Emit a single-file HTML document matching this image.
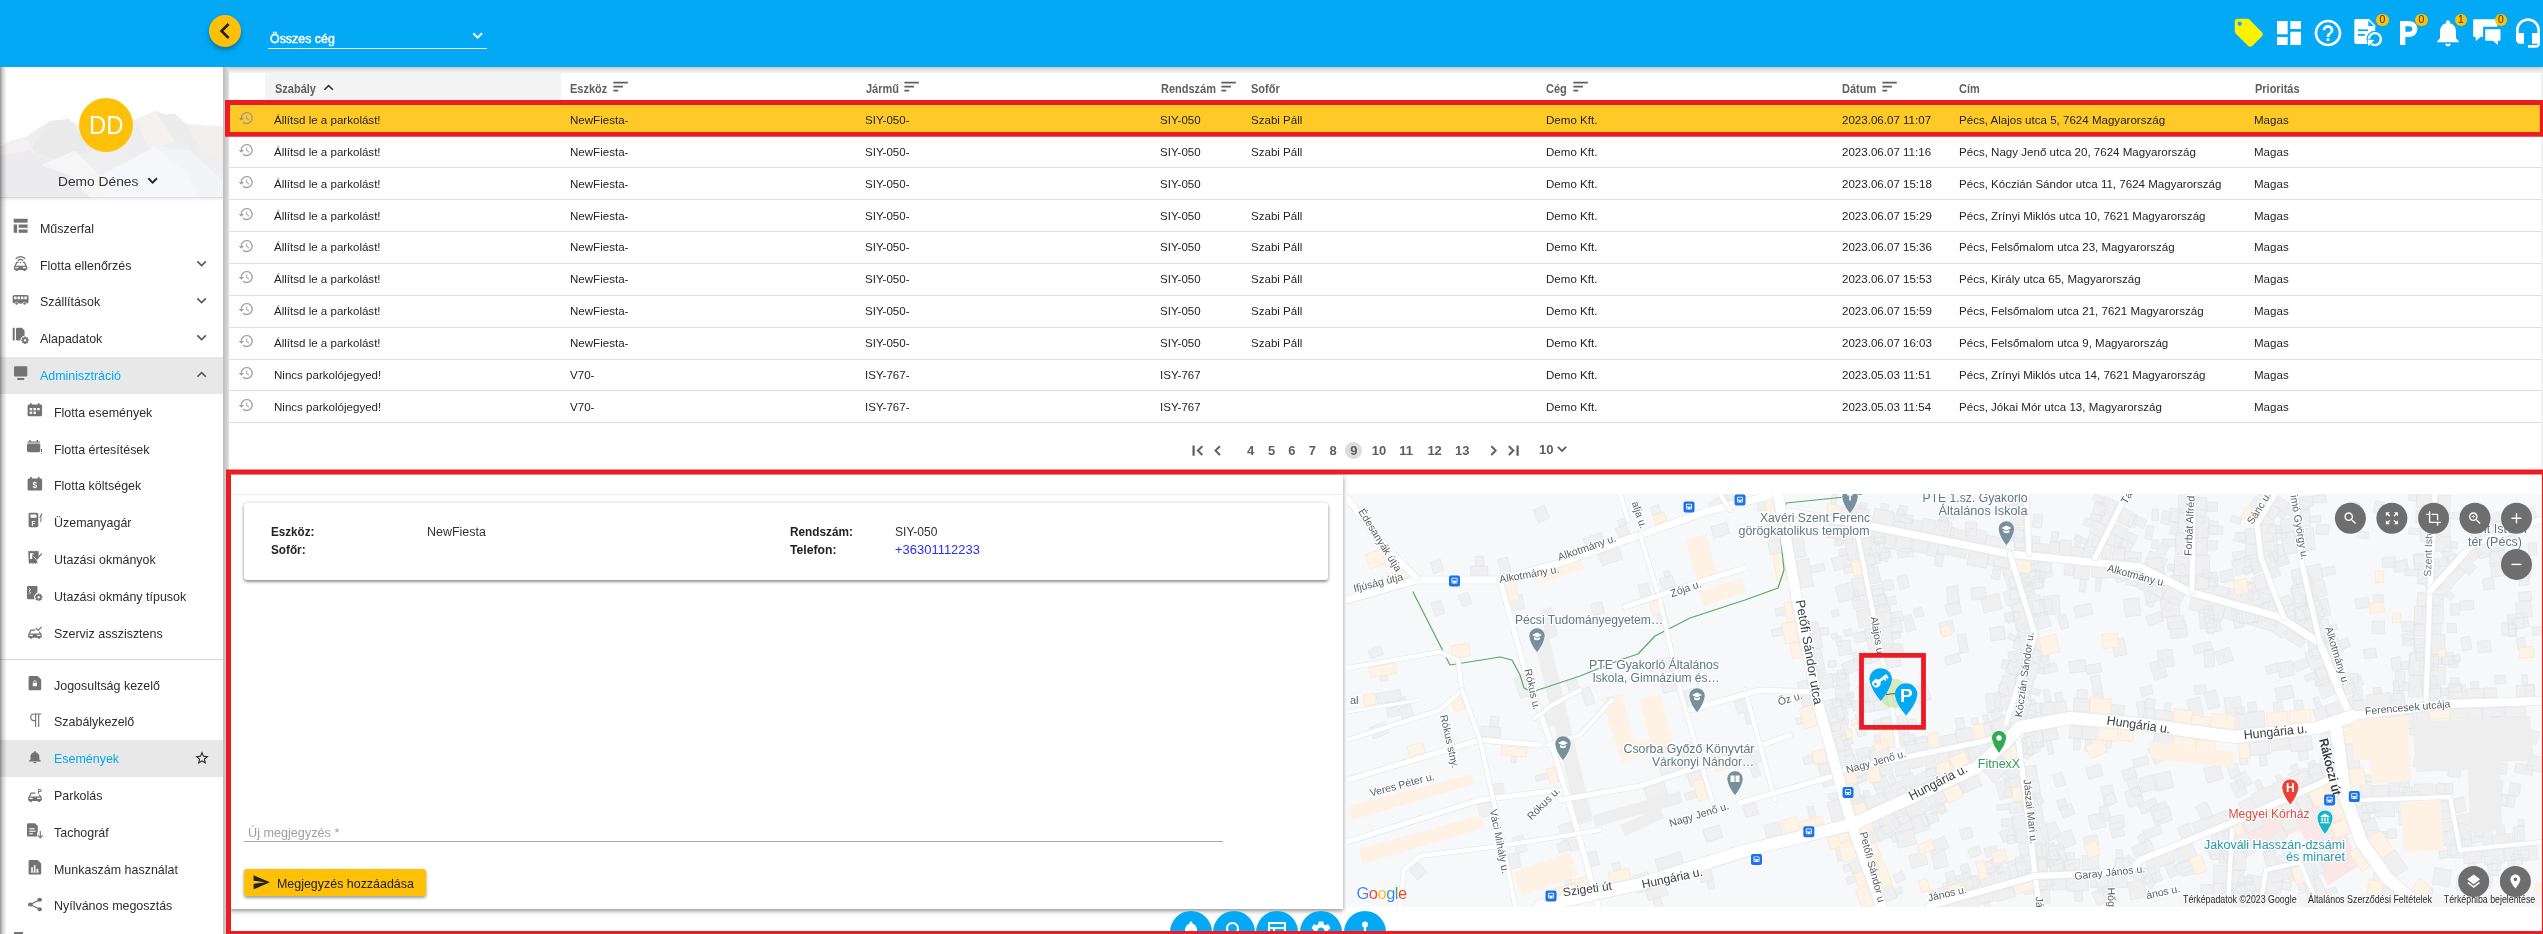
<!DOCTYPE html>
<html lang="hu"><head><meta charset="utf-8"><title>Események</title>
<style>
html,body{margin:0;padding:0}
body{width:2543px;height:934px;overflow:hidden;position:relative;background:#fff;font-family:"Liberation Sans",sans-serif}
.t{position:absolute;white-space:nowrap;line-height:1;transform-origin:0 50%}
.abs{position:absolute}
svg{display:block}
</style></head><body><div id="w" style="position:absolute;left:0;top:0;width:2543px;height:934px;overflow:hidden;will-change:transform">

<div class="abs" style="left:229px;top:66px;width:2314px;height:7px;background:#f3f3f3"></div>
<div class="abs" style="left:265px;top:73px;width:296px;height:31px;background:#f4f4f4"></div>
<span class="t" style="left:274.7px;top:82.8px;font-size:12.0px;color:#5f5f5f;font-weight:bold;transform:scaleX(0.9150);">Szabály</span>
<span class="t" style="left:570.0px;top:82.8px;font-size:12.0px;color:#5f5f5f;font-weight:bold;transform:scaleX(0.9150);">Eszköz</span>
<svg viewBox="0 0 24 24" width="19.2" height="19.2" style="position:absolute;left:610.6px;top:77.1px;fill:#5f5f5f;"><path d="M3 18h6v-2H3v2zM3 6v2h18V6H3zm0 7h12v-2H3v2z"/></svg>
<span class="t" style="left:865.6px;top:82.8px;font-size:12.0px;color:#5f5f5f;font-weight:bold;transform:scaleX(0.9150);">Jármű</span>
<svg viewBox="0 0 24 24" width="19.2" height="19.2" style="position:absolute;left:902.3000000000001px;top:77.1px;fill:#5f5f5f;"><path d="M3 18h6v-2H3v2zM3 6v2h18V6H3zm0 7h12v-2H3v2z"/></svg>
<span class="t" style="left:1160.9px;top:82.8px;font-size:12.0px;color:#5f5f5f;font-weight:bold;transform:scaleX(0.9150);">Rendszám</span>
<svg viewBox="0 0 24 24" width="19.2" height="19.2" style="position:absolute;left:1219.3999999999999px;top:77.1px;fill:#5f5f5f;"><path d="M3 18h6v-2H3v2zM3 6v2h18V6H3zm0 7h12v-2H3v2z"/></svg>
<span class="t" style="left:1251.0px;top:82.8px;font-size:12.0px;color:#5f5f5f;font-weight:bold;transform:scaleX(0.9150);">Sofőr</span>
<span class="t" style="left:1546.4px;top:82.8px;font-size:12.0px;color:#5f5f5f;font-weight:bold;transform:scaleX(0.9150);">Cég</span>
<svg viewBox="0 0 24 24" width="19.2" height="19.2" style="position:absolute;left:1570.8999999999999px;top:77.1px;fill:#5f5f5f;"><path d="M3 18h6v-2H3v2zM3 6v2h18V6H3zm0 7h12v-2H3v2z"/></svg>
<span class="t" style="left:1842.3px;top:82.8px;font-size:12.0px;color:#5f5f5f;font-weight:bold;transform:scaleX(0.9150);">Dátum</span>
<svg viewBox="0 0 24 24" width="19.2" height="19.2" style="position:absolute;left:1879.6px;top:77.1px;fill:#5f5f5f;"><path d="M3 18h6v-2H3v2zM3 6v2h18V6H3zm0 7h12v-2H3v2z"/></svg>
<span class="t" style="left:1959.4px;top:82.8px;font-size:12.0px;color:#5f5f5f;font-weight:bold;transform:scaleX(0.9150);">Cím</span>
<span class="t" style="left:2254.8px;top:82.8px;font-size:12.0px;color:#5f5f5f;font-weight:bold;transform:scaleX(0.9150);">Prioritás</span>
<svg viewBox="0 0 24 24" width="19.2" height="19.2" style="position:absolute;left:318.9px;top:78.3px;fill:#333;"><path d="M12 8l-6 6 1.41 1.41L12 10.83l4.59 4.58L18 14z"/></svg>
<div class="abs" style="left:229px;top:104px;width:2314px;height:31.7px;background:#ffca28"></div>
<div class="abs" style="left:229px;top:135.2px;width:2314px;height:1px;background:#dedede"></div>
<svg viewBox="0 0 24 24" width="16.2" height="16.2" style="position:absolute;left:237.7px;top:109.9px;fill:#9a9a8e;"><path d="M13 3c-4.97 0-9 4.03-9 9H1l3.89 3.89.07.14L9 12H6c0-3.87 3.13-7 7-7s7 3.13 7 7-3.13 7-7 7c-1.93 0-3.68-.79-4.94-2.06l-1.42 1.42C8.27 19.99 10.51 21 13 21c4.97 0 9-4.03 9-9s-4.03-9-9-9zm-1 5v5l4.28 2.54.72-1.21-3.5-2.08V8H12z"/></svg>
<span class="t" style="left:274.2px;top:114.8px;font-size:11.8px;color:#242424;transform:scaleX(0.9790);">Állítsd le a parkolást!</span>
<span class="t" style="left:569.5px;top:114.8px;font-size:11.8px;color:#242424;transform:scaleX(0.9790);">NewFiesta-</span>
<span class="t" style="left:865.1px;top:114.8px;font-size:11.8px;color:#242424;transform:scaleX(0.9790);">SIY-050-</span>
<span class="t" style="left:1160.4px;top:114.8px;font-size:11.8px;color:#242424;transform:scaleX(0.9790);">SIY-050</span>
<span class="t" style="left:1250.5px;top:114.8px;font-size:11.8px;color:#242424;transform:scaleX(0.9790);">Szabi Páll</span>
<span class="t" style="left:1545.9px;top:114.8px;font-size:11.8px;color:#242424;transform:scaleX(0.9790);">Demo Kft.</span>
<span class="t" style="left:1841.8px;top:114.8px;font-size:11.8px;color:#242424;transform:scaleX(0.9790);">2023.06.07 11:07</span>
<span class="t" style="left:1958.9px;top:114.8px;font-size:11.8px;color:#242424;transform:scaleX(0.9790);">Pécs, Alajos utca 5, 7624 Magyarország</span>
<span class="t" style="left:2254.3px;top:114.8px;font-size:11.8px;color:#242424;transform:scaleX(0.9790);">Magas</span>
<div class="abs" style="left:229px;top:167.1px;width:2314px;height:1px;background:#dedede"></div>
<svg viewBox="0 0 24 24" width="16.2" height="16.2" style="position:absolute;left:237.7px;top:141.8px;fill:#a3a3a3;"><path d="M13 3c-4.97 0-9 4.03-9 9H1l3.89 3.89.07.14L9 12H6c0-3.87 3.13-7 7-7s7 3.13 7 7-3.13 7-7 7c-1.93 0-3.68-.79-4.94-2.06l-1.42 1.42C8.27 19.99 10.51 21 13 21c4.97 0 9-4.03 9-9s-4.03-9-9-9zm-1 5v5l4.28 2.54.72-1.21-3.5-2.08V8H12z"/></svg>
<span class="t" style="left:274.2px;top:146.7px;font-size:11.8px;color:#242424;transform:scaleX(0.9790);">Állítsd le a parkolást!</span>
<span class="t" style="left:569.5px;top:146.7px;font-size:11.8px;color:#242424;transform:scaleX(0.9790);">NewFiesta-</span>
<span class="t" style="left:865.1px;top:146.7px;font-size:11.8px;color:#242424;transform:scaleX(0.9790);">SIY-050-</span>
<span class="t" style="left:1160.4px;top:146.7px;font-size:11.8px;color:#242424;transform:scaleX(0.9790);">SIY-050</span>
<span class="t" style="left:1250.5px;top:146.7px;font-size:11.8px;color:#242424;transform:scaleX(0.9790);">Szabi Páll</span>
<span class="t" style="left:1545.9px;top:146.7px;font-size:11.8px;color:#242424;transform:scaleX(0.9790);">Demo Kft.</span>
<span class="t" style="left:1841.8px;top:146.7px;font-size:11.8px;color:#242424;transform:scaleX(0.9790);">2023.06.07 11:16</span>
<span class="t" style="left:1958.9px;top:146.7px;font-size:11.8px;color:#242424;transform:scaleX(0.9790);">Pécs, Nagy Jenő utca 20, 7624 Magyarország</span>
<span class="t" style="left:2254.3px;top:146.7px;font-size:11.8px;color:#242424;transform:scaleX(0.9790);">Magas</span>
<div class="abs" style="left:229px;top:199.0px;width:2314px;height:1px;background:#dedede"></div>
<svg viewBox="0 0 24 24" width="16.2" height="16.2" style="position:absolute;left:237.7px;top:173.7px;fill:#a3a3a3;"><path d="M13 3c-4.97 0-9 4.03-9 9H1l3.89 3.89.07.14L9 12H6c0-3.87 3.13-7 7-7s7 3.13 7 7-3.13 7-7 7c-1.93 0-3.68-.79-4.94-2.06l-1.42 1.42C8.27 19.99 10.51 21 13 21c4.97 0 9-4.03 9-9s-4.03-9-9-9zm-1 5v5l4.28 2.54.72-1.21-3.5-2.08V8H12z"/></svg>
<span class="t" style="left:274.2px;top:178.6px;font-size:11.8px;color:#242424;transform:scaleX(0.9790);">Állítsd le a parkolást!</span>
<span class="t" style="left:569.5px;top:178.6px;font-size:11.8px;color:#242424;transform:scaleX(0.9790);">NewFiesta-</span>
<span class="t" style="left:865.1px;top:178.6px;font-size:11.8px;color:#242424;transform:scaleX(0.9790);">SIY-050-</span>
<span class="t" style="left:1160.4px;top:178.6px;font-size:11.8px;color:#242424;transform:scaleX(0.9790);">SIY-050</span>
<span class="t" style="left:1545.9px;top:178.6px;font-size:11.8px;color:#242424;transform:scaleX(0.9790);">Demo Kft.</span>
<span class="t" style="left:1841.8px;top:178.6px;font-size:11.8px;color:#242424;transform:scaleX(0.9790);">2023.06.07 15:18</span>
<span class="t" style="left:1958.9px;top:178.6px;font-size:11.8px;color:#242424;transform:scaleX(0.9790);">Pécs, Kóczián Sándor utca 11, 7624 Magyarország</span>
<span class="t" style="left:2254.3px;top:178.6px;font-size:11.8px;color:#242424;transform:scaleX(0.9790);">Magas</span>
<div class="abs" style="left:229px;top:230.9px;width:2314px;height:1px;background:#dedede"></div>
<svg viewBox="0 0 24 24" width="16.2" height="16.2" style="position:absolute;left:237.7px;top:205.6px;fill:#a3a3a3;"><path d="M13 3c-4.97 0-9 4.03-9 9H1l3.89 3.89.07.14L9 12H6c0-3.87 3.13-7 7-7s7 3.13 7 7-3.13 7-7 7c-1.93 0-3.68-.79-4.94-2.06l-1.42 1.42C8.27 19.99 10.51 21 13 21c4.97 0 9-4.03 9-9s-4.03-9-9-9zm-1 5v5l4.28 2.54.72-1.21-3.5-2.08V8H12z"/></svg>
<span class="t" style="left:274.2px;top:210.5px;font-size:11.8px;color:#242424;transform:scaleX(0.9790);">Állítsd le a parkolást!</span>
<span class="t" style="left:569.5px;top:210.5px;font-size:11.8px;color:#242424;transform:scaleX(0.9790);">NewFiesta-</span>
<span class="t" style="left:865.1px;top:210.5px;font-size:11.8px;color:#242424;transform:scaleX(0.9790);">SIY-050-</span>
<span class="t" style="left:1160.4px;top:210.5px;font-size:11.8px;color:#242424;transform:scaleX(0.9790);">SIY-050</span>
<span class="t" style="left:1250.5px;top:210.5px;font-size:11.8px;color:#242424;transform:scaleX(0.9790);">Szabi Páll</span>
<span class="t" style="left:1545.9px;top:210.5px;font-size:11.8px;color:#242424;transform:scaleX(0.9790);">Demo Kft.</span>
<span class="t" style="left:1841.8px;top:210.5px;font-size:11.8px;color:#242424;transform:scaleX(0.9790);">2023.06.07 15:29</span>
<span class="t" style="left:1958.9px;top:210.5px;font-size:11.8px;color:#242424;transform:scaleX(0.9790);">Pécs, Zrínyi Miklós utca 10, 7621 Magyarország</span>
<span class="t" style="left:2254.3px;top:210.5px;font-size:11.8px;color:#242424;transform:scaleX(0.9790);">Magas</span>
<div class="abs" style="left:229px;top:262.8px;width:2314px;height:1px;background:#dedede"></div>
<svg viewBox="0 0 24 24" width="16.2" height="16.2" style="position:absolute;left:237.7px;top:237.5px;fill:#a3a3a3;"><path d="M13 3c-4.97 0-9 4.03-9 9H1l3.89 3.89.07.14L9 12H6c0-3.87 3.13-7 7-7s7 3.13 7 7-3.13 7-7 7c-1.93 0-3.68-.79-4.94-2.06l-1.42 1.42C8.27 19.99 10.51 21 13 21c4.97 0 9-4.03 9-9s-4.03-9-9-9zm-1 5v5l4.28 2.54.72-1.21-3.5-2.08V8H12z"/></svg>
<span class="t" style="left:274.2px;top:242.4px;font-size:11.8px;color:#242424;transform:scaleX(0.9790);">Állítsd le a parkolást!</span>
<span class="t" style="left:569.5px;top:242.4px;font-size:11.8px;color:#242424;transform:scaleX(0.9790);">NewFiesta-</span>
<span class="t" style="left:865.1px;top:242.4px;font-size:11.8px;color:#242424;transform:scaleX(0.9790);">SIY-050-</span>
<span class="t" style="left:1160.4px;top:242.4px;font-size:11.8px;color:#242424;transform:scaleX(0.9790);">SIY-050</span>
<span class="t" style="left:1250.5px;top:242.4px;font-size:11.8px;color:#242424;transform:scaleX(0.9790);">Szabi Páll</span>
<span class="t" style="left:1545.9px;top:242.4px;font-size:11.8px;color:#242424;transform:scaleX(0.9790);">Demo Kft.</span>
<span class="t" style="left:1841.8px;top:242.4px;font-size:11.8px;color:#242424;transform:scaleX(0.9790);">2023.06.07 15:36</span>
<span class="t" style="left:1958.9px;top:242.4px;font-size:11.8px;color:#242424;transform:scaleX(0.9790);">Pécs, Felsőmalom utca 23, Magyarország</span>
<span class="t" style="left:2254.3px;top:242.4px;font-size:11.8px;color:#242424;transform:scaleX(0.9790);">Magas</span>
<div class="abs" style="left:229px;top:294.7px;width:2314px;height:1px;background:#dedede"></div>
<svg viewBox="0 0 24 24" width="16.2" height="16.2" style="position:absolute;left:237.7px;top:269.4px;fill:#a3a3a3;"><path d="M13 3c-4.97 0-9 4.03-9 9H1l3.89 3.89.07.14L9 12H6c0-3.87 3.13-7 7-7s7 3.13 7 7-3.13 7-7 7c-1.93 0-3.68-.79-4.94-2.06l-1.42 1.42C8.27 19.99 10.51 21 13 21c4.97 0 9-4.03 9-9s-4.03-9-9-9zm-1 5v5l4.28 2.54.72-1.21-3.5-2.08V8H12z"/></svg>
<span class="t" style="left:274.2px;top:274.3px;font-size:11.8px;color:#242424;transform:scaleX(0.9790);">Állítsd le a parkolást!</span>
<span class="t" style="left:569.5px;top:274.3px;font-size:11.8px;color:#242424;transform:scaleX(0.9790);">NewFiesta-</span>
<span class="t" style="left:865.1px;top:274.3px;font-size:11.8px;color:#242424;transform:scaleX(0.9790);">SIY-050-</span>
<span class="t" style="left:1160.4px;top:274.3px;font-size:11.8px;color:#242424;transform:scaleX(0.9790);">SIY-050</span>
<span class="t" style="left:1250.5px;top:274.3px;font-size:11.8px;color:#242424;transform:scaleX(0.9790);">Szabi Páll</span>
<span class="t" style="left:1545.9px;top:274.3px;font-size:11.8px;color:#242424;transform:scaleX(0.9790);">Demo Kft.</span>
<span class="t" style="left:1841.8px;top:274.3px;font-size:11.8px;color:#242424;transform:scaleX(0.9790);">2023.06.07 15:53</span>
<span class="t" style="left:1958.9px;top:274.3px;font-size:11.8px;color:#242424;transform:scaleX(0.9790);">Pécs, Király utca 65, Magyarország</span>
<span class="t" style="left:2254.3px;top:274.3px;font-size:11.8px;color:#242424;transform:scaleX(0.9790);">Magas</span>
<div class="abs" style="left:229px;top:326.6px;width:2314px;height:1px;background:#dedede"></div>
<svg viewBox="0 0 24 24" width="16.2" height="16.2" style="position:absolute;left:237.7px;top:301.29999999999995px;fill:#a3a3a3;"><path d="M13 3c-4.97 0-9 4.03-9 9H1l3.89 3.89.07.14L9 12H6c0-3.87 3.13-7 7-7s7 3.13 7 7-3.13 7-7 7c-1.93 0-3.68-.79-4.94-2.06l-1.42 1.42C8.27 19.99 10.51 21 13 21c4.97 0 9-4.03 9-9s-4.03-9-9-9zm-1 5v5l4.28 2.54.72-1.21-3.5-2.08V8H12z"/></svg>
<span class="t" style="left:274.2px;top:306.2px;font-size:11.8px;color:#242424;transform:scaleX(0.9790);">Állítsd le a parkolást!</span>
<span class="t" style="left:569.5px;top:306.2px;font-size:11.8px;color:#242424;transform:scaleX(0.9790);">NewFiesta-</span>
<span class="t" style="left:865.1px;top:306.2px;font-size:11.8px;color:#242424;transform:scaleX(0.9790);">SIY-050-</span>
<span class="t" style="left:1160.4px;top:306.2px;font-size:11.8px;color:#242424;transform:scaleX(0.9790);">SIY-050</span>
<span class="t" style="left:1250.5px;top:306.2px;font-size:11.8px;color:#242424;transform:scaleX(0.9790);">Szabi Páll</span>
<span class="t" style="left:1545.9px;top:306.2px;font-size:11.8px;color:#242424;transform:scaleX(0.9790);">Demo Kft.</span>
<span class="t" style="left:1841.8px;top:306.2px;font-size:11.8px;color:#242424;transform:scaleX(0.9790);">2023.06.07 15:59</span>
<span class="t" style="left:1958.9px;top:306.2px;font-size:11.8px;color:#242424;transform:scaleX(0.9790);">Pécs, Felsőmalom utca 21, 7621 Magyarország</span>
<span class="t" style="left:2254.3px;top:306.2px;font-size:11.8px;color:#242424;transform:scaleX(0.9790);">Magas</span>
<div class="abs" style="left:229px;top:358.5px;width:2314px;height:1px;background:#dedede"></div>
<svg viewBox="0 0 24 24" width="16.2" height="16.2" style="position:absolute;left:237.7px;top:333.2px;fill:#a3a3a3;"><path d="M13 3c-4.97 0-9 4.03-9 9H1l3.89 3.89.07.14L9 12H6c0-3.87 3.13-7 7-7s7 3.13 7 7-3.13 7-7 7c-1.93 0-3.68-.79-4.94-2.06l-1.42 1.42C8.27 19.99 10.51 21 13 21c4.97 0 9-4.03 9-9s-4.03-9-9-9zm-1 5v5l4.28 2.54.72-1.21-3.5-2.08V8H12z"/></svg>
<span class="t" style="left:274.2px;top:338.1px;font-size:11.8px;color:#242424;transform:scaleX(0.9790);">Állítsd le a parkolást!</span>
<span class="t" style="left:569.5px;top:338.1px;font-size:11.8px;color:#242424;transform:scaleX(0.9790);">NewFiesta-</span>
<span class="t" style="left:865.1px;top:338.1px;font-size:11.8px;color:#242424;transform:scaleX(0.9790);">SIY-050-</span>
<span class="t" style="left:1160.4px;top:338.1px;font-size:11.8px;color:#242424;transform:scaleX(0.9790);">SIY-050</span>
<span class="t" style="left:1250.5px;top:338.1px;font-size:11.8px;color:#242424;transform:scaleX(0.9790);">Szabi Páll</span>
<span class="t" style="left:1545.9px;top:338.1px;font-size:11.8px;color:#242424;transform:scaleX(0.9790);">Demo Kft.</span>
<span class="t" style="left:1841.8px;top:338.1px;font-size:11.8px;color:#242424;transform:scaleX(0.9790);">2023.06.07 16:03</span>
<span class="t" style="left:1958.9px;top:338.1px;font-size:11.8px;color:#242424;transform:scaleX(0.9790);">Pécs, Felsőmalom utca 9, Magyarország</span>
<span class="t" style="left:2254.3px;top:338.1px;font-size:11.8px;color:#242424;transform:scaleX(0.9790);">Magas</span>
<div class="abs" style="left:229px;top:390.4px;width:2314px;height:1px;background:#dedede"></div>
<svg viewBox="0 0 24 24" width="16.2" height="16.2" style="position:absolute;left:237.7px;top:365.1px;fill:#a3a3a3;"><path d="M13 3c-4.97 0-9 4.03-9 9H1l3.89 3.89.07.14L9 12H6c0-3.87 3.13-7 7-7s7 3.13 7 7-3.13 7-7 7c-1.93 0-3.68-.79-4.94-2.06l-1.42 1.42C8.27 19.99 10.51 21 13 21c4.97 0 9-4.03 9-9s-4.03-9-9-9zm-1 5v5l4.28 2.54.72-1.21-3.5-2.08V8H12z"/></svg>
<span class="t" style="left:274.2px;top:370.0px;font-size:11.8px;color:#242424;transform:scaleX(0.9790);">Nincs parkolójegyed!</span>
<span class="t" style="left:569.5px;top:370.0px;font-size:11.8px;color:#242424;transform:scaleX(0.9790);">V70-</span>
<span class="t" style="left:865.1px;top:370.0px;font-size:11.8px;color:#242424;transform:scaleX(0.9790);">ISY-767-</span>
<span class="t" style="left:1160.4px;top:370.0px;font-size:11.8px;color:#242424;transform:scaleX(0.9790);">ISY-767</span>
<span class="t" style="left:1545.9px;top:370.0px;font-size:11.8px;color:#242424;transform:scaleX(0.9790);">Demo Kft.</span>
<span class="t" style="left:1841.8px;top:370.0px;font-size:11.8px;color:#242424;transform:scaleX(0.9790);">2023.05.03 11:51</span>
<span class="t" style="left:1958.9px;top:370.0px;font-size:11.8px;color:#242424;transform:scaleX(0.9790);">Pécs, Zrínyi Miklós utca 14, 7621 Magyarország</span>
<span class="t" style="left:2254.3px;top:370.0px;font-size:11.8px;color:#242424;transform:scaleX(0.9790);">Magas</span>
<div class="abs" style="left:229px;top:422.3px;width:2314px;height:1px;background:#dedede"></div>
<svg viewBox="0 0 24 24" width="16.2" height="16.2" style="position:absolute;left:237.7px;top:397.0px;fill:#a3a3a3;"><path d="M13 3c-4.97 0-9 4.03-9 9H1l3.89 3.89.07.14L9 12H6c0-3.87 3.13-7 7-7s7 3.13 7 7-3.13 7-7 7c-1.93 0-3.68-.79-4.94-2.06l-1.42 1.42C8.27 19.99 10.51 21 13 21c4.97 0 9-4.03 9-9s-4.03-9-9-9zm-1 5v5l4.28 2.54.72-1.21-3.5-2.08V8H12z"/></svg>
<span class="t" style="left:274.2px;top:401.9px;font-size:11.8px;color:#242424;transform:scaleX(0.9790);">Nincs parkolójegyed!</span>
<span class="t" style="left:569.5px;top:401.9px;font-size:11.8px;color:#242424;transform:scaleX(0.9790);">V70-</span>
<span class="t" style="left:865.1px;top:401.9px;font-size:11.8px;color:#242424;transform:scaleX(0.9790);">ISY-767-</span>
<span class="t" style="left:1160.4px;top:401.9px;font-size:11.8px;color:#242424;transform:scaleX(0.9790);">ISY-767</span>
<span class="t" style="left:1545.9px;top:401.9px;font-size:11.8px;color:#242424;transform:scaleX(0.9790);">Demo Kft.</span>
<span class="t" style="left:1841.8px;top:401.9px;font-size:11.8px;color:#242424;transform:scaleX(0.9790);">2023.05.03 11:54</span>
<span class="t" style="left:1958.9px;top:401.9px;font-size:11.8px;color:#242424;transform:scaleX(0.9790);">Pécs, Jókai Mór utca 13, Magyarország</span>
<span class="t" style="left:2254.3px;top:401.9px;font-size:11.8px;color:#242424;transform:scaleX(0.9790);">Magas</span>
<div class="abs" style="left:2541px;top:66px;width:2px;height:404px;background:#f0f0f0"></div>
<svg viewBox="0 0 24 24" width="19.2" height="19.2" style="position:absolute;left:1188.0px;top:441.0px;fill:#5f5f5f;stroke:#5f5f5f;stroke-width:.7"><path d="M18.41 16.59L13.82 12l4.59-4.59L17 6l-6 6 6 6zM6 6h2v12H6z"/></svg>
<svg viewBox="0 0 24 24" width="19.2" height="19.2" style="position:absolute;left:1207.7px;top:441.0px;fill:#5f5f5f;stroke:#5f5f5f;stroke-width:.7"><path d="M15.41 7.41L14 6l-6 6 6 6 1.41-1.41L10.83 12z"/></svg>
<div class="abs" style="left:1345.1px;top:441.9px;width:17.4px;height:17.4px;border-radius:50%;background:#dcdcdc"></div>
<span class="t" style="left:1247.0px;top:444.3px;font-size:13px;color:#5f5f5f;font-weight:bold;">4</span>
<span class="t" style="left:1268.0px;top:444.3px;font-size:13px;color:#5f5f5f;font-weight:bold;">5</span>
<span class="t" style="left:1288.3px;top:444.3px;font-size:13px;color:#5f5f5f;font-weight:bold;">6</span>
<span class="t" style="left:1308.8px;top:444.3px;font-size:13px;color:#5f5f5f;font-weight:bold;">7</span>
<span class="t" style="left:1329.6px;top:444.3px;font-size:13px;color:#5f5f5f;font-weight:bold;">8</span>
<span class="t" style="left:1350.2px;top:444.3px;font-size:13px;color:#5f5f5f;font-weight:bold;">9</span>
<span class="t" style="left:1371.7px;top:444.3px;font-size:13px;color:#5f5f5f;font-weight:bold;">10</span>
<span class="t" style="left:1399.3px;top:444.3px;font-size:13px;color:#5f5f5f;font-weight:bold;">11</span>
<span class="t" style="left:1427.4px;top:444.3px;font-size:13px;color:#5f5f5f;font-weight:bold;">12</span>
<span class="t" style="left:1455.1px;top:444.3px;font-size:13px;color:#5f5f5f;font-weight:bold;">13</span>
<svg viewBox="0 0 24 24" width="19.2" height="19.2" style="position:absolute;left:1483.8000000000002px;top:441.0px;fill:#5f5f5f;stroke:#5f5f5f;stroke-width:.7"><path d="M10 6L8.59 7.41 13.17 12l-4.58 4.59L10 18l6-6z"/></svg>
<svg viewBox="0 0 24 24" width="19.2" height="19.2" style="position:absolute;left:1503.6000000000001px;top:441.0px;fill:#5f5f5f;stroke:#5f5f5f;stroke-width:.7"><path d="M5.59 7.41L10.18 12l-4.59 4.59L7 18l6-6-6-6zM16 6h2v12h-2z"/></svg>
<span class="t" style="left:1539.0px;top:443.4px;font-size:13px;color:#5f5f5f;font-weight:bold;">10</span>
<svg viewBox="0 0 24 24" width="18" height="18" style="position:absolute;left:1552.9px;top:440.40000000000003px;fill:#5f5f5f;stroke:#5f5f5f;stroke-width:.7"><path d="M16.59 8.59L12 13.17 7.41 8.59 6 10l6 6 6-6z"/></svg>
<div class="abs" style="left:229px;top:475px;width:1114px;height:434px;background:#fff;box-shadow:0 2px 4px rgba(0,0,0,.35),0 1px 8px rgba(0,0,0,.12)"></div>
<div class="abs" style="left:229px;top:493.5px;width:2314px;height:1px;background:#ececec"></div>
<div class="abs" style="left:244px;top:503px;width:1083.5px;height:76.5px;background:#fff;border-radius:3px;box-shadow:0 2px 3px rgba(0,0,0,.38),0 0 5px rgba(0,0,0,.14)"></div>
<span class="t" style="left:270.9px;top:525.7px;font-size:12.4px;color:#222;font-weight:bold;transform:scaleX(0.9400);">Eszköz:</span>
<span class="t" style="left:270.9px;top:543.5px;font-size:12.4px;color:#222;font-weight:bold;transform:scaleX(0.9478);">Sofőr:</span>
<span class="t" style="left:427.0px;top:525.7px;font-size:12.4px;color:#333;transform:scaleX(1.0073);">NewFiesta</span>
<span class="t" style="left:789.5px;top:525.7px;font-size:12.4px;color:#222;font-weight:bold;transform:scaleX(0.9524);">Rendszám:</span>
<span class="t" style="left:789.5px;top:543.5px;font-size:12.4px;color:#222;font-weight:bold;transform:scaleX(0.9831);">Telefon:</span>
<span class="t" style="left:894.5px;top:525.7px;font-size:12.4px;color:#333;transform:scaleX(0.9732);">SIY-050</span>
<span class="t" style="left:894.5px;top:543.5px;font-size:12.4px;color:#2c2cf2;transform:scaleX(1.0460);">+36301112233</span>
<span class="t" style="left:248.4px;top:826.2px;font-size:13.2px;color:#9e9e9e;transform:scaleX(0.9583);">Új megjegyzés *</span>
<div class="abs" style="left:244px;top:841px;width:979px;height:1px;background:#a8a8a8"></div>
<div class="abs" style="left:244px;top:869px;width:182px;height:27px;background:#ffc107;border-radius:3px;box-shadow:0 2px 3px rgba(0,0,0,.3),0 1px 4px rgba(0,0,0,.15)"></div>
<svg viewBox="0 0 24 24" width="18.7" height="18.7" style="position:absolute;left:252.2px;top:872.8px;fill:#222;"><path d="M2.01 21L23 12 2.01 3 2 10l15 2-15 2z"/></svg>
<span class="t" style="left:276.5px;top:876.7px;font-size:13.2px;color:#222;transform:scaleX(0.9429);">Megjegyzés hozzáadása</span>
<div class="abs" style="left:1170.0px;top:911px;width:42px;height:42px;border-radius:50%;background:#03a9f4"></div>
<svg viewBox="0 0 24 24" width="24" height="24" style="position:absolute;left:1179px;top:918.6px;fill:#fff;"><path d="M12 22c1.1 0 2-.9 2-2h-4c0 1.1.89 2 2 2zm6-6v-5c0-3.07-1.64-5.64-4.5-6.32V4c0-.83-.67-1.5-1.5-1.5s-1.5.67-1.5 1.5v.68C7.63 5.36 6 7.92 6 11v5l-2 2v1h16v-1l-2-2z"/></svg>
<div class="abs" style="left:1212.8px;top:911px;width:42px;height:42px;border-radius:50%;background:#03a9f4"></div>
<svg viewBox="0 0 24 24" width="24" height="24" style="position:absolute;left:1223.3px;top:918.6px;fill:#fff;"><path d="M15.5 14h-.79l-.28-.27C15.41 12.59 16 11.11 16 9.5 16 5.91 13.09 3 9.5 3S3 5.91 3 9.5 5.91 16 9.5 16c1.61 0 3.09-.59 4.23-1.57l.27.28v.79l5 4.99L20.49 19l-4.99-5zm-6 0C7.01 14 5 11.99 5 9.5S7.01 5 9.5 5 14 7.01 14 9.5 11.99 14 9.5 14z"/></svg>
<div class="abs" style="left:1256.4px;top:911px;width:42px;height:42px;border-radius:50%;background:#03a9f4"></div>
<svg viewBox="0 0 24 24" width="24" height="24" style="position:absolute;left:1265.4px;top:918.6px;fill:#fff;"><path d="M3 3v18h18V3H3zm5 16H5V10h3v9zm11 0h-9V10h9v9zm0-11H5V5h14v3z"/></svg>
<div class="abs" style="left:1300.0px;top:911px;width:42px;height:42px;border-radius:50%;background:#03a9f4"></div>
<svg viewBox="0 0 24 24" width="24" height="24" style="position:absolute;left:1309px;top:918.6px;fill:#fff;"><path d="M19.14 12.94c.04-.3.06-.61.06-.94 0-.32-.02-.64-.07-.94l2.03-1.58c.18-.14.23-.41.12-.61l-1.92-3.32c-.12-.22-.37-.29-.59-.22l-2.39.96c-.5-.38-1.03-.7-1.62-.94l-.36-2.54c-.04-.24-.24-.41-.48-.41h-3.84c-.24 0-.43.17-.47.41l-.36 2.54c-.59.24-1.13.57-1.62.94l-2.39-.96c-.22-.08-.47 0-.59.22L2.74 8.87c-.12.21-.08.47.12.61l2.03 1.58c-.05.3-.09.63-.09.94s.02.64.07.94l-2.03 1.58c-.18.14-.23.41-.12.61l1.92 3.32c.12.22.37.29.59.22l2.39-.96c.5.38 1.03.7 1.62.94l.36 2.54c.05.24.24.41.48.41h3.84c.24 0 .44-.17.47-.41l.36-2.54c.59-.24 1.13-.56 1.62-.94l2.39.96c.22.08.47 0 .59-.22l1.92-3.32c.12-.22.07-.47-.12-.61l-2.01-1.58zM12 15.6c-1.98 0-3.6-1.62-3.6-3.6s1.620-3.6 3.6-3.6 3.6 1.62 3.6 3.6-1.62 3.6-3.6 3.6z"/></svg>
<div class="abs" style="left:1343.7px;top:911px;width:42px;height:42px;border-radius:50%;background:#03a9f4"></div>
<svg class="abs" style="left:1354.7px;top:918px" width="20" height="16" viewBox="0 0 20 16"><circle cx="10" cy="6.6" r="3" fill="#fff"/><rect x="8.9" y="8" width="2.2" height="8" fill="#fff"/></svg>
<svg class="abs" style="left:1347px;top:494px;font-family:'Liberation Sans',sans-serif" width="1194.8" height="412.7" viewBox="1347 494 1194.8 412.7">
<rect x="1347" y="494" width="1194.8" height="412.7" fill="#f7f8fa"/>
<polygon points="2237.0,822.0 2290.0,803.0 2326.0,784.0 2342.0,822.0 2359.0,866.0 2328.0,885.5 2314.0,855.0 2300.0,830.0 2262.0,846.0 2240.0,850.0" fill="#fbe8e6" />
<path d="M1470.6 566.2l17.0 0.0 -0.0 9.1 -17.0 -0.0zM1475.2 556.4l8.6 0.0 -0.0 9.8 -8.6 -0.0zM1598.2 554.6l20.3 -7.1 4.0 11.3 -20.3 7.1zM1583.2 538.6l17.8 -6.2 3.5 10.0 -17.8 6.2zM1615.3 528.5l11.0 -3.9 3.2 9.1 -11.0 3.9zM1617.4 520.5l6.7 -2.3 2.3 6.6 -6.7 2.3zM1650.4 507.5l8.3 -2.9 2.8 8.0 -8.3 2.9zM1726.4 492.6l10.5 -2.7 2.2 8.5 -10.5 2.7zM1729.2 484.3l5.3 -1.3 1.8 7.1 -5.3 1.3zM1522.8 674.9l7.1 20.1 -9.3 3.3 -7.1 -20.1zM1552.6 712.1l4.1 11.6 -7.8 2.8 -4.1 -11.6zM1548.1 772.4l1.6 5.4 -13.1 3.9 -1.6 -5.4zM1570.9 822.0l4.5 15.2 -12.8 3.8 -4.5 -15.2zM1575.9 839.1l3.0 10.2 -7.9 2.3 -3.0 -10.2zM1567.9 840.6l2.7 9.1 -11.5 3.4 -2.7 -9.1zM1595.8 850.7l3.7 13.8 -8.2 2.2 -3.7 -13.8zM1669.4 656.8l3.7 16.7 -10.8 2.4 -3.7 -16.7zM1659.5 660.6l1.9 8.7 -11.6 2.6 -1.9 -8.7zM1673.3 674.7l3.5 15.7 -13.4 3.0 -3.5 -15.7zM1696.5 687.6l5.3 18.5 -12.8 3.7 -5.3 -18.5zM1694.8 790.5l2.1 6.9 -10.5 3.1 -2.1 -6.9zM1712.8 756.3l2.9 9.6 -9.7 2.9 -2.9 -9.6zM1722.8 754.9l2.3 7.6 -10.2 3.1 -2.3 -7.6zM1656.3 615.1l9.2 -3.1 3.8 11.3 -9.2 3.1zM1659.2 579.1l12.7 -4.3 3.8 11.1 -12.7 4.3zM1663.4 572.3l5.2 -1.8 2.0 5.9 -5.2 1.8zM1718.3 497.4l6.2 10.0 -10.0 6.3 -6.2 -10.0zM1734.9 486.6l8.6 13.8 -11.3 7.1 -8.6 -13.8zM1745.3 486.8l3.3 5.4 -6.5 4.1 -3.3 -5.4zM1379.8 675.6l7.0 -1.2 1.0 6.0 -7.0 1.2zM1413.8 715.1l-11.6 3.8 -3.4 -10.4 11.6 -3.8zM1408.0 706.0l-7.1 2.3 -3.0 -9.5 7.1 -2.3zM1386.4 708.3l11.5 -1.9 1.5 9.0 -11.5 1.9zM1375.8 693.7l24.4 -4.0 1.7 10.5 -24.4 4.0zM1511.2 756.0l5.2 0.4 -0.6 6.6 -5.2 -0.4zM1481.4 726.0l19.5 1.6 -0.9 10.3 -19.5 -1.6zM1490.7 716.1l8.2 0.7 -0.9 10.5 -8.2 -0.7zM1491.0 784.4l11.9 -1.5 1.3 10.4 -11.9 1.5zM1408.9 870.0l9.1 -7.9 8.7 10.0 -9.1 7.9zM1490.4 801.7l2.9 13.1 -12.9 2.9 -2.9 -13.1zM1518.2 852.4l2.9 14.6 -10.1 2.0 -2.9 -14.6zM1644.0 788.6l19.9 -6.5 4.0 12.3 -19.9 6.5zM1686.9 774.6l17.9 -5.8 4.0 12.2 -17.9 5.8zM1658.5 765.3l20.0 -6.5 3.2 9.8 -20.0 6.5zM1679.0 755.0l21.8 -7.1 4.2 13.0 -21.8 7.1zM1684.1 744.3l8.9 -2.9 3.1 9.5 -8.9 2.9zM1740.2 756.7l22.6 -8.1 3.9 11.0 -22.6 8.1zM1749.1 765.7l7.5 -2.7 4.4 12.4 -7.5 2.7zM1734.4 701.2l14.6 -4.2 3.7 12.9 -14.6 4.2zM1744.1 713.7l6.7 -1.9 3.1 10.7 -6.7 1.9zM1742.7 806.1l12.4 -3.6 3.4 11.6 -12.4 3.6zM1829.2 523.8l19.5 3.3 -2.3 13.5 -19.5 -3.3zM1835.1 538.5l6.7 1.1 -1.1 6.7 -6.7 -1.1zM1832.2 494.1l5.2 0.9 -1.8 10.4 -5.2 -0.9zM1842.3 506.7l13.0 2.2 -1.6 9.6 -13.0 -2.2zM1857.7 508.0l11.5 2.0 -1.8 10.8 -11.5 -2.0zM1860.1 502.3l7.1 1.2 -1.1 6.3 -7.1 -1.2zM1872.3 531.2l13.3 2.7 -2.1 10.5 -13.3 -2.7zM1871.9 542.4l8.4 1.7 -2.7 13.5 -8.4 -1.7zM1886.4 534.1l9.7 1.9 -2.6 13.0 -9.7 -1.9zM1881.5 547.3l8.6 1.7 -2.6 13.0 -8.6 -1.7zM1897.2 536.2l14.7 2.9 -2.7 13.6 -14.7 -2.9zM1913.0 539.4l15.1 3.0 -2.3 11.4 -15.1 -3.0zM1929.1 542.6l9.3 1.9 -2.5 12.5 -9.3 -1.9zM1938.7 544.5l11.6 2.3 -1.7 8.4 -11.6 -2.3zM1936.4 553.5l7.7 1.5 -2.4 11.8 -7.7 -1.5zM1952.1 547.2l15.0 3.0 -1.6 8.2 -15.0 -3.0zM1969.6 550.7l19.2 3.8 -2.8 13.8 -19.2 -3.8zM1988.8 554.6l21.4 4.3 -1.9 9.7 -21.4 -4.3zM1993.8 565.6l7.6 1.5 -2.5 12.6 -7.6 -1.5zM1874.8 508.3l19.9 4.0 -2.7 13.3 -19.9 -4.0zM1881.5 503.2l7.5 1.5 -1.3 6.3 -7.5 -1.5zM1895.3 515.5l16.3 3.3 -2.1 10.4 -16.3 -3.3zM1912.8 519.4l9.5 1.9 -2.0 10.0 -9.5 -1.9zM1923.8 518.1l12.3 2.5 -2.7 13.3 -12.3 -2.5zM1937.7 519.9l14.6 2.9 -2.9 14.3 -14.6 -2.9zM1940.2 511.7l8.0 1.6 -1.9 9.3 -8.0 -1.6zM1951.5 528.1l16.4 3.3 -1.8 9.1 -16.4 -3.3zM1969.8 528.2l17.4 3.5 -2.5 12.5 -17.4 -3.5zM1986.9 535.0l20.5 4.1 -1.9 9.3 -20.5 -4.1zM2031.3 560.9l19.8 2.0 -1.0 10.0 -19.8 -2.0zM2039.8 571.5l5.7 0.6 -1.0 10.4 -5.7 -0.6zM2065.1 564.2l9.4 0.9 -1.1 10.6 -9.4 -0.9zM2074.7 565.2l15.0 1.5 -1.3 13.0 -15.0 -1.5zM2080.6 579.0l5.6 0.6 -1.3 12.6 -5.6 -0.6zM2092.0 566.9l15.8 1.6 -1.0 10.0 -15.8 -1.6zM2096.1 577.6l5.4 0.5 -1.3 13.4 -5.4 -0.5zM2109.3 568.6l15.9 1.6 -0.9 8.6 -15.9 -1.6zM2127.3 570.5l11.9 1.2 -1.4 14.4 -11.9 -1.2zM2015.1 541.4l17.4 1.7 -0.8 8.3 -17.4 -1.7zM2023.8 530.0l5.9 0.6 -1.2 11.9 -5.9 -0.6zM2032.7 542.8l16.2 1.6 -0.9 8.6 -16.2 -1.6zM2050.3 541.7l9.4 0.9 -1.2 11.5 -9.4 -0.9zM2052.0 531.3l6.7 0.7 -1.1 10.6 -6.7 -0.7zM2060.4 539.7l11.2 1.1 -1.5 14.5 -11.2 -1.1zM2072.2 546.8l10.9 1.1 -0.9 8.6 -10.9 -1.1zM2075.7 536.6l5.6 0.6 -1.0 10.2 -5.6 -0.6zM2084.6 546.1l15.5 1.6 -1.1 10.5 -15.5 -1.6zM2092.2 539.6l6.2 0.6 -0.7 7.0 -6.2 -0.6zM2102.7 543.9l9.2 0.9 -1.5 14.5 -9.2 -0.9zM2113.5 546.3l11.9 1.2 -1.3 13.2 -11.9 -1.2zM2115.3 537.7l7.6 0.8 -0.9 9.1 -7.6 -0.8zM2125.2 551.1l16.4 1.6 -1.0 9.6 -16.4 -1.6zM2138.8 571.6l15.0 7.5 -6.7 13.3 -15.0 -7.5zM2155.6 580.1l12.0 6.0 -6.1 12.2 -12.0 -6.0zM2151.9 592.6l6.3 3.2 -6.0 12.1 -6.3 -3.2zM2168.2 586.4l16.6 8.3 -5.7 11.4 -16.6 -8.3zM2167.1 601.8l5.5 2.7 -3.4 6.8 -5.5 -2.7zM2150.3 550.8l17.1 8.6 -6.4 12.8 -17.1 -8.6zM2161.2 542.1l8.3 4.1 -4.9 9.8 -8.3 -4.1zM2180.2 571.9l16.7 8.4 -4.0 8.0 -16.7 -8.4zM2191.9 597.4l18.7 5.3 -3.3 11.7 -18.7 -5.3zM2212.7 603.3l12.4 3.5 -4.0 14.2 -12.4 -3.5zM2209.2 618.5l8.6 2.4 -3.7 13.2 -8.6 -2.4zM2225.7 606.9l11.1 3.1 -3.0 10.8 -11.1 -3.1zM2238.5 610.5l17.6 4.9 -2.9 10.3 -17.6 -4.9zM2258.3 616.1l19.0 5.3 -2.9 10.4 -19.0 -5.3zM2197.2 575.1l19.1 5.4 -3.7 13.0 -19.1 -5.4zM2203.8 570.1l8.7 2.5 -1.9 6.6 -8.7 -2.5zM2216.4 584.7l12.9 3.6 -2.6 9.1 -12.9 -3.6zM2230.0 588.1l9.8 2.7 -2.7 9.5 -9.8 -2.7zM2242.5 588.6l10.2 2.9 -3.5 12.3 -10.2 -2.9zM2244.3 580.4l9.4 2.6 -2.2 7.9 -9.4 -2.6zM2255.2 590.6l16.3 4.6 -3.9 13.7 -16.3 -4.6zM2279.3 622.7l9.4 5.9 -6.3 9.9 -9.4 -5.9zM2289.6 629.3l16.5 10.5 -5.2 8.2 -16.5 -10.5zM2291.4 604.3l17.4 11.0 -6.8 10.7 -17.4 -11.0zM2305.4 596.9l5.8 3.6 -7.3 11.5 -5.8 -3.6zM2309.7 615.8l13.3 8.5 -6.8 10.8 -13.3 -8.5zM2323.2 607.6l4.5 2.8 -7.4 11.7 -4.5 -2.8zM2317.0 648.1l6.9 17.1 -12.3 5.0 -6.9 -17.1zM2305.6 657.7l3.5 8.8 -12.6 5.1 -3.5 -8.8zM2324.4 666.5l3.6 8.9 -10.0 4.0 -3.6 -8.9zM2315.2 671.6l2.4 6.0 -11.2 4.5 -2.4 -6.0zM2328.9 677.7l6.5 16.2 -12.6 5.1 -6.5 -16.2zM2337.4 636.7l6.2 15.3 -12.8 5.2 -6.2 -15.3zM2347.3 637.5l3.5 8.7 -9.4 3.8 -3.5 -8.7zM2338.7 654.4l4.9 12.1 -7.8 3.1 -4.9 -12.1zM2351.4 678.8l4.9 12.2 -10.3 4.1 -4.9 -12.2zM2360.0 675.3l3.7 9.1 -8.4 3.4 -3.7 -9.1zM2357.6 693.4l8.4 16.9 -10.1 5.0 -8.4 -16.9zM1855.1 538.6l4.0 20.4 -10.5 2.1 -4.0 -20.4zM1846.0 548.1l1.4 7.1 -7.5 1.5 -1.4 -7.1zM1852.0 563.9l1.6 8.2 -9.0 1.8 -1.6 -8.2zM1862.6 576.7l3.5 17.7 -11.1 2.2 -3.5 -17.7zM1866.2 594.5l2.4 11.9 -14.6 2.9 -2.4 -11.9zM1868.9 608.4l3.4 16.9 -12.9 2.6 -3.4 -16.9zM1872.7 627.3l1.8 9.3 -8.2 1.6 -1.8 -9.3zM1864.6 631.3l1.9 9.5 -11.2 2.2 -1.9 -9.5zM1874.6 637.2l2.1 10.8 -8.0 1.6 -2.1 -10.8zM1877.1 649.8l2.2 11.2 -13.4 2.7 -2.2 -11.2zM1864.4 650.5l1.8 9.3 -12.1 2.4 -1.8 -9.3zM1873.5 536.0l3.3 16.7 -11.9 2.4 -3.3 -16.7zM1884.5 536.3l1.3 6.3 -10.2 2.0 -1.3 -6.3zM1878.8 554.2l1.8 9.1 -13.5 2.7 -1.8 -9.1zM1890.0 551.4l1.2 5.9 -11.0 2.2 -1.2 -5.9zM1877.8 566.4l3.1 15.8 -10.3 2.0 -3.1 -15.8zM1881.4 584.2l2.0 10.1 -10.4 2.1 -2.0 -10.1zM1892.4 579.4l1.9 9.7 -10.6 2.1 -1.9 -9.7zM1885.7 594.1l2.0 10.3 -12.6 2.5 -2.0 -10.3zM1895.2 595.9l1.6 7.9 -9.1 1.8 -1.6 -7.9zM1889.6 605.9l3.8 19.0 -14.1 2.8 -3.8 -19.0zM1901.7 610.8l1.8 9.1 -11.2 2.2 -1.8 -9.1zM1890.2 626.0l4.1 20.8 -10.9 2.2 -4.1 -20.8zM1899.8 631.1l1.3 6.5 -8.6 1.7 -1.3 -6.5zM1898.2 648.5l3.4 17.2 -14.2 2.8 -3.4 -17.2zM1881.1 669.7l2.4 12.0 -10.7 2.1 -2.4 -12.0zM1883.9 684.0l2.6 13.0 -13.1 2.6 -2.6 -13.0zM1886.8 698.3l2.0 10.2 -13.5 2.7 -2.0 -10.2zM1872.9 701.4l1.9 9.6 -10.1 2.0 -1.9 -9.6zM1912.7 685.9l2.0 9.8 -11.5 2.3 -2.0 -9.8zM1890.3 716.4l1.8 12.1 -9.7 1.4 -1.8 -12.1zM1880.9 719.6l1.4 9.7 -8.0 1.2 -1.4 -9.7zM1880.0 734.7l1.0 6.7 -6.1 0.9 -1.0 -6.7zM1906.5 714.9l2.6 17.7 -9.8 1.4 -2.6 -17.7zM1915.8 718.8l1.0 7.0 -8.3 1.2 -1.0 -7.0zM1914.0 733.8l1.5 10.1 -14.4 2.1 -1.5 -10.1zM1927.1 735.8l0.9 6.1 -12.5 1.8 -0.9 -6.1zM2022.4 496.1l0.6 11.3 -8.1 0.4 -0.6 -11.3zM2014.4 496.2l0.4 8.7 -9.8 0.5 -0.4 -8.7zM2023.0 508.7l0.8 16.8 -12.5 0.6 -0.8 -16.8zM2024.0 527.4l1.0 20.1 -10.6 0.5 -1.0 -20.1zM2013.5 531.5l0.5 9.5 -10.8 0.5 -0.5 -9.5zM2006.7 556.0l3.1 10.1 -14.1 4.3 -3.1 -10.1zM2010.3 567.5l6.1 19.6 -8.0 2.5 -6.1 -19.6zM2016.7 588.2l4.2 13.7 -13.6 4.2 -4.2 -13.7zM2021.1 602.5l6.3 20.3 -10.4 3.2 -6.3 -20.3zM2012.5 615.5l1.9 6.2 -5.9 1.8 -1.9 -6.2zM2028.0 624.9l4.3 13.8 -11.2 3.5 -4.3 -13.8zM2025.7 549.6l3.6 11.6 -12.0 3.7 -3.6 -11.6zM2026.1 564.8l3.4 11.0 -8.2 2.5 -3.4 -11.0zM2037.5 563.1l1.9 6.0 -11.0 3.4 -1.9 -6.0zM2029.9 577.0l5.3 17.0 -8.1 2.5 -5.3 -17.0zM2041.2 577.7l2.7 8.6 -10.9 3.4 -2.7 -8.6zM2039.5 594.5l5.4 17.4 -12.0 3.7 -5.4 -17.4zM2047.1 611.8l4.3 13.9 -14.1 4.3 -4.3 -13.9zM2031.0 635.2l-5.5 16.7 -12.7 -4.2 5.5 -16.7zM2017.1 636.4l-1.6 4.9 -7.7 -2.5 1.6 -4.9zM2021.6 663.8l-4.3 12.9 -12.3 -4.0 4.3 -12.9zM2009.1 661.5l-2.6 8.0 -5.8 -1.9 2.6 -8.0zM2016.6 679.0l-5.9 18.0 -13.2 -4.3 5.9 -18.0zM2009.9 699.4l-3.6 11.0 -12.7 -4.2 3.6 -11.0zM2045.5 640.9l-3.6 11.0 -7.7 -2.5 3.6 -11.0zM2051.3 647.2l-1.6 4.8 -6.2 -2.1 1.6 -4.8zM2043.5 652.5l-3.8 11.4 -9.4 -3.1 3.8 -11.4zM2048.8 653.7l-3.0 9.2 -6.6 -2.2 3.0 -9.2zM2039.9 664.8l-4.9 15.0 -9.7 -3.2 4.9 -15.0zM2045.0 669.4l-1.7 5.1 -6.1 -2.0 1.7 -5.1zM2034.1 681.1l-5.7 17.1 -9.3 -3.1 5.7 -17.1zM2040.8 690.3l-1.9 5.6 -9.4 -3.1 1.9 -5.6zM2031.2 699.4l-3.4 10.4 -12.2 -4.0 3.4 -10.4zM2043.4 704.7l-2.8 8.6 -11.8 -3.9 2.8 -8.6zM2028.4 710.5l-5.7 17.3 -12.9 -4.3 5.7 -17.3zM2038.2 717.2l-2.4 7.4 -10.7 -3.5 2.4 -7.4zM2118.2 502.4l-4.2 8.5 -13.3 -6.6 4.2 -8.5zM2105.3 498.5l-2.9 5.8 -9.8 -4.8 2.9 -5.8zM2113.2 512.6l-6.5 13.2 -7.7 -3.8 6.5 -13.2zM2106.6 525.9l-5.6 11.4 -12.0 -5.9 5.6 -11.4zM2092.6 520.5l-3.4 6.9 -6.6 -3.2 3.4 -6.9zM2100.8 537.7l-8.3 17.0 -9.9 -4.8 8.3 -17.0zM2088.7 540.2l-2.5 5.0 -12.4 -6.1 2.5 -5.0zM2136.9 514.4l-6.7 13.6 -13.2 -6.5 6.7 -13.6zM2147.0 520.8l-3.8 7.8 -10.5 -5.2 3.8 -7.8zM2128.3 529.7l-4.6 9.3 -12.3 -6.0 4.6 -9.3zM2137.9 536.1l-4.4 8.9 -8.8 -4.3 4.4 -8.9zM2122.9 539.5l-5.0 10.1 -11.9 -5.8 5.0 -10.1zM2133.6 543.3l-4.1 8.4 -11.3 -5.5 4.1 -8.4zM2189.3 495.0l-0.2 17.5 -10.7 -0.1 0.2 -17.5zM2189.1 513.3l-0.2 19.7 -10.4 -0.1 0.2 -19.7zM2188.9 533.4l-0.2 21.2 -13.2 -0.1 0.2 -21.2zM2175.6 539.0l-0.1 7.7 -13.0 -0.1 0.1 -7.7zM2188.7 556.5l-0.2 19.2 -14.1 -0.1 0.2 -19.2zM2174.5 564.4l-0.1 6.6 -6.8 -0.1 0.1 -6.6zM2188.5 576.2l-0.1 9.9 -8.5 -0.1 0.1 -9.9zM2180.0 575.5l-0.1 9.0 -9.2 -0.1 0.1 -9.0zM2206.8 497.7l-0.2 18.5 -10.2 -0.1 0.2 -18.5zM2217.5 502.4l-0.1 9.1 -10.7 -0.1 0.1 -9.1zM2209.1 517.3l-0.2 20.4 -12.7 -0.1 0.2 -20.4zM2222.8 526.0l-0.1 8.5 -13.7 -0.1 0.1 -8.5zM2207.3 537.9l-0.2 16.7 -11.0 -0.1 0.2 -16.7zM2217.4 540.9l-0.1 9.1 -10.2 -0.1 0.1 -9.1zM2209.7 555.1l-0.2 18.7 -13.6 -0.1 0.2 -18.7zM2208.8 574.9l-0.1 13.9 -13.0 -0.1 0.1 -13.9zM2217.5 577.9l-0.1 8.7 -8.6 -0.1 0.1 -8.7zM2271.6 492.4l-4.7 7.8 -8.9 -5.3 4.7 -7.8zM2263.4 488.2l-3.9 6.5 -6.9 -4.1 3.9 -6.5zM2265.8 502.1l-6.0 10.0 -10.4 -6.2 6.0 -10.0zM2289.6 503.2l-5.1 8.5 -11.6 -7.0 5.1 -8.5zM2299.7 510.2l-5.1 8.6 -9.5 -5.7 5.1 -8.6zM2280.4 509.9l-6.0 9.9 -7.8 -4.7 6.0 -9.9zM2286.5 514.4l-3.1 5.2 -6.3 -3.8 3.1 -5.2zM2274.2 520.6l-8.0 13.3 -8.0 -4.8 8.0 -13.3zM2253.8 528.2l1.8 15.0 -9.3 1.1 -1.8 -15.0zM2245.2 532.0l1.0 8.4 -6.5 0.8 -1.0 -8.4zM2255.6 544.1l1.7 14.4 -10.4 1.2 -1.7 -14.4zM2245.3 550.7l0.9 7.8 -12.8 1.5 -0.9 -7.8zM2275.2 523.3l2.0 17.1 -14.3 1.7 -2.0 -17.1zM2286.2 529.2l1.0 8.3 -10.4 1.2 -1.0 -8.3zM2276.8 540.8l1.6 13.7 -13.9 1.6 -1.6 -13.7zM2258.1 560.8l4.1 10.6 -8.2 3.2 -4.1 -10.6zM2250.6 565.1l2.6 6.9 -8.0 3.1 -2.6 -6.9zM2263.0 573.5l4.8 12.7 -10.9 4.2 -4.8 -12.7zM2253.5 582.4l2.5 6.5 -8.1 3.1 -2.5 -6.5zM2268.1 586.8l4.9 12.9 -10.0 3.8 -4.9 -12.9zM2273.3 600.3l4.8 12.4 -12.8 4.9 -4.8 -12.4zM2262.5 607.0l1.9 4.9 -7.0 2.7 -1.9 -4.9zM2278.2 613.3l3.5 9.1 -9.2 3.5 -3.5 -9.1zM2273.3 555.6l7.5 19.6 -8.1 3.1 -7.5 -19.6zM2286.3 554.5l3.3 8.7 -11.2 4.3 -3.3 -8.7zM2288.6 594.8l3.5 9.1 -8.3 3.2 -3.5 -9.1zM2292.5 604.0l4.0 10.4 -8.7 3.3 -4.0 -10.4zM2293.7 518.4l1.3 13.1 -13.2 1.3 -1.3 -13.1zM2280.6 525.1l0.7 7.4 -12.8 1.3 -0.7 -7.4zM2295.0 531.7l2.1 21.0 -13.2 1.3 -2.1 -21.0zM2312.4 496.0l1.0 10.1 -13.4 1.3 -1.0 -10.1zM2325.6 494.7l0.7 7.2 -12.9 1.3 -0.7 -7.2zM2308.9 508.4l1.7 17.3 -8.6 0.9 -1.7 -17.3zM2320.5 515.3l0.6 6.4 -11.2 1.1 -0.6 -6.4zM2313.1 527.8l2.2 21.9 -10.9 1.1 -2.2 -21.9zM2299.2 568.5l3.4 14.8 -8.6 2.0 -3.4 -14.8zM2302.6 583.4l4.9 21.3 -11.5 2.6 -4.9 -21.3zM2307.7 605.6l2.7 11.9 -13.4 3.0 -2.7 -11.9zM2294.0 609.8l2.1 9.2 -12.5 2.8 -2.1 -9.2zM2310.7 618.7l4.1 17.9 -12.8 2.9 -4.1 -17.9zM2298.4 624.3l2.0 8.8 -6.9 1.6 -2.0 -8.8zM2319.6 563.8l3.4 14.8 -13.2 3.0 -3.4 -14.8zM2333.9 565.9l1.8 7.9 -12.9 2.9 -1.8 -7.9zM2323.8 580.0l3.5 15.5 -13.6 3.1 -3.5 -15.5zM2327.0 597.7l4.0 17.4 -12.9 2.9 -4.0 -17.4zM2327.5 618.4l4.7 20.5 -8.9 2.0 -4.7 -20.5zM2336.4 624.2l1.3 5.5 -7.2 1.6 -1.3 -5.5zM2431.3 493.8l-0.7 14.4 -14.3 -0.7 0.7 -14.4zM2416.7 495.0l-0.3 5.9 -7.6 -0.4 0.3 -5.9zM2430.4 510.6l-0.6 12.5 -14.1 -0.7 0.6 -12.5zM2429.7 524.0l-0.9 18.0 -8.5 -0.4 0.9 -18.0zM2421.1 528.6l-0.3 6.3 -12.0 -0.6 0.3 -6.3zM2427.6 566.6l-0.9 17.5 -9.1 -0.5 0.9 -17.5zM2418.3 569.7l-0.3 6.3 -13.2 -0.7 0.3 -6.3zM2450.7 495.4l-0.8 15.5 -12.0 -0.6 0.8 -15.5zM2448.8 510.9l-0.5 9.7 -10.9 -0.6 0.5 -9.7zM2461.4 513.2l-0.3 6.2 -12.6 -0.6 0.3 -6.2zM2450.6 521.8l-0.7 13.3 -13.3 -0.7 0.7 -13.3zM2451.0 536.3l-0.8 15.5 -14.4 -0.7 0.8 -15.5zM2457.6 542.0l-0.3 6.6 -6.6 -0.3 0.3 -6.6zM2445.1 566.3l-0.6 11.0 -10.1 -0.5 0.6 -11.0zM2442.7 578.2l-0.6 11.1 -8.3 -0.4 0.6 -11.1zM2426.2 592.9l-0.5 13.4 -8.7 -0.3 0.5 -13.4zM2425.7 606.7l-0.6 17.7 -11.0 -0.4 0.6 -17.7zM2425.1 624.4l-0.4 11.9 -10.8 -0.4 0.4 -11.9zM2424.5 638.7l-0.5 13.3 -9.9 -0.4 0.5 -13.3zM2414.7 638.9l-0.3 7.1 -11.5 -0.4 0.3 -7.1zM2424.0 653.4l-0.8 21.9 -14.4 -0.5 0.8 -21.9zM2409.3 661.5l-0.3 8.3 -7.5 -0.3 0.3 -8.3zM2423.2 676.0l-0.8 21.1 -13.7 -0.5 0.8 -21.1zM2409.2 682.3l-0.3 8.4 -7.0 -0.3 0.3 -8.4zM2443.8 594.7l-0.4 10.5 -10.2 -0.4 0.4 -10.5zM2443.7 606.1l-0.7 18.0 -10.6 -0.4 0.7 -18.0zM2441.1 625.1l-0.3 9.0 -8.6 -0.3 0.3 -9.0zM2445.1 634.7l-0.7 20.3 -13.0 -0.5 0.7 -20.3zM2441.8 654.9l-0.4 9.5 -10.5 -0.4 0.4 -9.5zM2455.0 656.3l-0.3 8.9 -13.3 -0.5 0.3 -8.9zM2445.6 667.1l-0.6 17.4 -14.6 -0.5 0.6 -17.4zM2440.9 685.5l-0.5 13.4 -10.6 -0.4 0.5 -13.4zM2449.0 688.2l-0.3 7.5 -8.2 -0.3 0.3 -7.5zM2434.2 592.7l11.3 -12.3 7.2 6.6 -11.3 12.3zM2445.8 596.4l4.6 -5.1 4.5 4.1 -4.6 5.1zM2446.6 579.1l11.6 -12.6 6.9 6.3 -11.6 12.6zM2458.7 565.9l7.8 -8.6 10.3 9.4 -7.8 8.6zM2467.5 556.3l8.9 -9.7 6.1 5.6 -8.9 9.7zM2419.7 580.9l7.9 -8.7 7.5 6.9 -7.9 8.7zM2428.2 572.4l14.7 -16.1 7.1 6.5 -14.7 16.1zM2440.7 552.9l6.4 -7.0 10.0 9.2 -6.4 7.0zM2475.8 547.5l11.3 -4.0 4.1 11.7 -11.3 4.0zM2488.0 543.2l18.3 -6.5 2.9 8.2 -18.3 6.5zM2497.3 549.6l5.1 -1.8 4.6 13.1 -5.1 1.8zM2506.3 536.7l9.6 -3.4 2.9 8.1 -9.6 3.4zM2469.9 530.6l19.0 -6.7 3.2 8.9 -19.0 6.7zM2470.8 519.1l7.4 -2.6 3.6 10.3 -7.4 2.6zM2491.4 523.7l13.0 -4.6 2.9 8.3 -13.0 4.6zM2489.7 515.0l8.7 -3.1 2.9 8.1 -8.7 3.1zM2506.0 516.4l12.9 -4.6 3.6 10.2 -12.9 4.6zM2520.3 512.6l13.5 -4.8 3.2 9.1 -13.5 4.8zM1844.8 773.6l20.2 -4.1 2.2 10.9 -20.2 4.1zM1873.8 782.9l5.3 -1.1 1.3 6.4 -5.3 1.1zM1878.9 766.6l12.5 -2.6 2.0 9.7 -12.5 2.6zM1893.8 763.5l14.4 -3.0 2.7 13.3 -14.4 3.0zM1910.0 760.2l11.7 -2.4 1.7 8.5 -11.7 2.4zM1923.9 757.4l10.6 -2.2 2.6 12.6 -10.6 2.2zM1925.7 769.6l9.6 -2.0 1.5 7.4 -9.6 2.0zM1936.5 754.7l12.0 -2.5 2.6 12.6 -12.0 2.5zM1941.8 766.8l6.7 -1.4 2.7 13.4 -6.7 1.4zM1948.6 752.3l18.4 -3.8 2.7 12.9 -18.4 3.8zM1957.1 764.3l8.5 -1.7 1.8 8.6 -8.5 1.7zM1968.3 748.2l10.8 -2.2 2.9 14.1 -10.8 2.2zM1844.4 756.0l10.0 -2.1 2.0 9.7 -10.0 2.1zM1844.0 745.8l6.0 -1.2 2.1 10.4 -6.0 1.2zM1855.6 749.7l12.0 -2.5 2.8 13.5 -12.0 2.5zM1868.7 750.9l18.7 -3.8 2.0 9.8 -18.7 3.8zM1904.1 742.7l10.1 -2.1 2.2 10.7 -10.1 2.1zM1901.1 730.1l6.8 -1.4 2.6 12.7 -6.8 1.4zM1915.5 739.9l11.2 -2.3 2.3 11.1 -11.2 2.3zM1939.6 736.8l15.7 -3.2 1.9 9.3 -15.7 3.2zM1955.2 730.5l16.1 -3.3 2.5 12.3 -16.1 3.3zM1954.9 718.8l8.3 -1.7 2.2 10.9 -8.3 1.7zM1971.1 718.6l6.1 -1.3 1.3 6.5 -6.1 1.3zM1987.3 744.2l14.3 -4.6 3.2 10.1 -14.3 4.6zM1994.3 753.5l4.8 -1.5 2.4 7.4 -4.8 1.5zM1980.6 724.6l9.0 -2.9 4.1 12.7 -9.0 2.9zM1982.5 715.8l5.1 -1.6 2.6 8.1 -5.1 1.6zM1990.7 721.3l14.0 -4.5 4.1 12.7 -14.0 4.5zM1989.8 711.4l9.0 -2.9 2.8 8.8 -9.0 2.9zM2014.5 738.6l1.3 10.3 -8.2 1.0 -1.3 -10.3zM2006.2 738.3l1.1 8.7 -9.5 1.2 -1.1 -8.7zM2015.9 750.2l1.8 14.4 -14.5 1.8 -1.8 -14.4zM2017.8 765.6l1.2 9.4 -11.0 1.4 -1.2 -9.4zM2019.2 776.8l1.2 9.7 -14.4 1.8 -1.2 -9.7zM2011.8 790.1l0.7 5.4 -7.7 1.0 -0.7 -5.4zM2022.3 801.6l1.3 10.7 -13.6 1.7 -1.3 -10.7zM2009.2 803.7l0.6 5.2 -12.6 1.6 -0.6 -5.2zM2023.9 814.7l1.8 14.2 -12.1 1.5 -1.8 -14.2zM2012.4 818.0l1.0 7.9 -11.5 1.4 -1.0 -7.9zM2025.8 830.1l1.4 11.3 -11.0 1.4 -1.4 -11.3zM2014.8 834.9l1.0 8.1 -8.1 1.0 -1.0 -8.1zM2027.4 842.7l1.5 11.9 -8.7 1.1 -1.5 -11.9zM2029.0 855.5l1.8 14.2 -14.1 1.8 -1.8 -14.2zM2031.1 872.2l2.6 21.1 -9.7 1.2 -2.6 -21.1zM2022.4 880.2l1.0 8.2 -13.9 1.7 -1.0 -8.2zM2031.1 736.4l2.1 16.9 -9.3 1.2 -2.1 -16.9zM2043.0 741.6l0.7 5.5 -11.2 1.4 -0.7 -5.5zM2035.9 765.3l1.8 14.4 -10.5 1.3 -1.8 -14.4zM2038.8 780.6l2.0 16.3 -11.5 1.4 -2.0 -16.3zM2040.8 798.8l2.7 21.7 -11.2 1.4 -2.7 -21.7zM2046.2 822.0l2.6 21.0 -13.7 1.7 -2.6 -21.0zM2045.8 844.7l1.6 13.0 -10.5 1.3 -1.6 -13.0zM2046.1 859.5l1.4 11.1 -9.0 1.1 -1.4 -11.1zM2053.4 859.7l0.7 5.7 -6.8 0.8 -0.7 -5.7zM2052.6 872.1l1.6 13.2 -13.8 1.7 -1.6 -13.2zM2058.9 871.5l0.9 7.1 -6.1 0.8 -0.9 -7.1zM2324.0 777.2l-10.3 4.6 -6.0 -13.5 10.3 -4.6zM2316.7 765.6l-6.8 3.0 -2.5 -5.6 6.8 -3.0zM2312.8 782.2l-18.3 8.2 -5.5 -12.3 18.3 -8.2zM2300.5 772.6l-6.4 2.8 -4.1 -9.1 6.4 -2.8zM2293.7 790.7l-15.4 6.9 -6.1 -13.7 15.4 -6.9zM2282.7 780.2l-4.8 2.2 -2.8 -6.2 4.8 -2.2zM2276.7 798.3l-19.7 8.8 -5.7 -12.7 19.7 -8.8zM2263.4 787.7l-5.8 2.6 -3.7 -8.3 5.8 -2.6zM2255.8 807.7l-12.7 5.7 -4.7 -10.4 12.7 -5.7zM2313.3 807.0l-11.5 5.1 -5.9 -13.2 11.5 -5.1zM2316.2 818.5l-6.3 2.8 -4.3 -9.7 6.3 -2.8zM2299.4 810.3l-12.2 5.4 -4.8 -10.8 12.2 -5.4zM2284.4 813.0l-20.0 8.9 -3.3 -7.5 20.0 -8.9zM2263.5 825.8l-15.6 7.0 -4.6 -10.4 15.6 -7.0zM2230.0 819.1l-18.0 7.3 -3.6 -9.0 18.0 -7.3zM2210.8 826.8l-15.6 6.3 -3.9 -9.5 15.6 -6.3zM2193.0 834.1l-11.3 4.6 -4.4 -10.8 11.3 -4.6zM2154.1 849.8l-18.5 7.5 -4.0 -10.0 18.5 -7.5zM2145.6 842.0l-5.4 2.2 -3.2 -8.0 5.4 -2.2zM2238.5 839.4l-9.8 4.0 -5.1 -12.6 9.8 -4.0zM2227.2 845.0l-11.0 4.4 -5.5 -13.5 11.0 -4.4zM2233.0 858.1l-8.5 3.4 -4.8 -12.0 8.5 -3.4zM2197.6 856.8l-18.4 7.4 -5.4 -13.4 18.4 -7.4zM2175.6 860.9l-15.2 6.1 -3.7 -9.2 15.2 -6.1zM2178.6 874.5l-8.8 3.5 -4.8 -11.9 8.8 -3.5zM2160.2 870.9l-9.8 4.0 -5.0 -12.5 9.8 -4.0zM2162.6 879.6l-8.2 3.3 -3.1 -7.7 8.2 -3.3zM2134.5 860.0l-7.1 8.5 -6.5 -5.5 7.1 -8.5zM2149.6 872.5l-9.2 11.0 -8.6 -7.1 9.2 -11.0zM2156.1 882.7l-5.5 6.6 -9.5 -7.9 5.5 -6.6zM2129.3 867.8l-14.0 0.6 -0.4 -10.0 14.0 -0.6zM2122.9 858.0l-6.4 0.3 -0.4 -8.6 6.4 -0.3zM2099.1 869.1l-16.4 0.7 -0.6 -14.0 16.4 -0.7zM2096.8 855.2l-8.8 0.4 -0.4 -10.0 8.8 -0.4zM2080.2 869.9l-15.2 0.6 -0.4 -10.7 15.2 -0.6zM2074.8 859.5l-8.2 0.3 -0.3 -7.0 8.2 -0.3zM2063.4 870.6l-13.0 0.5 -0.5 -11.6 13.0 -0.5zM2058.6 859.1l-9.5 0.4 -0.6 -13.3 9.5 -0.4zM2048.0 871.3l-10.8 0.5 -0.6 -14.4 10.8 -0.5zM2042.4 857.0l-5.1 0.2 -0.6 -13.9 5.1 -0.2zM2127.6 887.2l-15.1 0.6 -0.5 -10.9 15.1 -0.6zM2112.3 886.5l-21.7 0.9 -0.4 -9.5 21.7 -0.9zM2088.5 890.4l-21.3 0.9 -0.5 -12.4 21.3 -0.9zM2082.5 900.9l-7.9 0.3 -0.4 -10.1 7.9 -0.3zM2066.1 889.8l-13.6 0.6 -0.5 -10.9 13.6 -0.6zM2051.2 889.3l-14.5 0.6 -0.4 -9.7 14.5 -0.6zM2050.1 903.1l-7.8 0.3 -0.6 -13.8 7.8 -0.3zM2030.4 872.9l-11.6 3.3 -3.7 -13.0 11.6 -3.3zM2018.7 876.2l-9.5 2.7 -3.5 -12.2 9.5 -2.7zM2007.3 879.5l-12.4 3.5 -2.3 -8.1 12.4 -3.5zM2005.0 872.5l-7.2 2.0 -1.7 -6.1 7.2 -2.0zM1993.3 883.4l-12.2 3.4 -3.0 -10.7 12.2 -3.4zM1986.5 873.2l-7.0 2.0 -3.4 -12.1 7.0 -2.0zM1979.2 887.4l-16.1 4.6 -3.4 -12.1 16.1 -4.6zM1971.6 876.7l-8.0 2.3 -3.8 -13.3 8.0 -2.3zM1956.9 883.1l-8.6 2.4 -3.5 -12.5 8.6 -2.4zM1949.5 895.8l-17.5 4.9 -2.7 -9.7 17.5 -4.9zM2015.5 896.5l-18.3 5.2 -2.8 -9.8 18.3 -5.2zM1994.9 900.3l-14.8 4.2 -2.2 -7.9 14.8 -4.2zM1991.2 907.7l-6.1 1.7 -1.6 -5.8 6.1 -1.7zM1979.9 909.6l-14.2 4.0 -3.6 -12.6 14.2 -4.0zM1963.2 910.4l-17.8 5.0 -2.6 -9.0 17.8 -5.0zM1960.5 919.7l-8.3 2.4 -2.4 -8.5 8.3 -2.4zM1944.8 919.7l-10.1 2.9 -3.6 -12.8 10.1 -2.9zM1943.3 930.7l-6.1 1.7 -2.8 -9.7 6.1 -1.7zM2228.7 831.7l-0.9 17.4 -12.0 -0.6 0.9 -17.4zM2227.7 851.5l-0.6 11.8 -8.1 -0.4 0.6 -11.8zM2219.3 854.3l-0.3 5.2 -9.3 -0.5 0.3 -5.2zM2226.9 865.5l-0.9 18.0 -13.1 -0.7 0.9 -18.0zM2226.0 884.1l-0.9 16.2 -12.2 -0.6 0.9 -16.2zM2213.5 884.7l-0.5 9.0 -12.6 -0.7 0.5 -9.0zM2248.5 833.9l-0.9 17.4 -13.4 -0.7 0.9 -17.4zM2246.1 852.8l-0.9 17.5 -12.1 -0.6 0.9 -17.5zM2244.0 870.6l-0.8 14.5 -10.9 -0.6 0.8 -14.5zM2253.0 877.6l-0.4 7.1 -9.1 -0.5 0.4 -7.1zM2245.4 885.4l-0.5 9.2 -13.0 -0.7 0.5 -9.2zM2239.9 895.3l-0.6 12.1 -8.1 -0.4 0.6 -12.1zM2249.6 900.9l-0.3 6.6 -9.7 -0.5 0.3 -6.6zM2263.6 903.6l1.7 -10.4 9.5 1.6 -1.7 10.4zM2272.9 903.2l1.5 -8.9 9.4 1.6 -1.5 8.9zM2265.5 892.4l3.5 -21.0 14.5 2.4 -3.5 21.0zM2281.2 889.2l1.3 -8.0 9.2 1.5 -1.3 8.0zM2244.8 902.8l2.1 -12.8 12.2 2.0 -2.1 12.8zM2235.1 899.8l1.0 -6.3 10.5 1.8 -1.0 6.3zM2245.0 889.0l2.4 -14.5 14.2 2.4 -2.4 14.5zM2238.0 882.2l1.1 -6.6 7.6 1.3 -1.1 6.6zM2269.7 872.4l20.2 -4.8 2.5 10.7 -20.2 4.8zM2263.1 852.8l10.5 -2.5 3.3 13.8 -10.5 2.5zM2261.1 842.6l5.9 -1.4 2.3 9.9 -5.9 1.4zM2276.6 856.0l15.6 -3.7 1.8 7.8 -15.6 3.7zM2281.5 846.9l5.9 -1.4 1.9 7.9 -5.9 1.4zM2297.5 864.2l5.1 12.5 -12.5 5.1 -5.1 -12.5zM2303.2 878.3l4.0 9.7 -7.7 3.1 -4.0 -9.7zM2307.9 889.9l6.3 15.4 -10.2 4.2 -6.3 -15.4zM2311.5 858.4l7.6 18.5 -8.2 3.3 -7.6 -18.5zM2319.9 877.4l3.9 9.5 -8.7 3.6 -3.9 -9.5zM2324.9 888.3l4.8 11.7 -9.2 3.8 -4.8 -11.7zM2335.4 886.6l2.6 6.2 -10.1 4.1 -2.6 -6.2zM2362.4 803.1l10.5 -0.4 0.3 9.8 -10.5 0.4zM2361.7 812.8l7.7 -0.3 0.3 9.3 -7.7 0.3zM2374.9 802.7l19.3 -0.6 0.5 14.2 -19.3 0.6zM2396.0 802.0l13.8 -0.5 0.3 10.4 -13.8 0.5zM2398.8 812.3l6.7 -0.2 0.4 12.5 -6.7 0.2zM2411.7 801.5l20.5 -0.7 0.3 10.5 -20.5 0.7zM2434.0 800.7l16.2 -0.5 0.4 10.5 -16.2 0.5zM2359.7 782.0l11.5 -0.4 0.5 14.7 -11.5 0.4zM2372.8 785.5l16.0 -0.5 0.4 10.9 -16.0 0.5zM2389.0 783.1l10.8 -0.4 0.4 12.7 -10.8 0.4zM2402.3 787.3l9.7 -0.3 0.3 8.1 -9.7 0.3zM2400.3 777.0l8.8 -0.3 0.3 10.2 -8.8 0.3zM2414.1 784.2l18.7 -0.6 0.4 10.8 -18.7 0.6zM2434.8 784.2l17.8 -0.6 0.3 10.1 -17.8 0.6zM2447.5 801.1l3.3 17.6 -11.0 2.1 -3.3 -17.6zM2451.3 821.0l1.7 8.9 -14.0 2.6 -1.7 -8.9zM2453.0 830.3l2.5 13.2 -12.8 2.4 -2.5 -13.2zM2455.8 845.1l1.8 9.4 -8.7 1.6 -1.8 -9.4zM2446.9 850.3l1.3 7.1 -7.9 1.5 -1.3 -7.1zM2463.5 796.7l2.7 14.5 -10.0 1.9 -2.7 -14.5zM2470.3 812.9l3.4 18.1 -13.5 2.6 -3.4 -18.1zM2478.8 819.2l1.3 7.0 -6.9 1.3 -1.3 -7.0zM2470.0 834.2l2.2 11.7 -9.4 1.8 -2.2 -11.7zM2480.7 835.3l1.2 6.4 -10.0 1.9 -1.2 -6.4zM2463.1 852.9l18.2 -1.8 1.1 11.2 -18.2 1.8zM2467.4 863.4l8.0 -0.8 1.0 9.7 -8.0 0.8zM2483.4 850.9l20.0 -2.0 1.3 13.6 -20.0 2.0zM2487.5 864.3l9.9 -1.0 1.2 11.8 -9.9 1.0zM2504.3 848.8l13.5 -1.3 1.2 12.1 -13.5 1.3zM2507.8 860.8l6.6 -0.7 1.3 13.2 -6.6 0.7zM2520.2 847.3l16.6 -1.6 1.4 13.7 -16.6 1.6zM2482.2 829.9l9.3 -0.9 1.4 14.6 -9.3 0.9zM2483.7 819.1l9.6 -1.0 1.0 10.6 -9.6 1.0zM2492.8 835.4l19.6 -1.9 0.8 8.1 -19.6 1.9zM2496.2 825.8l7.9 -0.8 0.9 8.9 -7.9 0.8zM2513.4 827.0l10.2 -1.0 1.4 14.4 -10.2 1.0zM2518.1 819.5l5.4 -0.5 0.7 7.1 -5.4 0.5zM1838.2 799.2l6.4 22.9 -11.5 3.2 -6.4 -22.9zM1839.0 697.1l6.2 22.1 -15.2 4.2 -6.2 -22.1zM1850.2 700.1l1.8 6.5 -8.3 2.3 -1.8 -6.5zM1845.7 720.2l3.2 11.4 -15.4 4.3 -3.2 -11.4zM1845.4 734.5l3.9 14.2 -11.5 3.2 -3.9 -14.2zM1851.7 748.8l5.9 21.1 -13.6 3.8 -5.9 -21.1zM1857.6 783.8l5.0 17.9 -10.1 2.8 -5.0 -17.9zM1837.9 834.0l2.5 7.0 -9.7 3.5 -2.5 -7.0zM1857.9 859.8l4.0 11.1 -9.2 3.3 -4.0 -11.1zM1848.4 863.7l2.5 7.0 -5.8 2.1 -2.5 -7.0zM1854.4 874.9l2.3 6.4 -8.8 3.1 -2.3 -6.4zM1880.9 817.6l2.8 7.9 -10.3 3.7 -2.8 -7.9zM1870.9 832.1l3.7 10.3 -8.6 3.1 -3.7 -10.3zM1892.6 885.2l4.5 12.5 -11.0 3.9 -4.5 -12.5zM1900.7 886.9l2.1 6.0 -6.7 2.4 -2.1 -6.0zM1765.1 500.4l1.7 9.3 -8.7 1.6 -1.7 -9.3zM1779.8 539.3l2.3 13.1 -12.2 2.2 -2.3 -13.1zM1801.9 533.4l4.1 23.0 -10.3 1.8 -4.1 -23.0zM1808.6 558.4l4.9 27.5 -12.4 2.2 -4.9 -27.5zM1823.6 563.5l1.3 7.1 -13.3 2.4 -1.3 -7.1zM1784.7 606.9l1.5 7.5 -9.8 2.0 -1.5 -7.5zM1783.0 627.4l1.5 7.3 -11.7 2.3 -1.5 -7.3zM1806.7 680.2l5.0 24.8 -9.2 1.8 -5.0 -24.8zM1817.4 621.3l5.2 26.2 -9.4 1.9 -5.2 -26.2zM1827.8 626.9l1.5 7.3 -8.0 1.6 -1.5 -7.3zM1820.7 648.4l4.9 24.3 -7.4 1.5 -4.9 -24.3zM1831.5 673.5l2.7 13.6 -13.0 2.6 -2.7 -13.6zM1844.7 672.0l1.4 7.2 -12.9 2.6 -1.4 -7.2zM1802.1 717.0l1.7 6.1 -6.6 1.8 -1.7 -6.1zM1812.2 754.8l2.1 7.6 -9.7 2.7 -2.1 -7.6zM1827.8 761.7l6.3 22.6 -10.4 2.9 -6.3 -22.6zM1834.8 848.1l7.2 -1.8 3.2 13.1 -7.2 1.8zM1858.3 829.5l19.4 -8.8 4.0 8.7 -19.4 8.8zM1868.9 837.0l8.5 -3.9 3.0 6.5 -8.5 3.9zM1877.9 820.6l16.2 -7.4 6.5 14.3 -16.2 7.4zM1888.9 833.3l5.4 -2.4 4.4 9.7 -5.4 2.4zM1895.1 812.7l9.7 -4.4 5.6 12.4 -9.7 4.4zM1905.0 808.2l20.2 -9.2 5.3 11.6 -20.2 9.2zM1920.3 816.4l5.3 -2.4 4.8 10.6 -5.3 2.4zM1927.2 798.1l15.4 -7.0 4.7 10.3 -15.4 7.0zM1937.5 807.0l6.5 -2.9 3.4 7.5 -6.5 2.9zM1958.8 783.7l18.9 -8.6 4.6 10.1 -18.9 8.6zM1844.7 805.2l18.1 -8.2 5.5 12.1 -18.1 8.2zM1864.6 799.9l18.0 -8.2 4.1 9.0 -18.0 8.2zM1882.6 788.9l18.1 -8.3 5.2 11.3 -18.1 8.3zM1888.4 776.8l4.7 -2.2 3.7 8.0 -4.7 2.2zM1901.2 777.7l11.1 -5.1 6.2 13.6 -11.1 5.1zM1915.4 775.7l18.5 -8.4 4.5 9.9 -18.5 8.4zM1948.4 746.5l7.0 -3.2 4.8 10.5 -7.0 3.2zM1983.5 771.0l17.1 -14.8 10.3 11.9 -17.1 14.8zM2000.4 775.5l4.1 -3.5 5.8 6.7 -4.1 3.5zM1962.6 752.2l17.6 -15.3 8.9 10.2 -17.6 15.3zM2012.2 746.0l6.9 -7.4 10.6 9.9 -6.9 7.4zM2022.4 755.7l6.5 -6.9 4.8 4.5 -6.5 6.9zM1990.5 727.2l12.2 -13.1 10.4 9.7 -12.2 13.1zM2024.1 733.6l17.4 -3.1 2.6 14.5 -17.4 3.1zM2041.9 730.4l14.5 -2.6 2.0 11.1 -14.5 2.6zM2046.0 740.8l5.2 -0.9 2.5 13.7 -5.2 0.9zM2018.0 707.1l21.6 -3.9 2.3 12.5 -21.6 3.9zM2023.4 692.3l6.3 -1.1 2.4 13.4 -6.3 1.1zM2040.0 703.3l11.9 -2.1 2.2 12.3 -11.9 2.1zM2043.0 690.0l5.6 -1.0 2.4 13.3 -5.6 1.0zM2053.8 702.6l11.9 -2.1 1.9 10.7 -11.9 2.1zM2054.7 693.2l6.9 -1.2 1.7 9.2 -6.9 1.2zM2070.1 725.2l11.8 1.0 -1.1 12.8 -11.8 -1.0zM2074.1 738.1l6.8 0.6 -1.0 11.4 -6.8 -0.6zM2083.0 726.3l14.4 1.2 -1.1 12.7 -14.4 -1.2zM2085.7 739.4l6.4 0.6 -1.0 11.6 -6.4 -0.6zM2105.7 740.2l5.9 0.5 -0.6 7.4 -5.9 -0.5zM2074.4 697.9l15.9 1.4 -1.1 13.2 -15.9 -1.4zM2077.6 689.3l9.7 0.8 -0.8 8.9 -9.7 -0.8zM2111.7 704.4l12.9 1.1 -0.8 9.9 -12.9 -1.1zM2154.7 733.3l18.4 2.6 -1.8 13.2 -18.4 -2.6zM2156.7 747.7l6.3 0.9 -1.4 10.3 -6.3 -0.9zM2198.6 752.4l9.0 1.2 -1.4 10.1 -9.0 -1.2zM2144.8 707.7l10.4 1.4 -1.3 9.5 -10.4 -1.4zM2145.9 698.1l9.6 1.3 -1.3 9.7 -9.6 -1.3zM2156.2 709.6l16.9 2.3 -1.3 9.2 -16.9 -2.3zM2165.4 702.4l5.9 0.8 -1.1 8.2 -5.9 -0.8zM2239.4 758.3l7.9 -0.9 0.7 6.6 -7.9 0.9zM2249.1 742.6l19.5 -2.1 1.4 13.2 -19.5 2.1zM2259.2 755.0l6.9 -0.8 1.2 11.4 -6.9 0.8zM2270.6 740.3l18.3 -2.0 1.2 10.8 -18.3 2.0zM2289.7 738.2l21.4 -2.3 1.5 13.7 -21.4 2.3zM2298.4 751.2l8.9 -1.0 1.0 9.1 -8.9 1.0zM2233.5 714.8l11.3 -1.2 1.6 14.8 -11.3 1.2zM2235.1 707.7l8.7 -0.9 0.8 7.0 -8.7 0.9zM2246.2 712.7l17.6 -1.9 1.7 15.5 -17.6 1.9zM2247.5 702.8l8.4 -0.9 1.0 9.2 -8.4 0.9zM2273.1 702.7l9.3 -1.0 1.1 10.3 -9.3 1.0zM2293.8 700.8l8.6 -0.9 1.1 10.1 -8.6 0.9zM2320.2 734.5l15.9 -5.4 4.5 13.2 -15.9 5.4zM2326.8 746.5l9.3 -3.2 2.0 5.8 -9.3 3.2zM2313.0 710.0l11.8 -4.0 3.6 10.5 -11.8 4.0zM2312.9 698.4l5.3 -1.8 3.5 10.2 -5.3 1.8zM2325.0 705.9l16.7 -5.7 3.6 10.6 -16.7 5.7zM1555.7 917.5l7.6 -1.7 2.8 12.7 -7.6 1.7zM1563.7 876.5l6.6 -1.4 2.1 9.5 -6.6 1.4zM1611.7 863.6l7.9 -1.7 1.6 7.4 -7.9 1.7zM1645.4 889.8l19.2 -6.1 3.5 10.9 -19.2 6.1zM1652.7 899.2l7.5 -2.4 3.6 11.2 -7.5 2.4zM1698.0 873.0l12.5 -4.0 3.2 10.1 -12.5 4.0zM1706.8 882.3l5.9 -1.9 2.3 7.3 -5.9 1.9zM1654.8 859.8l25.3 -8.1 3.5 10.8 -25.3 8.1zM1763.8 825.5l15.6 -3.9 3.1 12.4 -15.6 3.9zM1807.4 807.3l6.1 -1.5 3.0 12.2 -6.1 1.5zM2354.8 720.9l10.6 -1.4 1.4 10.9 -10.6 1.4zM2361.7 731.2l5.3 -0.7 1.4 10.6 -5.3 0.7zM2388.0 716.6l12.5 -1.6 1.3 10.1 -12.5 1.6zM2390.6 726.4l5.8 -0.7 1.7 13.7 -5.8 0.7zM2402.5 714.8l11.3 -1.4 1.8 14.4 -11.3 1.4zM2408.6 728.8l5.5 -0.7 0.8 6.3 -5.5 0.7zM2415.7 713.1l12.7 -1.6 1.4 10.9 -12.7 1.6zM2352.9 701.3l12.7 -1.6 1.2 9.2 -12.7 1.6zM2352.1 688.4l9.4 -1.2 1.6 12.6 -9.4 1.2zM2366.6 695.2l22.8 -2.9 1.7 13.4 -22.8 2.9zM2372.9 688.2l7.7 -1.0 0.8 6.2 -7.7 1.0zM2390.7 694.5l13.0 -1.7 1.4 11.1 -13.0 1.7zM2392.8 681.2l5.6 -0.7 1.6 12.7 -5.6 0.7zM2422.4 690.3l19.0 -2.4 1.4 11.3 -19.0 2.4zM2427.6 676.5l8.2 -1.1 1.7 13.0 -8.2 1.1zM2448.5 709.1l18.4 -0.6 0.3 10.3 -18.4 0.6zM2468.5 708.5l13.6 -0.4 0.4 12.4 -13.6 0.4zM2482.3 708.1l20.8 -0.7 0.3 9.1 -20.8 0.7zM2491.0 717.0l8.3 -0.3 0.3 9.3 -8.3 0.3zM2504.4 707.4l21.1 -0.7 0.3 9.8 -21.1 0.7zM2510.7 716.9l5.7 -0.2 0.2 7.7 -5.7 0.2zM2449.2 685.1l16.0 -0.5 0.4 13.6 -16.0 0.5zM2450.1 678.0l9.0 -0.3 0.2 7.1 -9.0 0.3zM2466.6 688.9l17.3 -0.5 0.3 9.2 -17.3 0.5zM2470.6 681.9l7.4 -0.2 0.2 6.7 -7.4 0.2zM2484.1 688.1l12.5 -0.4 0.3 9.5 -12.5 0.4zM2516.2 685.8l18.4 -0.6 0.3 10.8 -18.4 0.6zM2521.9 675.0l5.4 -0.2 0.3 10.5 -5.4 0.2zM2332.7 756.9l2.2 17.2 -12.8 1.7 -2.2 -17.2zM2320.5 763.6l1.2 9.5 -12.0 1.5 -1.2 -9.5zM2336.7 788.2l1.5 11.8 -11.9 1.5 -1.5 -11.8zM2325.3 788.6l1.0 8.1 -7.7 1.0 -1.0 -8.1zM2357.0 743.5l3.0 23.7 -11.3 1.5 -3.0 -23.7zM2374.5 774.1l0.9 7.2 -9.8 1.3 -0.9 -7.2zM2330.1 806.8l3.3 9.4 -9.3 3.3 -3.3 -9.4zM2333.0 831.1l1.8 5.2 -12.0 4.3 -1.8 -5.2zM2361.7 792.1l4.4 12.3 -9.3 3.3 -4.4 -12.3zM2365.8 804.8l4.7 13.2 -8.9 3.2 -4.7 -13.2zM2378.8 800.8l3.3 9.3 -12.9 4.6 -3.3 -9.3zM2374.2 817.2l6.3 17.7 -12.4 4.4 -6.3 -17.7zM2394.7 849.4l13.2 18.8 -12.7 8.9 -13.2 -18.8zM2384.2 885.0l10.0 8.5 -6.2 7.3 -10.0 -8.5zM2379.5 896.0l4.8 4.1 -6.8 8.0 -4.8 -4.1zM2395.3 894.5l15.6 13.2 -9.5 11.2 -15.6 -13.2zM2392.0 908.7l6.8 5.8 -5.7 6.8 -6.8 -5.8zM2312.8 639.7l12.5 -3.6 2.3 8.0 -12.5 3.6zM2150.7 569.6l13.1 -2.5 2.1 10.8 -13.1 2.5zM2085.7 665.6l14.6 -2.4 1.5 8.8 -14.6 2.4zM2203.8 693.0l11.4 -3.3 4.9 16.7 -11.4 3.3zM1835.0 676.1l12.6 -2.7 2.7 12.7 -12.6 2.7zM1944.4 657.1l14.3 -4.0 2.3 8.3 -14.3 4.0zM1970.9 588.0l14.3 -1.2 1.0 12.1 -14.3 1.2zM1896.8 577.2l9.5 -2.6 3.4 12.4 -9.5 2.6zM2268.7 553.4l8.0 -2.2 2.4 8.9 -8.0 2.2zM2042.9 596.3l16.0 -1.2 1.4 18.6 -16.0 1.2zM2146.9 558.8l14.6 -1.5 1.8 17.6 -14.6 1.5zM1911.3 688.6l14.8 -5.1 5.3 15.5 -14.8 5.1zM1841.4 664.0l15.7 -5.7 3.9 10.8 -15.7 5.7zM2322.5 642.4l11.9 -1.5 1.4 11.5 -11.9 1.5zM2008.2 577.4l18.5 -4.2 2.8 12.4 -18.5 4.2zM2186.7 700.2l12.8 -3.1 4.1 16.9 -12.8 3.1zM2224.0 698.3l16.2 -1.9 1.9 15.6 -16.2 1.9zM2300.3 630.0l12.0 -2.5 1.6 7.9 -12.0 2.5zM1831.7 702.2l10.7 -3.8 6.2 17.2 -10.7 3.8zM2214.6 652.2l14.6 -4.9 4.3 12.7 -14.6 4.9zM2204.3 617.1l13.9 -3.0 3.5 16.5 -13.9 3.0zM2068.7 661.7l16.0 -2.1 1.5 11.6 -16.0 2.1zM2160.0 599.4l17.7 -2.4 2.4 18.2 -17.7 2.4zM2004.1 613.8l14.4 -2.9 1.6 8.2 -14.4 2.9zM1863.0 683.7l14.1 -2.1 2.8 18.8 -14.1 2.1zM2203.5 606.3l9.2 -1.0 1.8 17.3 -9.2 1.0zM1938.7 623.0l13.4 -2.9 2.5 11.7 -13.4 2.9zM2308.9 642.6l17.9 -5.5 5.3 17.2 -17.9 5.5zM2017.8 637.6l13.7 -3.7 4.2 15.6 -13.7 3.7zM2013.9 667.1l13.4 -0.9 1.1 15.0 -13.4 0.9zM1834.6 686.1l13.7 -1.6 1.8 15.0 -13.7 1.6zM2022.1 700.7l12.2 -1.4 1.9 15.9 -12.2 1.4zM2039.2 599.9l11.7 -1.3 1.4 12.5 -11.7 1.3zM2316.0 670.0l13.7 -3.7 4.0 14.5 -13.7 3.7zM2260.4 604.9l13.0 -3.7 2.9 10.0 -13.0 3.7zM2145.9 616.6l14.1 -5.1 3.4 9.4 -14.1 5.1zM2113.6 571.8l13.4 -3.8 3.2 11.1 -13.4 3.8zM2007.1 664.5l15.3 -5.4 4.0 11.4 -15.3 5.4zM2307.5 638.4l12.4 -1.2 1.8 17.9 -12.4 1.2zM1837.6 641.5l12.4 -1.5 1.7 14.2 -12.4 1.5zM2247.3 593.9l10.2 -3.4 2.6 8.0 -10.2 3.4zM2093.0 695.8l9.6 -2.4 2.7 10.8 -9.6 2.4zM2007.8 652.3l9.5 -1.8 1.6 8.3 -9.5 1.8zM1897.6 549.3l15.3 -1.4 0.8 8.7 -15.3 1.4zM1913.3 609.3l8.3 -2.1 2.2 8.7 -8.3 2.1zM2276.9 663.8l14.7 -3.1 3.0 14.1 -14.7 3.1zM2073.7 607.1l16.7 -4.0 2.6 11.0 -16.7 4.0zM2304.5 597.7l12.2 -3.7 3.6 11.9 -12.2 3.7zM2219.3 571.8l13.0 -2.5 2.1 10.9 -13.0 2.5zM1890.4 618.6l9.9 -1.6 2.4 14.9 -9.9 1.6zM1946.3 586.8l11.5 -1.2 1.9 17.7 -11.5 1.2zM2027.4 614.4l10.2 -0.9 1.1 13.0 -10.2 0.9zM2023.6 573.5l16.9 -3.7 2.4 11.1 -16.9 3.7zM2168.9 623.1l16.6 -2.4 2.2 15.8 -16.6 2.4zM1957.4 635.2l8.4 -1.3 2.7 18.1 -8.4 1.3zM2007.8 552.1l13.4 -4.4 5.1 15.7 -13.4 4.4zM2167.1 616.9l16.7 -1.2 0.9 12.5 -16.7 1.2zM1989.5 628.0l14.4 -1.7 1.6 12.9 -14.4 1.7zM2231.5 611.3l9.6 -1.9 3.3 17.1 -9.6 1.9zM2192.7 645.9l17.5 -4.6 2.2 8.3 -17.5 4.6zM2146.3 577.9l7.9 -2.5 2.8 9.1 -7.9 2.5zM2057.3 616.1l7.8 -2.2 3.8 13.3 -7.8 2.2zM1860.7 566.5l12.1 -2.7 2.1 9.6 -12.1 2.7zM2194.1 685.6l11.5 -0.9 0.7 8.8 -11.5 0.9zM2149.4 663.4l12.7 -4.0 5.4 17.0 -12.7 4.0zM2274.7 688.5l17.0 -3.5 2.6 12.5 -17.0 3.5zM2020.6 583.5l7.9 -2.5 3.1 9.8 -7.9 2.5zM1980.6 597.7l18.2 -4.2 3.5 15.2 -18.2 4.2zM2009.3 587.4l18.4 -1.4 1.0 12.6 -18.4 1.4zM1857.4 686.0l8.7 -1.6 3.0 16.4 -8.7 1.6zM2238.8 609.6l18.8 -1.6 1.2 14.1 -18.8 1.6zM2014.2 654.6l15.1 -5.4 5.1 14.3 -15.1 5.4zM2208.0 573.6l8.9 -1.8 1.7 8.6 -8.9 1.8zM2244.4 607.9l18.5 -4.3 3.7 15.7 -18.5 4.3zM2157.2 651.0l15.0 -1.8 2.1 16.7 -15.0 1.8zM2231.4 561.3l17.5 -5.8 4.9 14.5 -17.5 5.8zM2144.1 592.0l17.9 -3.9 2.3 10.8 -17.9 3.9zM2290.4 589.0l17.5 -3.4 3.0 15.7 -17.5 3.4zM2265.1 666.6l13.4 -4.0 2.4 8.1 -13.4 4.0zM1890.7 645.7l11.7 -1.4 1.5 12.2 -11.7 1.4zM2198.6 609.9l13.8 -1.3 1.7 18.8 -13.8 1.3zM1873.7 689.9l8.4 -1.4 1.5 9.2 -8.4 1.4zM2203.7 649.6l9.8 -0.7 1.3 17.9 -9.8 0.7zM2313.9 669.3l13.2 -1.1 1.5 17.0 -13.2 1.1zM1871.7 603.1l15.0 -4.7 3.6 11.5 -15.0 4.7zM1902.5 616.9l8.7 -2.6 4.6 15.3 -8.7 2.6zM1884.2 645.4l14.9 -2.6 1.8 10.0 -14.9 2.6zM2133.7 568.2l13.0 -2.3 3.0 16.9 -13.0 2.3zM1998.2 684.5l8.4 -1.8 2.7 13.0 -8.4 1.8zM1831.3 558.6l16.6 -4.6 3.4 12.5 -16.6 4.6zM1855.1 553.1l16.4 -5.0 4.7 15.7 -16.4 5.0zM1869.2 590.9l13.4 -2.8 3.4 15.9 -13.4 2.8zM2324.2 634.6l8.4 -1.4 1.5 9.4 -8.4 1.4zM2274.2 545.7l8.4 -2.0 4.4 18.4 -8.4 2.0zM2125.5 559.4l11.6 -1.7 1.7 11.9 -11.6 1.7zM2171.5 568.1l12.5 -3.9 5.3 17.3 -12.5 3.9zM2136.0 702.5l8.1 -1.8 3.4 15.2 -8.1 1.8zM2243.8 556.1l14.4 -2.0 1.6 11.4 -14.4 2.0zM2034.2 563.9l16.1 -3.1 3.0 15.4 -16.1 3.1zM2295.2 579.3l15.0 -4.2 4.6 16.2 -15.0 4.2zM1985.6 694.2l14.3 -1.5 1.9 18.6 -14.3 1.5zM2012.6 614.1l14.1 -3.3 3.9 16.4 -14.1 3.3zM2111.5 640.3l12.1 -2.4 3.3 16.5 -12.1 2.4zM1877.2 595.0l8.2 -0.9 1.1 9.7 -8.2 0.9zM2123.4 599.5l15.3 -1.8 2.1 17.5 -15.3 1.8zM2302.0 605.4l18.2 -5.1 4.4 15.8 -18.2 5.1zM2090.6 676.4l9.0 -1.5 2.9 17.6 -9.0 1.5zM2031.6 601.6l12.1 -2.8 3.5 15.5 -12.1 2.8zM2262.8 551.8l7.9 -2.4 5.3 17.6 -7.9 2.4zM2033.2 576.6l8.0 -1.5 2.3 12.5 -8.0 1.5zM1834.9 587.0l17.0 -4.8 4.5 15.6 -17.0 4.8zM2037.4 657.2l10.9 -2.3 2.5 11.6 -10.9 2.3zM2042.7 665.9l13.1 -3.4 2.1 8.3 -13.1 3.4zM1945.0 605.3l13.5 -4.2 3.5 11.5 -13.5 4.2zM1866.3 688.5l8.9 -1.8 2.8 13.8 -8.9 1.8zM2139.9 688.3l11.0 -3.3 2.5 8.3 -11.0 3.3zM2189.6 528.8l8.9 1.7 -1.6 8.4 -8.9 -1.7zM2376.0 500.6l8.5 2.2 -2.9 11.2 -8.5 -2.2zM2300.0 499.6l10.9 2.1 -1.7 8.5 -10.9 -2.1zM1946.0 505.0l11.4 3.0 -2.9 11.3 -11.4 -3.0zM1875.4 530.0l8.0 1.1 -1.6 11.6 -8.0 -1.1zM1853.5 504.1l11.6 2.9 -2.4 9.4 -11.6 -2.9zM2152.7 539.2l6.0 0.9 -1.4 9.1 -6.0 -0.9zM2349.1 502.1l10.6 1.1 -0.9 8.1 -10.6 -1.1zM2005.3 502.1l11.3 0.3 -0.2 11.0 -11.3 -0.3zM1899.3 505.1l8.2 1.1 -1.2 8.8 -8.2 -1.1zM1894.6 521.3l10.9 1.1 -0.8 8.0 -10.9 -1.1zM2358.8 531.2l9.8 1.0 -0.7 6.5 -9.8 -1.0zM2091.3 513.5l10.9 2.0 -1.1 6.2 -10.9 -2.0zM1900.8 513.8l12.7 1.9 -1.2 8.0 -12.7 -1.9zM2163.1 510.2l8.6 1.7 -2.6 13.1 -8.6 -1.7zM2033.7 514.1l8.9 0.9 -1.3 12.9 -8.9 -0.9zM1941.0 517.4l8.1 0.8 -1.4 13.2 -8.1 -0.8zM2170.5 507.8l10.2 2.0 -2.6 13.2 -10.2 -2.0zM2171.8 521.0l7.0 1.3 -2.3 12.5 -7.0 -1.3zM2015.6 528.8l9.8 2.8 -2.3 8.2 -9.8 -2.8zM2236.1 531.9l11.2 3.0 -2.4 8.8 -11.2 -3.0zM2232.0 515.3l9.7 2.5 -1.6 6.2 -9.7 -2.5zM2185.0 517.2l12.4 1.4 -0.7 6.1 -12.4 -1.4zM2194.1 508.8l10.8 1.2 -1.5 13.1 -10.8 -1.2zM1842.9 532.8l9.7 0.1 -0.1 9.5 -9.7 -0.1zM1837.8 535.6l6.3 0.8 -1.1 8.5 -6.3 -0.8zM1965.8 522.0l11.1 0.3 -0.4 13.9 -11.1 -0.3zM1897.6 509.1l7.5 1.7 -1.4 6.1 -7.5 -1.7zM2273.9 532.6l12.2 2.0 -1.0 6.1 -12.2 -2.0zM2209.3 520.3l9.3 1.4 -1.9 12.4 -9.3 -1.4zM2130.2 514.8l7.3 1.7 -2.6 11.1 -7.3 -1.7zM1840.6 513.9l12.0 1.7 -1.0 7.0 -12.0 -1.7zM2152.4 508.9l6.1 0.3 -0.5 11.6 -6.1 -0.3zM2147.4 525.1l6.7 1.4 -2.9 13.5 -6.7 -1.4zM1945.6 525.8l8.9 1.7 -2.2 11.4 -8.9 -1.7zM2394.4 513.7l9.7 0.4 -0.5 11.7 -9.7 -0.4zM2033.0 535.9l7.1 1.2 -1.1 6.9 -7.1 -1.2zM2094.9 502.0l11.6 2.2 -2.3 11.7 -11.6 -2.2zM1865.4 519.9l6.6 1.0 -1.8 11.6 -6.6 -1.0zM2316.8 524.0l12.6 1.0 -0.8 10.0 -12.6 -1.0zM2477.5 641.4l12.6 -1.3 1.2 11.5 -12.6 1.3zM2414.3 555.3l15.6 0.4 -0.3 13.8 -15.6 -0.4zM2427.0 559.9l11.4 -1.4 1.4 11.3 -11.4 1.4zM2393.3 690.4l8.9 0.0 -0.0 9.6 -8.9 -0.0zM2482.3 579.1l10.5 -1.7 1.8 11.1 -10.5 1.7zM2525.1 684.8l8.4 -0.9 0.8 7.2 -8.4 0.9zM2445.6 688.4l15.7 -2.4 2.0 13.0 -15.7 2.4zM2354.8 599.4l13.6 -2.4 1.7 9.7 -13.6 2.4zM2516.3 638.6l7.9 -1.3 1.8 10.7 -7.9 1.3zM2422.0 606.9l14.8 -1.5 1.0 9.6 -14.8 1.5zM2401.9 621.7l12.8 -0.7 0.5 10.0 -12.8 0.7zM2501.8 623.2l13.5 -0.4 0.4 12.2 -13.5 0.4zM2373.2 594.7l9.9 -0.1 0.1 7.1 -9.9 0.1zM2507.3 614.9l15.6 -1.8 1.7 14.6 -15.6 1.8zM2427.7 656.1l11.1 0.6 -0.7 13.5 -11.1 -0.6zM2441.7 653.3l11.4 -1.3 1.3 12.2 -11.4 1.3zM2532.3 627.3l12.0 -0.8 0.5 7.9 -12.0 0.8zM2390.7 658.0l9.2 -1.4 2.0 13.3 -9.2 1.4zM2489.9 540.5l14.4 -2.3 1.9 11.6 -14.4 2.3zM2451.0 655.5l8.5 -1.4 1.2 7.5 -8.5 1.4zM2419.9 657.3l13.5 -0.8 0.6 10.3 -13.5 0.8zM2460.7 638.0l9.0 -1.7 2.4 12.8 -9.0 1.7zM2448.0 683.2l13.0 -0.3 0.2 8.9 -13.0 0.3zM2414.4 645.5l13.7 -2.3 2.2 12.9 -13.7 2.3zM2515.1 602.6l15.2 -2.0 2.1 15.8 -15.2 2.0zM2459.8 601.2l13.3 -1.2 0.9 9.3 -13.3 1.2zM2348.0 673.3l10.3 0.4 -0.3 9.7 -10.3 -0.4zM2448.0 555.0l10.7 0.0 -0.0 14.9 -10.7 -0.0zM2520.8 573.0l7.5 -0.3 0.4 8.2 -7.5 0.3zM2415.4 648.2l8.9 -1.0 1.4 12.4 -8.9 1.0zM2490.4 563.4l14.1 -1.5 1.4 13.8 -14.1 1.5zM2382.2 557.6l13.2 -0.9 0.7 10.3 -13.2 0.9zM2393.0 562.0l13.6 -2.5 2.0 10.7 -13.6 2.5zM2395.4 671.8l9.6 0.1 -0.1 15.1 -9.6 -0.1zM2447.2 623.6l8.9 -0.4 0.5 9.3 -8.9 0.4zM2494.5 675.8l10.8 -0.7 0.6 8.2 -10.8 0.7zM2363.4 649.8l11.9 -1.9 1.5 9.3 -11.9 1.9zM2518.6 592.4l12.2 -1.2 0.9 8.9 -12.2 1.2zM2401.7 634.3l11.7 -2.3 1.4 7.3 -11.7 2.3zM2372.2 621.0l12.3 0.3 -0.3 12.6 -12.3 -0.3zM2489.5 551.3l14.8 -0.9 0.9 15.3 -14.8 0.9zM2450.7 604.0l8.4 -0.2 0.3 11.3 -8.4 0.2zM2512.0 619.6l15.1 -3.4 2.3 10.1 -15.1 3.4zM2448.7 660.2l9.1 -0.2 0.2 7.2 -9.1 0.2zM2508.5 624.8l8.2 -0.1 0.1 11.7 -8.2 0.1zM2528.1 543.0l8.3 -0.3 0.5 12.3 -8.3 0.3zM2521.9 566.8l7.4 -1.0 1.5 11.7 -7.4 1.0zM2420.3 674.9l9.5 -0.7 0.9 13.2 -9.5 0.7zM2519.2 576.7l9.7 -0.3 0.3 8.7 -9.7 0.3zM2413.2 554.3l12.3 -0.9 0.7 10.0 -12.3 0.9zM1869.1 748.0l15.2 -7.6 7.9 15.7 -15.2 7.6zM2062.6 868.4l10.2 -5.1 8.3 16.6 -10.2 5.1zM1894.7 832.7l18.2 -4.3 3.7 15.5 -18.2 4.3zM2302.6 878.3l10.7 -2.5 3.8 16.0 -10.7 2.5zM2046.3 858.6l13.4 -5.1 6.5 16.9 -13.4 5.1zM1945.5 784.3l17.1 -4.2 2.6 10.6 -17.1 4.2zM2131.6 788.3l7.8 -2.0 2.4 9.0 -7.8 2.0zM2302.2 785.9l17.0 -6.9 4.8 11.9 -17.0 6.9zM2241.8 848.4l10.1 -4.7 3.9 8.3 -10.1 4.7zM1959.6 829.8l11.1 -2.8 2.5 10.1 -11.1 2.8zM2083.2 837.7l13.5 -3.5 2.6 10.0 -13.5 3.5zM2235.4 886.9l17.6 -6.2 4.0 11.4 -17.6 6.2zM2226.8 766.7l9.9 -3.5 4.3 12.2 -9.9 3.5zM2021.7 740.4l11.0 -5.5 7.9 15.8 -11.0 5.5zM2142.5 869.2l11.3 -2.6 3.2 14.3 -11.3 2.6zM2124.6 792.0l14.5 -4.5 4.7 15.3 -14.5 4.5zM2045.5 853.9l10.6 -5.3 4.7 9.5 -10.6 5.3zM1949.1 785.1l10.5 -4.1 4.4 11.3 -10.5 4.1zM2109.1 824.9l12.0 -3.2 3.6 13.5 -12.0 3.2zM2103.8 797.0l9.0 -4.5 4.6 9.3 -9.0 4.5zM1890.1 806.9l13.8 -3.9 2.5 8.9 -13.8 3.9zM2149.8 808.4l15.0 -7.4 6.8 13.9 -15.0 7.4zM1991.4 858.9l10.7 -5.6 4.8 9.3 -10.7 5.6zM1923.5 783.3l17.0 -6.7 3.1 8.0 -17.0 6.7zM2175.2 865.3l16.7 -8.4 5.2 10.3 -16.7 8.4zM1871.6 782.0l13.3 -6.6 7.9 16.0 -13.3 6.6zM2272.7 834.9l11.0 -5.6 4.0 7.8 -11.0 5.6zM2147.4 749.6l12.0 -6.3 8.0 15.0 -12.0 6.3zM2055.8 835.2l15.0 -5.8 5.6 14.4 -15.0 5.8zM2151.0 812.6l17.3 -5.8 4.4 13.1 -17.3 5.8zM2088.1 815.8l15.0 -3.2 3.0 14.3 -15.0 3.2zM2091.9 892.9l15.6 -6.7 5.5 13.0 -15.6 6.7zM2059.3 808.2l12.0 -4.4 3.8 10.1 -12.0 4.4zM1892.9 819.5l17.0 -6.5 5.6 14.7 -17.0 6.5zM1929.3 843.3l14.7 -7.4 5.5 11.0 -14.7 7.4zM1963.1 882.0l14.5 -6.3 3.6 8.2 -14.5 6.3zM2127.2 883.1l15.4 -3.9 4.2 16.9 -15.4 3.9zM1896.5 790.5l13.1 -6.0 5.2 11.4 -13.1 6.0zM2262.4 843.4l10.9 -2.7 3.2 12.8 -10.9 2.7zM2152.5 774.9l17.5 -4.0 3.7 16.4 -17.5 4.0zM2100.6 787.1l11.6 -2.6 4.0 18.1 -11.6 2.6zM2278.3 815.2l14.2 -5.5 6.5 16.8 -14.2 5.5zM2230.0 784.5l10.8 -5.1 6.7 14.1 -10.8 5.1zM1956.0 754.7l17.4 -4.6 4.9 18.3 -17.4 4.6zM2207.0 848.1l11.6 -5.6 6.0 12.3 -11.6 5.6zM2025.6 798.6l13.9 -6.3 4.4 9.7 -13.9 6.3zM2222.4 887.6l15.6 -5.7 3.5 9.5 -15.6 5.7zM2233.6 777.1l11.8 -6.2 6.8 12.8 -11.8 6.2zM2205.2 843.8l12.2 -4.3 4.8 13.5 -12.2 4.3zM1908.7 856.1l15.9 -4.5 3.5 12.3 -15.9 4.5zM2181.2 868.2l18.2 -4.2 1.9 8.2 -18.2 4.2zM2222.7 854.8l8.1 -4.1 6.5 12.9 -8.1 4.1zM2024.6 797.0l10.5 -3.4 5.2 16.1 -10.5 3.4zM2203.4 769.0l16.2 -4.6 4.0 14.1 -16.2 4.6zM2314.9 848.0l12.4 -4.3 4.7 13.7 -12.4 4.3zM2006.9 862.4l16.3 -5.0 5.4 17.8 -16.3 5.0zM2047.9 847.6l14.6 -4.2 5.1 17.7 -14.6 4.2zM1995.2 749.1l15.4 -6.1 4.7 11.8 -15.4 6.1zM2095.3 878.0l10.6 -3.0 4.4 15.6 -10.6 3.0zM2139.1 778.3l15.1 -3.3 3.1 14.1 -15.1 3.3zM2030.7 882.1l14.2 -4.5 3.6 11.2 -14.2 4.5zM1955.5 877.1l11.9 -5.4 7.0 15.3 -11.9 5.4zM1977.7 866.3l13.5 -5.4 4.6 11.4 -13.5 5.4zM1967.7 849.9l10.6 -4.3 3.4 8.5 -10.6 4.3zM2316.0 797.5l11.9 -3.5 5.3 17.9 -11.9 3.5zM2052.5 775.1l9.2 -3.0 4.0 12.6 -9.2 3.0zM2085.7 768.4l14.0 -4.4 3.5 11.3 -14.0 4.4zM2056.2 800.8l8.4 -2.7 3.2 9.8 -8.4 2.7zM1931.9 893.6l17.0 -6.0 4.0 11.3 -17.0 6.0zM2018.3 798.4l14.9 -5.7 4.8 12.4 -14.9 5.7zM1925.4 815.2l10.6 -3.8 3.3 9.3 -10.6 3.8zM2107.8 817.8l15.0 -3.3 2.7 12.3 -15.0 3.3zM1874.2 830.3l14.5 -5.8 4.5 11.3 -14.5 5.8zM1979.3 865.3l16.5 -5.7 3.6 10.5 -16.5 5.7zM1930.3 851.1l13.5 -3.2 4.4 18.4 -13.5 3.2zM1988.4 760.1l16.2 -4.9 2.7 8.8 -16.2 4.9zM2190.1 746.6l8.4 -3.0 5.9 16.5 -8.4 3.0zM2309.6 861.2l9.7 -3.9 5.9 14.6 -9.7 3.9zM2013.4 777.6l10.3 -4.8 4.6 10.0 -10.3 4.8zM2039.6 828.6l15.3 -7.3 6.7 14.0 -15.3 7.3zM2040.7 846.2l13.5 -3.7 4.9 17.8 -13.5 3.7zM2311.4 796.7l17.4 -4.7 2.1 7.7 -17.4 4.7zM2098.6 807.3l8.5 -2.3 4.0 14.5 -8.5 2.3zM1982.4 863.4l12.7 -5.4 3.2 7.5 -12.7 5.4zM1995.6 782.9l12.5 -3.4 4.6 17.1 -12.5 3.4zM2173.7 744.9l8.3 -2.7 3.7 11.5 -8.3 2.7zM1892.9 875.7l9.0 -4.5 3.9 7.7 -9.0 4.5zM1999.6 832.0l14.3 -5.1 3.8 10.5 -14.3 5.1zM2132.8 759.7l14.5 -3.4 1.8 7.8 -14.5 3.4zM2121.7 771.0l12.3 -3.9 3.3 10.4 -12.3 3.9zM2251.3 892.0l12.0 -5.0 5.3 13.0 -12.0 5.0zM2101.5 890.0l7.9 -3.3 6.3 14.9 -7.9 3.3zM2288.2 773.9l17.6 -5.9 4.1 12.1 -17.6 5.9zM1909.9 817.7l15.6 -4.5 4.7 16.0 -15.6 4.5zM1929.9 806.2l13.1 -3.7 2.3 8.1 -13.1 3.7zM2126.4 779.1l9.3 -3.0 5.7 17.6 -9.3 3.0zM2143.1 831.7l16.3 -6.6 3.2 8.1 -16.3 6.6zM2138.0 804.9l16.6 -7.3 4.2 9.7 -16.6 7.3zM2195.5 806.9l10.9 -5.2 7.0 14.5 -10.9 5.2zM1942.2 883.6l16.4 -4.5 2.9 10.8 -16.4 4.5zM1983.9 848.5l12.2 -3.1 2.4 9.3 -12.2 3.1zM2404.4 790.9l14.8 0.3 -0.2 11.7 -14.8 -0.3zM2528.8 729.7l10.3 2.3 -2.8 12.5 -10.3 -2.3zM2366.7 830.6l9.4 -0.1 0.1 10.1 -9.4 0.1zM2516.3 762.9l17.4 3.5 -1.8 9.1 -17.4 -3.5zM2452.5 744.5l12.8 1.3 -1.6 15.5 -12.8 -1.3zM2457.6 874.6l9.3 1.1 -1.8 15.3 -9.3 -1.1zM2419.7 797.7l16.1 0.8 -0.5 10.5 -16.1 -0.8zM2477.3 800.0l8.1 0.5 -1.0 15.6 -8.1 -0.5zM2429.7 735.2l16.0 3.5 -3.4 15.6 -16.0 -3.5zM2388.8 791.7l17.9 0.8 -0.3 8.0 -17.9 -0.8zM2393.0 763.9l13.9 2.7 -1.6 8.5 -13.9 -2.7zM2393.5 731.9l13.2 1.2 -1.0 11.4 -13.2 -1.2zM2427.6 803.8l8.7 1.6 -2.4 12.8 -8.7 -1.6zM2387.5 829.2l8.8 -0.4 0.5 9.4 -8.8 0.4zM2395.7 761.7l9.2 -0.1 0.2 16.9 -9.2 0.1zM2502.1 794.1l13.6 2.4 -2.0 11.2 -13.6 -2.4zM2378.6 840.3l9.4 -0.0 0.0 12.8 -9.4 0.0zM2476.7 847.3l11.2 0.8 -0.6 8.5 -11.2 -0.8zM2458.3 822.8l15.3 3.3 -3.0 14.1 -15.3 -3.3zM2492.4 859.3l9.3 1.4 -1.6 10.5 -9.3 -1.4zM2512.4 853.8l11.2 1.5 -1.3 9.6 -11.2 -1.5zM2449.6 761.7l11.9 1.5 -1.8 14.4 -11.9 -1.5zM2373.9 871.5l14.9 1.8 -2.0 17.0 -14.9 -1.8zM2514.5 850.4l14.3 -0.7 0.4 8.4 -14.3 0.7zM2511.0 782.6l9.9 1.8 -2.3 12.2 -9.9 -1.8zM2387.4 748.5l10.1 0.2 -0.3 15.5 -10.1 -0.2zM2438.3 782.2l8.2 1.9 -2.3 10.0 -8.2 -1.9zM2434.7 867.7l16.9 2.6 -2.5 16.4 -16.9 -2.6zM2450.4 840.1l14.0 -0.0 0.0 17.7 -14.0 0.0zM2491.2 793.8l16.5 0.9 -0.6 10.8 -16.5 -0.9zM2529.3 754.8l16.1 3.3 -3.0 14.3 -16.1 -3.3zM2476.5 871.0l16.6 3.1 -2.7 14.7 -16.6 -3.1zM2414.6 756.9l16.2 2.6 -1.6 9.7 -16.2 -2.6zM2423.7 888.0l9.3 0.2 -0.3 13.8 -9.3 -0.2zM2376.5 832.9l10.6 0.4 -0.7 17.6 -10.6 -0.4zM2493.3 779.5l9.9 1.3 -2.2 16.8 -9.9 -1.3zM2377.8 831.8l8.6 -0.3 0.4 10.4 -8.6 0.3zM2490.0 761.3l17.6 3.0 -1.8 10.6 -17.6 -3.0zM2477.1 819.9l9.2 1.9 -3.3 15.9 -9.2 -1.9zM2397.1 726.4l10.6 0.4 -0.6 17.7 -10.6 -0.4zM1861.6 757.4l8.8 -0.7 0.5 6.0 -8.8 0.7zM1828.7 793.6l8.4 -0.9 0.6 5.9 -8.4 0.9zM1851.8 592.7l5.7 -2.1 3.0 8.4 -5.7 2.1zM1830.9 708.7l5.5 -1.3 2.0 8.7 -5.5 1.3zM1863.3 791.1l5.9 -0.8 0.9 6.8 -5.9 0.8zM1863.2 658.1l8.0 -1.2 0.9 6.2 -8.0 1.2zM1842.8 740.5l8.7 -2.7 1.7 5.4 -8.7 2.7zM1855.8 728.4l8.2 -2.4 2.5 8.7 -8.2 2.4zM1827.8 661.3l7.9 -1.0 0.8 6.3 -7.9 1.0zM1831.0 723.3l9.1 -1.0 0.9 8.3 -9.1 1.0zM1856.6 763.5l7.6 -2.4 2.3 7.3 -7.6 2.4zM1831.2 610.8l6.8 -1.3 1.2 6.3 -6.8 1.3zM1837.2 775.7l9.0 -1.7 1.1 5.9 -9.0 1.7zM1830.8 634.9l5.7 -2.0 1.7 4.7 -5.7 2.0zM1861.9 769.1l5.3 -0.6 0.6 5.1 -5.3 0.6zM1840.5 735.1l7.3 -2.3 2.0 6.3 -7.3 2.3zM1855.9 777.7l5.1 -1.0 1.2 6.0 -5.1 1.0zM1846.9 693.4l6.1 -1.5 1.3 5.4 -6.1 1.5zM1831.9 700.3l8.8 -2.3 2.0 7.6 -8.8 2.3zM1857.7 796.5l6.3 -1.4 1.6 7.2 -6.3 1.4zM1850.7 701.9l7.3 -1.9 2.3 9.2 -7.3 1.9zM1835.1 636.9l5.4 -1.1 1.9 9.7 -5.4 1.1zM1845.2 695.6l6.0 -1.4 2.2 9.2 -6.0 1.4zM1854.5 769.9l9.7 -2.3 1.7 7.2 -9.7 2.3zM1843.7 630.4l7.1 -2.0 1.8 6.3 -7.1 2.0zM1841.7 719.0l6.5 -0.9 0.7 5.5 -6.5 0.9zM1855.4 714.7l5.8 -0.7 0.9 7.5 -5.8 0.7zM1837.0 670.2l8.5 -0.9 0.9 8.4 -8.5 0.9zM1458.1 595.8l9.4 -3.7 4.4 11.1 -9.4 3.7zM1580.5 689.8l9.0 -3.1 5.6 16.3 -9.0 3.1zM1430.9 603.3l9.7 -3.2 4.4 13.1 -9.7 3.2zM1637.8 585.3l9.8 -2.9 3.9 13.1 -9.8 2.9zM1497.6 559.5l9.9 -2.2 3.5 15.2 -9.9 2.2zM1606.3 698.3l10.4 -2.7 4.3 16.7 -10.4 2.7zM1590.7 604.7l10.6 -3.2 3.4 11.2 -10.6 3.2zM1512.7 837.9l10.0 -2.9 4.6 16.0 -10.0 2.9zM1505.1 597.4l16.7 -3.4 2.9 14.4 -16.7 3.4zM1632.6 876.5l14.9 -4.7 5.3 16.9 -14.9 4.7zM1702.8 829.8l16.3 -4.8 3.6 12.4 -16.3 4.8zM1430.3 562.4l10.1 -3.0 3.3 11.3 -10.1 3.0zM1533.2 510.1l11.2 -4.6 5.1 12.6 -11.2 4.6zM1369.2 727.8l15.5 -5.9 4.3 11.2 -15.5 5.9zM1566.7 681.6l9.9 -2.4 3.3 13.6 -9.9 2.4zM1710.8 526.9l15.8 -4.6 3.3 11.4 -15.8 4.6zM1367.9 650.4l12.2 -4.6 3.2 8.4 -12.2 4.6zM1566.6 884.9l13.6 -2.9 3.6 17.2 -13.6 2.9z" fill="#f0f0f1" stroke="#e3e5e9" stroke-width=".7"/>
<path d="M1386.1 574.4l20.7 -6.0 2.5 8.7 -20.7 6.0zM1653.0 515.9l11.1 -3.9 3.0 8.5 -11.1 3.9zM1514.0 579.9l5.4 19.6 -9.5 2.6 -5.4 -19.6zM1554.5 766.9l4.3 14.7 -8.6 2.6 -4.3 -14.7zM1586.3 876.5l4.1 15.3 -12.3 3.3 -4.1 -15.3zM1702.3 778.9l5.9 19.7 -9.5 2.8 -5.9 -19.7zM1648.9 602.8l12.8 -4.3 4.3 12.6 -12.8 4.3zM1369.3 667.4l25.4 -4.4 1.7 10.0 -25.4 4.4zM1363.6 695.0l10.7 -1.8 1.8 11.3 -10.7 1.8zM1406.7 746.6l15.7 -4.7 3.2 10.6 -15.7 4.7zM1501.6 745.5l25.3 2.1 -0.8 9.5 -25.3 -2.1zM1459.7 693.1l5.5 15.2 -9.8 3.5 -5.5 -15.2zM1828.1 503.6l13.6 2.3 -1.7 10.2 -13.6 -2.3zM2010.6 558.8l20.7 2.1 -1.3 12.7 -20.7 -2.1zM1859.4 560.7l2.9 14.4 -8.3 1.6 -2.9 -14.4zM1901.4 687.7l2.3 11.5 -9.8 2.0 -2.3 -11.5zM1892.3 730.2l2.4 16.6 -12.7 1.9 -2.4 -16.6zM2258.9 513.6l-6.5 10.8 -11.9 -7.1 6.5 -10.8zM1867.1 769.0l11.4 -2.3 2.9 14.0 -11.4 2.3zM1928.2 734.1l9.0 -1.9 2.9 14.2 -9.0 1.9zM1972.9 725.6l10.1 -2.1 2.8 13.6 -10.1 2.1zM2020.4 786.6l1.7 13.8 -8.8 1.1 -1.7 -13.8zM2333.6 798.4l-18.6 8.3 -6.1 -13.6 18.6 -8.3zM2245.3 832.8l-8.4 3.7 -4.2 -9.4 8.4 -3.7zM1962.9 892.1l-12.8 3.6 -2.6 -9.3 12.8 -3.6zM2036.9 888.2l-21.0 5.9 -2.2 -7.8 21.0 -5.9zM1854.8 770.9l3.0 10.9 -10.8 3.0 -3.0 -10.9zM1864.1 801.9l4.8 17.2 -11.3 3.2 -4.8 -17.2zM1846.4 827.6l4.2 11.7 -10.2 3.6 -4.2 -11.7zM1851.1 840.8l6.1 17.1 -13.7 4.9 -6.1 -17.1zM1862.2 871.8l4.3 12.1 -8.5 3.0 -4.3 -12.1zM1867.2 885.9l6.8 19.2 -11.7 4.2 -6.8 -19.2zM1869.8 819.1l3.9 11.0 -11.8 4.2 -3.9 -11.0zM1875.7 842.3l7.0 19.6 -9.6 3.4 -7.0 -19.6zM1884.7 863.3l7.3 20.4 -11.0 3.9 -7.3 -20.4zM1772.0 495.9l3.6 20.2 -8.1 1.4 -3.6 -20.2zM1775.8 516.7l3.8 21.1 -10.5 1.9 -3.8 -21.1zM1782.3 553.2l4.8 26.7 -9.6 1.7 -4.8 -26.7zM1799.7 517.5l2.7 15.2 -10.8 1.9 -2.7 -15.2zM1791.0 601.6l3.9 19.4 -7.3 1.5 -3.9 -19.4zM1794.9 621.0l4.1 20.5 -13.5 2.7 -4.1 -20.5zM1799.1 641.9l3.0 15.0 -9.4 1.9 -3.0 -15.0zM1812.0 705.0l5.7 20.4 -12.6 3.5 -5.7 -20.4zM1824.2 749.0l3.4 12.3 -12.6 3.5 -3.4 -12.3zM1827.2 837.8l22.2 -5.5 3.0 11.9 -22.2 5.5zM1942.9 791.0l15.3 -7.0 5.6 12.4 -15.3 7.0zM1935.5 765.5l12.3 -5.6 4.9 10.8 -12.3 5.6zM1949.0 758.3l15.3 -7.0 5.3 11.7 -15.3 7.0zM2002.1 754.9l11.4 -9.9 7.2 8.3 -11.4 9.9zM2099.2 727.7l19.1 1.6 -1.0 12.0 -19.1 -1.6zM2120.5 729.6l13.2 1.1 -0.9 10.7 -13.2 -1.1zM2090.8 697.4l20.8 1.8 -1.3 15.0 -20.8 -1.8zM2174.6 736.1l22.1 3.1 -1.5 11.0 -22.1 -3.1zM2197.2 739.2l18.9 2.6 -1.8 12.8 -18.9 -2.6zM2174.5 708.5l18.3 2.5 -1.8 12.7 -18.3 -2.5zM2192.7 714.8l17.7 2.5 -1.2 9.0 -17.7 -2.5zM2212.5 713.0l23.7 3.3 -1.9 13.5 -23.7 -3.3zM2238.2 743.8l10.5 -1.1 1.6 14.8 -10.5 1.1zM2266.4 713.4l20.5 -2.2 1.4 12.7 -20.5 2.2zM2288.9 711.4l21.2 -2.3 1.3 12.3 -21.2 2.3zM2338.3 728.3l12.2 -4.2 3.1 8.9 -12.2 4.2zM1544.3 912.4l24.4 -5.4 1.6 7.3 -24.4 5.4zM1555.9 887.9l23.5 -5.2 1.5 6.9 -23.5 5.2zM1608.1 872.7l20.5 -4.5 2.3 10.4 -20.5 4.5zM1781.3 820.4l15.6 -3.9 3.3 13.1 -15.6 3.9zM1799.7 821.8l22.2 -5.5 1.9 7.5 -22.2 5.5zM2367.5 719.3l20.3 -2.6 1.3 10.2 -20.3 2.6zM2428.8 711.4l20.0 -2.6 1.2 9.2 -20.0 2.6zM2335.1 775.5l1.5 11.7 -12.1 1.6 -1.5 -11.7zM2355.3 725.9l2.1 16.7 -11.9 1.5 -2.1 -16.7zM2363.7 767.9l2.2 16.9 -14.8 1.9 -2.2 -16.9zM2339.2 801.3l5.8 16.3 -9.6 3.4 -5.8 -16.3zM2345.7 819.4l4.9 13.9 -14.6 5.2 -4.9 -13.9zM2356.6 847.3l13.4 19.1 -7.6 5.4 -13.4 -19.1zM2380.2 830.4l13.6 19.3 -12.0 8.4 -13.6 -19.3zM2420.3 878.0l11.1 9.4 -9.3 10.9 -11.1 -9.4zM2101.8 634.5l15.5 -1.5 1.3 14.0 -15.5 1.5zM2233.1 581.1l13.3 -2.5 2.6 13.7 -13.3 2.5zM2038.3 638.8l16.9 -4.5 4.6 17.2 -16.9 4.5zM1940.3 627.4l9.3 -2.5 2.6 9.5 -9.3 2.5zM2437.8 648.8l7.6 -0.2 0.2 8.1 -7.6 0.2zM2392.4 613.9l8.3 -0.2 0.2 9.1 -8.3 0.2zM2375.2 570.7l8.4 -0.1 0.1 12.0 -8.4 0.1zM2518.9 647.8l14.4 -1.5 1.1 10.7 -14.4 1.5zM2368.9 604.0l14.3 -2.3 1.5 9.7 -14.3 2.3zM1873.4 744.8l13.3 -4.6 2.7 7.9 -13.3 4.6zM1916.6 845.7l14.4 -6.4 4.1 9.3 -14.4 6.4zM2084.0 844.7l11.9 -3.9 4.6 13.7 -11.9 3.9zM2189.2 858.5l11.5 -4.6 6.6 16.5 -11.5 4.6zM2085.5 746.2l16.6 -7.3 5.6 12.7 -16.6 7.3zM2291.2 868.7l11.1 -3.5 5.2 16.3 -11.1 3.5zM1991.2 853.5l12.6 -4.8 4.1 10.7 -12.6 4.8zM1918.1 881.1l8.5 -2.6 3.7 11.8 -8.5 2.6zM1975.5 862.3l8.5 -2.2 4.4 17.5 -8.5 2.2zM2535.3 884.6l11.6 1.6 -2.4 16.8 -11.6 -1.6zM2435.3 749.0l11.9 2.3 -1.8 9.2 -11.9 -2.3zM2459.9 744.5l12.9 2.8 -3.7 17.4 -12.9 -2.8zM2369.2 879.5l14.2 2.2 -2.7 16.9 -14.2 -2.2zM2452.2 718.1l15.9 0.5 -0.5 15.8 -15.9 -0.5zM1844.9 730.3l5.9 -1.4 2.0 8.1 -5.9 1.4zM1851.2 720.2l5.8 -0.7 0.6 5.2 -5.8 0.7zM1450.9 646.1l17.5 -3.1 2.2 12.5 -17.5 3.1zM1711.0 755.5l16.9 -4.6 4.4 16.2 -16.9 4.6zM1675.2 671.9l9.0 -3.4 4.7 12.4 -9.0 3.4zM1365.3 554.5l15.3 -5.0 4.7 14.2 -15.3 5.0z" fill="#fdf3e6" stroke="#f9e6cd" stroke-width=".7"/>
<polygon points="1534.0,640.0 1549.0,637.0 1593.0,820.0 1578.0,825.0" fill="#eeeeef" />
<polygon points="1593.0,815.0 1680.0,791.0 1683.0,803.0 1595.0,827.0" fill="#eeeeef" />
<polygon points="1540.0,610.0 1552.0,607.0 1558.0,636.0 1546.0,640.0" fill="#eeeeef" />
<polygon points="1620.0,825.0 1660.0,808.0 1664.0,818.0 1625.0,836.0" fill="#eeeeef" />
<polygon points="1350.0,806.0 1471.0,774.0 1474.0,784.0 1352.0,820.0" fill="#fdf2e4" />
<polygon points="1359.0,849.0 1481.0,815.0 1483.0,828.0 1362.0,864.0" fill="#fdf2e4" />
<polygon points="1514.0,872.0 1570.0,852.0 1578.0,876.0 1522.0,896.0" fill="#fdf2e4" />
<polygon points="1533.0,572.0 1580.0,556.0 1584.0,568.0 1537.0,584.0" fill="#fdf2e4" />
<polygon points="1686.0,540.0 1706.0,534.0 1718.0,578.0 1698.0,584.0" fill="#fdf2e4" />
<polygon points="1700.0,592.0 1742.0,578.0 1746.0,592.0 1704.0,606.0" fill="#fdf2e4" />
<polygon points="1602.0,700.0 1622.0,694.0 1634.0,742.0 1660.0,736.0 1664.0,750.0 1622.0,762.0" fill="#fdf2e4" />
<polygon points="1640.0,700.0 1660.0,694.0 1674.0,752.0 1654.0,758.0" fill="#fdf2e4" />
<polygon points="2412.0,722.0 2530.0,716.0 2534.0,760.0 2500.0,762.0 2502.0,830.0 2470.0,832.0 2468.0,770.0 2416.0,772.0" fill="#eeeeef" />
<polygon points="2150.0,742.0 2235.0,752.0 2234.0,768.0 2150.0,758.0" fill="#fdf2e4" />
<polygon points="2352.0,720.0 2408.0,716.0 2412.0,780.0 2372.0,784.0 2370.0,760.0 2354.0,760.0" fill="#fdf2e4" />
<polygon points="2400.0,796.0 2440.0,794.0 2444.0,850.0 2404.0,852.0" fill="#fdf2e4" />
<path d="M1413.0 592.0 L1450.0 665.0 L1500.0 657.0 L1512.0 660.0 L1520.0 675.0 L1524.0 688.0 L1532.0 692.0 L1580.0 676.0 L1620.0 660.0 L1638.0 654.0 L1655.0 636.0 L1690.0 618.0 L1745.0 600.0 L1778.0 588.0 L1784.0 570.0 L1780.0 530.0 L1786.0 503.0 L1845.0 497.0 L1862.0 494.0" fill="none" stroke="#58a868" stroke-width="1.2" stroke-linecap="round" stroke-linejoin="round" />
<path d="M1347.0 600.0 L1416.0 580.0 L1500.0 580.0 L1560.0 563.0 L1640.0 535.0 L1705.0 512.0 L1760.0 498.0 L1775.0 494.0" fill="none" stroke="#e8eaed" stroke-width="8.6" stroke-linecap="round" stroke-linejoin="round" />
<path d="M1347.0 600.0 L1416.0 580.0 L1500.0 580.0 L1560.0 563.0 L1640.0 535.0 L1705.0 512.0 L1760.0 498.0 L1775.0 494.0" fill="none" stroke="#fff" stroke-width="7" stroke-linecap="round" stroke-linejoin="round" />
<path d="M1347.0 498.0 L1380.0 540.0 L1416.0 578.0" fill="none" stroke="#e8eaed" stroke-width="7.6" stroke-linecap="round" stroke-linejoin="round" />
<path d="M1347.0 498.0 L1380.0 540.0 L1416.0 578.0" fill="none" stroke="#fff" stroke-width="6" stroke-linecap="round" stroke-linejoin="round" />
<path d="M1500.0 580.0 L1525.0 670.0 L1554.0 752.0 L1583.0 850.0 L1598.0 906.0" fill="none" stroke="#e8eaed" stroke-width="6.6" stroke-linecap="round" stroke-linejoin="round" />
<path d="M1500.0 580.0 L1525.0 670.0 L1554.0 752.0 L1583.0 850.0 L1598.0 906.0" fill="none" stroke="#fff" stroke-width="5" stroke-linecap="round" stroke-linejoin="round" />
<path d="M1640.0 535.0 L1660.0 600.0 L1680.0 690.0 L1700.0 760.0 L1712.0 800.0" fill="none" stroke="#e8eaed" stroke-width="5.6" stroke-linecap="round" stroke-linejoin="round" />
<path d="M1640.0 535.0 L1660.0 600.0 L1680.0 690.0 L1700.0 760.0 L1712.0 800.0" fill="none" stroke="#fff" stroke-width="4" stroke-linecap="round" stroke-linejoin="round" />
<path d="M1625.0 607.0 L1690.0 585.0 L1745.0 568.0" fill="none" stroke="#e8eaed" stroke-width="6.6" stroke-linecap="round" stroke-linejoin="round" />
<path d="M1625.0 607.0 L1690.0 585.0 L1745.0 568.0" fill="none" stroke="#fff" stroke-width="5" stroke-linecap="round" stroke-linejoin="round" />
<path d="M1620.0 494.0 L1628.0 520.0" fill="none" stroke="#e8eaed" stroke-width="5.6" stroke-linecap="round" stroke-linejoin="round" />
<path d="M1620.0 494.0 L1628.0 520.0" fill="none" stroke="#fff" stroke-width="4" stroke-linecap="round" stroke-linejoin="round" />
<path d="M1720.0 494.0 L1730.0 510.0" fill="none" stroke="#e8eaed" stroke-width="5.6" stroke-linecap="round" stroke-linejoin="round" />
<path d="M1720.0 494.0 L1730.0 510.0" fill="none" stroke="#fff" stroke-width="4" stroke-linecap="round" stroke-linejoin="round" />
<path d="M1347.0 668.0 L1440.0 652.0 L1458.0 660.0 L1462.0 690.0 L1440.0 710.0 L1347.0 740.0" fill="none" stroke="#e8eaed" stroke-width="5.6" stroke-linecap="round" stroke-linejoin="round" />
<path d="M1347.0 668.0 L1440.0 652.0 L1458.0 660.0 L1462.0 690.0 L1440.0 710.0 L1347.0 740.0" fill="none" stroke="#fff" stroke-width="4" stroke-linecap="round" stroke-linejoin="round" />
<path d="M1347.0 712.0 L1420.0 700.0" fill="none" stroke="#e8eaed" stroke-width="4.6" stroke-linecap="round" stroke-linejoin="round" />
<path d="M1347.0 712.0 L1420.0 700.0" fill="none" stroke="#fff" stroke-width="3" stroke-linecap="round" stroke-linejoin="round" />
<path d="M1347.0 780.0 L1480.0 740.0 L1540.0 745.0" fill="none" stroke="#e8eaed" stroke-width="6.6" stroke-linecap="round" stroke-linejoin="round" />
<path d="M1347.0 780.0 L1480.0 740.0 L1540.0 745.0" fill="none" stroke="#fff" stroke-width="5" stroke-linecap="round" stroke-linejoin="round" />
<path d="M1347.0 842.0 L1480.0 800.0 L1560.0 790.0" fill="none" stroke="#e8eaed" stroke-width="6.6" stroke-linecap="round" stroke-linejoin="round" />
<path d="M1347.0 842.0 L1480.0 800.0 L1560.0 790.0" fill="none" stroke="#fff" stroke-width="5" stroke-linecap="round" stroke-linejoin="round" />
<path d="M1400.0 906.0 L1404.0 870.0 L1420.0 856.0 L1500.0 846.0 L1600.0 830.0" fill="none" stroke="#e8eaed" stroke-width="5.6" stroke-linecap="round" stroke-linejoin="round" />
<path d="M1400.0 906.0 L1404.0 870.0 L1420.0 856.0 L1500.0 846.0 L1600.0 830.0" fill="none" stroke="#fff" stroke-width="4" stroke-linecap="round" stroke-linejoin="round" />
<path d="M1462.0 690.0 L1480.0 740.0 L1500.0 830.0 L1515.0 906.0" fill="none" stroke="#e8eaed" stroke-width="5.6" stroke-linecap="round" stroke-linejoin="round" />
<path d="M1462.0 690.0 L1480.0 740.0 L1500.0 830.0 L1515.0 906.0" fill="none" stroke="#fff" stroke-width="4" stroke-linecap="round" stroke-linejoin="round" />
<path d="M1535.0 718.0 L1552.0 705.0 L1580.0 690.0" fill="none" stroke="#e8eaed" stroke-width="5.6" stroke-linecap="round" stroke-linejoin="round" />
<path d="M1535.0 718.0 L1552.0 705.0 L1580.0 690.0" fill="none" stroke="#fff" stroke-width="4" stroke-linecap="round" stroke-linejoin="round" />
<path d="M1548.0 745.0 L1580.0 735.0 L1612.0 700.0" fill="none" stroke="#e8eaed" stroke-width="5.6" stroke-linecap="round" stroke-linejoin="round" />
<path d="M1548.0 745.0 L1580.0 735.0 L1612.0 700.0" fill="none" stroke="#fff" stroke-width="4" stroke-linecap="round" stroke-linejoin="round" />
<path d="M1560.0 800.0 L1640.0 786.0 L1720.0 760.0 L1790.0 735.0" fill="none" stroke="#e8eaed" stroke-width="6.6" stroke-linecap="round" stroke-linejoin="round" />
<path d="M1560.0 800.0 L1640.0 786.0 L1720.0 760.0 L1790.0 735.0" fill="none" stroke="#fff" stroke-width="5" stroke-linecap="round" stroke-linejoin="round" />
<path d="M1745.0 690.0 L1760.0 745.0 L1775.0 800.0" fill="none" stroke="#e8eaed" stroke-width="5.6" stroke-linecap="round" stroke-linejoin="round" />
<path d="M1745.0 690.0 L1760.0 745.0 L1775.0 800.0" fill="none" stroke="#fff" stroke-width="4" stroke-linecap="round" stroke-linejoin="round" />
<path d="M1690.0 710.0 L1760.0 690.0 L1813.0 692.0" fill="none" stroke="#e8eaed" stroke-width="6.6" stroke-linecap="round" stroke-linejoin="round" />
<path d="M1690.0 710.0 L1760.0 690.0 L1813.0 692.0" fill="none" stroke="#fff" stroke-width="5" stroke-linecap="round" stroke-linejoin="round" />
<path d="M1740.0 803.0 L1830.0 777.0" fill="none" stroke="#e8eaed" stroke-width="6.6" stroke-linecap="round" stroke-linejoin="round" />
<path d="M1740.0 803.0 L1830.0 777.0" fill="none" stroke="#fff" stroke-width="5" stroke-linecap="round" stroke-linejoin="round" />
<path d="M1700.0 870.0 L1760.0 850.0" fill="none" stroke="#e8eaed" stroke-width="5.6" stroke-linecap="round" stroke-linejoin="round" />
<path d="M1700.0 870.0 L1760.0 850.0" fill="none" stroke="#fff" stroke-width="4" stroke-linecap="round" stroke-linejoin="round" />
<path d="M1788.0 512.0 L1870.0 526.0 L2010.0 554.0 L2140.0 567.0 L2190.0 592.0 L2279.0 617.0 L2320.0 643.0 L2343.0 700.0 L2350.0 714.0" fill="none" stroke="#e8eaed" stroke-width="8.6" stroke-linecap="round" stroke-linejoin="round" />
<path d="M1788.0 512.0 L1870.0 526.0 L2010.0 554.0 L2140.0 567.0 L2190.0 592.0 L2279.0 617.0 L2320.0 643.0 L2343.0 700.0 L2350.0 714.0" fill="none" stroke="#fff" stroke-width="7" stroke-linecap="round" stroke-linejoin="round" />
<path d="M1858.0 537.0 L1884.0 668.0 L1893.0 713.0 L1898.0 747.0" fill="none" stroke="#e8eaed" stroke-width="5.6" stroke-linecap="round" stroke-linejoin="round" />
<path d="M1858.0 537.0 L1884.0 668.0 L1893.0 713.0 L1898.0 747.0" fill="none" stroke="#fff" stroke-width="4" stroke-linecap="round" stroke-linejoin="round" />
<path d="M2026.0 494.0 L2029.0 554.0" fill="none" stroke="#e8eaed" stroke-width="6.6" stroke-linecap="round" stroke-linejoin="round" />
<path d="M2026.0 494.0 L2029.0 554.0" fill="none" stroke="#fff" stroke-width="5" stroke-linecap="round" stroke-linejoin="round" />
<path d="M2010.0 554.0 L2035.0 635.0 L2006.0 723.0" fill="none" stroke="#e8eaed" stroke-width="6.6" stroke-linecap="round" stroke-linejoin="round" />
<path d="M2010.0 554.0 L2035.0 635.0 L2006.0 723.0" fill="none" stroke="#fff" stroke-width="5" stroke-linecap="round" stroke-linejoin="round" />
<path d="M2122.0 503.0 L2095.0 558.0" fill="none" stroke="#e8eaed" stroke-width="6.6" stroke-linecap="round" stroke-linejoin="round" />
<path d="M2122.0 503.0 L2095.0 558.0" fill="none" stroke="#fff" stroke-width="5" stroke-linecap="round" stroke-linejoin="round" />
<path d="M2193.0 494.0 L2192.0 592.0" fill="none" stroke="#e8eaed" stroke-width="6.6" stroke-linecap="round" stroke-linejoin="round" />
<path d="M2193.0 494.0 L2192.0 592.0" fill="none" stroke="#fff" stroke-width="5" stroke-linecap="round" stroke-linejoin="round" />
<path d="M2275.0 494.0 L2257.0 524.0 L2261.0 558.0 L2284.0 618.0" fill="none" stroke="#e8eaed" stroke-width="6.6" stroke-linecap="round" stroke-linejoin="round" />
<path d="M2275.0 494.0 L2257.0 524.0 L2261.0 558.0 L2284.0 618.0" fill="none" stroke="#fff" stroke-width="5" stroke-linecap="round" stroke-linejoin="round" />
<path d="M2295.0 494.0 L2302.0 564.0 L2320.0 643.0" fill="none" stroke="#e8eaed" stroke-width="6.6" stroke-linecap="round" stroke-linejoin="round" />
<path d="M2295.0 494.0 L2302.0 564.0 L2320.0 643.0" fill="none" stroke="#fff" stroke-width="5" stroke-linecap="round" stroke-linejoin="round" />
<path d="M2435.0 494.0 L2430.0 591.0 L2426.0 700.0" fill="none" stroke="#e8eaed" stroke-width="6.6" stroke-linecap="round" stroke-linejoin="round" />
<path d="M2435.0 494.0 L2430.0 591.0 L2426.0 700.0" fill="none" stroke="#fff" stroke-width="5" stroke-linecap="round" stroke-linejoin="round" />
<path d="M2430.0 591.0 L2473.0 544.0 L2541.0 520.0" fill="none" stroke="#e8eaed" stroke-width="7.6" stroke-linecap="round" stroke-linejoin="round" />
<path d="M2430.0 591.0 L2473.0 544.0 L2541.0 520.0" fill="none" stroke="#fff" stroke-width="6" stroke-linecap="round" stroke-linejoin="round" />
<path d="M1844.0 770.0 L1985.0 741.0 L2010.0 733.0" fill="none" stroke="#e8eaed" stroke-width="6.6" stroke-linecap="round" stroke-linejoin="round" />
<path d="M1844.0 770.0 L1985.0 741.0 L2010.0 733.0" fill="none" stroke="#fff" stroke-width="5" stroke-linecap="round" stroke-linejoin="round" />
<path d="M2018.0 737.0 L2039.0 906.0" fill="none" stroke="#e8eaed" stroke-width="6.6" stroke-linecap="round" stroke-linejoin="round" />
<path d="M2018.0 737.0 L2039.0 906.0" fill="none" stroke="#fff" stroke-width="5" stroke-linecap="round" stroke-linejoin="round" />
<path d="M2328.0 780.0 L2234.0 822.0 L2140.0 860.0 L2130.0 872.0 L2035.0 876.0 L1929.0 906.0" fill="none" stroke="#e8eaed" stroke-width="7.6" stroke-linecap="round" stroke-linejoin="round" />
<path d="M2328.0 780.0 L2234.0 822.0 L2140.0 860.0 L2130.0 872.0 L2035.0 876.0 L1929.0 906.0" fill="none" stroke="#fff" stroke-width="6" stroke-linecap="round" stroke-linejoin="round" />
<path d="M2232.0 830.0 L2228.0 906.0" fill="none" stroke="#e8eaed" stroke-width="5.6" stroke-linecap="round" stroke-linejoin="round" />
<path d="M2232.0 830.0 L2228.0 906.0" fill="none" stroke="#fff" stroke-width="4" stroke-linecap="round" stroke-linejoin="round" />
<path d="M2260.0 906.0 L2266.0 870.0 L2300.0 862.0 L2318.0 906.0" fill="none" stroke="#e8eaed" stroke-width="5.6" stroke-linecap="round" stroke-linejoin="round" />
<path d="M2260.0 906.0 L2266.0 870.0 L2300.0 862.0 L2318.0 906.0" fill="none" stroke="#fff" stroke-width="4" stroke-linecap="round" stroke-linejoin="round" />
<path d="M2360.0 800.0 L2450.0 797.0 L2460.0 850.0 L2541.0 842.0" fill="none" stroke="#e8eaed" stroke-width="5.6" stroke-linecap="round" stroke-linejoin="round" />
<path d="M2360.0 800.0 L2450.0 797.0 L2460.0 850.0 L2541.0 842.0" fill="none" stroke="#fff" stroke-width="4" stroke-linecap="round" stroke-linejoin="round" />
<path d="M1778.0 494.0 L1797.0 600.0 L1817.0 700.0 L1851.0 822.0 L1881.0 906.0" fill="none" stroke="#e8eaed" stroke-width="11.6" stroke-linecap="round" stroke-linejoin="round" />
<path d="M1540.0 906.0 L1640.0 884.0 L1740.0 852.0 L1853.0 824.0 L1976.0 768.0 L2006.0 742.0 L2020.0 727.0 L2070.0 718.0 L2140.0 724.0 L2234.0 737.0 L2317.0 728.0 L2352.0 716.0" fill="none" stroke="#e8eaed" stroke-width="13.6" stroke-linecap="round" stroke-linejoin="round" />
<path d="M2352.0 716.0 L2446.0 704.0 L2541.0 701.0" fill="none" stroke="#e8eaed" stroke-width="9.6" stroke-linecap="round" stroke-linejoin="round" />
<path d="M2336.0 726.0 L2345.0 796.0 L2361.0 841.0 L2387.0 878.0 L2420.0 906.0" fill="none" stroke="#e8eaed" stroke-width="13.6" stroke-linecap="round" stroke-linejoin="round" />
<path d="M1778.0 494.0 L1797.0 600.0 L1817.0 700.0 L1851.0 822.0 L1881.0 906.0" fill="none" stroke="#fff" stroke-width="10" stroke-linecap="round" stroke-linejoin="round" />
<path d="M1540.0 906.0 L1640.0 884.0 L1740.0 852.0 L1853.0 824.0 L1976.0 768.0 L2006.0 742.0 L2020.0 727.0 L2070.0 718.0 L2140.0 724.0 L2234.0 737.0 L2317.0 728.0 L2352.0 716.0" fill="none" stroke="#fff" stroke-width="12" stroke-linecap="round" stroke-linejoin="round" />
<path d="M2352.0 716.0 L2446.0 704.0 L2541.0 701.0" fill="none" stroke="#fff" stroke-width="8" stroke-linecap="round" stroke-linejoin="round" />
<path d="M2336.0 726.0 L2345.0 796.0 L2361.0 841.0 L2387.0 878.0 L2420.0 906.0" fill="none" stroke="#fff" stroke-width="12" stroke-linecap="round" stroke-linejoin="round" />
<text x="1377" y="542" font-size="10.5" fill="#5b5f64" text-anchor="middle" stroke="#fff" stroke-width="2.4" paint-order="stroke" stroke-linejoin="round" transform="rotate(58 1377 542)">Édesanyák útja</text>
<text x="1379" y="586" font-size="10.5" fill="#5b5f64" text-anchor="middle" stroke="#fff" stroke-width="2.4" paint-order="stroke" stroke-linejoin="round" transform="rotate(-14 1379 586)">Ifjúság útja</text>
<text x="1500" y="583" font-size="10.5" fill="#5b5f64" text-anchor="start" stroke="#fff" stroke-width="2.4" paint-order="stroke" stroke-linejoin="round" transform="rotate(-10 1500 583)">Alkotmány u.</text>
<text x="1588" y="551" font-size="10.5" fill="#5b5f64" text-anchor="middle" stroke="#fff" stroke-width="2.4" paint-order="stroke" stroke-linejoin="round" transform="rotate(-19 1588 551)">Alkotmány u.</text>
<text x="1636" y="516" font-size="10.5" fill="#5b5f64" text-anchor="middle" stroke="#fff" stroke-width="2.4" paint-order="stroke" stroke-linejoin="round" transform="rotate(72 1636 516)">alja u.</text>
<text x="1687" y="592" font-size="10.5" fill="#5b5f64" text-anchor="middle" stroke="#fff" stroke-width="2.4" paint-order="stroke" stroke-linejoin="round" transform="rotate(-19 1687 592)">Zója u.</text>
<text x="1529" y="690" font-size="10.5" fill="#5b5f64" text-anchor="middle" stroke="#fff" stroke-width="2.4" paint-order="stroke" stroke-linejoin="round" transform="rotate(77 1529 690)">Rókus u.</text>
<text x="1446" y="742" font-size="10.5" fill="#5b5f64" text-anchor="middle" stroke="#fff" stroke-width="2.4" paint-order="stroke" stroke-linejoin="round" transform="rotate(77 1446 742)">Rókus stny.</text>
<text x="1403" y="788" font-size="10.5" fill="#5b5f64" text-anchor="middle" stroke="#fff" stroke-width="2.4" paint-order="stroke" stroke-linejoin="round" transform="rotate(-15 1403 788)">Veres Péter u.</text>
<text x="1496" y="842" font-size="10.5" fill="#5b5f64" text-anchor="middle" stroke="#fff" stroke-width="2.4" paint-order="stroke" stroke-linejoin="round" transform="rotate(79 1496 842)">Váci Mihály u.</text>
<text x="1546" y="806" font-size="10.5" fill="#5b5f64" text-anchor="middle" stroke="#fff" stroke-width="2.4" paint-order="stroke" stroke-linejoin="round" transform="rotate(-45 1546 806)">Rókus u.</text>
<text x="1700" y="818" font-size="10.5" fill="#5b5f64" text-anchor="middle" stroke="#fff" stroke-width="2.4" paint-order="stroke" stroke-linejoin="round" transform="rotate(-17 1700 818)">Nagy Jenő u.</text>
<text x="1350" y="704" font-size="11" fill="#5b5f64" text-anchor="start" stroke="#fff" stroke-width="2.4" paint-order="stroke" stroke-linejoin="round">al</text>
<text x="1588" y="893" font-size="12" fill="#3c4043" text-anchor="middle" stroke="#fff" stroke-width="2.4" paint-order="stroke" stroke-linejoin="round" transform="rotate(-8 1588 893)">Szigeti út</text>
<text x="1673" y="882" font-size="12" fill="#3c4043" text-anchor="middle" stroke="#fff" stroke-width="2.4" paint-order="stroke" stroke-linejoin="round" transform="rotate(-12 1673 882)">Hungária u.</text>
<text x="1791" y="702" font-size="10.5" fill="#5b5f64" text-anchor="middle" stroke="#fff" stroke-width="2.4" paint-order="stroke" stroke-linejoin="round" transform="rotate(-16 1791 702)">Őz u.</text>
<text x="1805" y="653" font-size="13" fill="#3c4043" text-anchor="middle" textLength="106" lengthAdjust="spacingAndGlyphs" stroke="#fff" stroke-width="2.4" paint-order="stroke" stroke-linejoin="round" transform="rotate(80 1805 653)">Petőfi Sándor utca</text>
<text x="1869" y="868" font-size="10.5" fill="#5b5f64" text-anchor="middle" stroke="#fff" stroke-width="2.4" paint-order="stroke" stroke-linejoin="round" transform="rotate(75 1869 868)">Petőfi Sándor u</text>
<text x="1874" y="637" font-size="10.5" fill="#5b5f64" text-anchor="middle" stroke="#fff" stroke-width="2.4" paint-order="stroke" stroke-linejoin="round" transform="rotate(80 1874 637)">Alajos u.</text>
<text x="2028" y="675" font-size="10.5" fill="#5b5f64" text-anchor="middle" stroke="#fff" stroke-width="2.4" paint-order="stroke" stroke-linejoin="round" transform="rotate(-82 2028 675)">Kóczián Sándor u.</text>
<text x="1877" y="765" font-size="10.5" fill="#5b5f64" text-anchor="middle" stroke="#fff" stroke-width="2.4" paint-order="stroke" stroke-linejoin="round" transform="rotate(-16 1877 765)">Nagy Jenő u.</text>
<text x="1940" y="786" font-size="13" fill="#3c4043" text-anchor="middle" textLength="64" lengthAdjust="spacingAndGlyphs" stroke="#fff" stroke-width="2.4" paint-order="stroke" stroke-linejoin="round" transform="rotate(-27 1940 786)">Hungária u.</text>
<text x="2027" y="812" font-size="10.5" fill="#5b5f64" text-anchor="middle" stroke="#fff" stroke-width="2.4" paint-order="stroke" stroke-linejoin="round" transform="rotate(84 2027 812)">Jászai Mari u.</text>
<text x="2110" y="876" font-size="10.5" fill="#5b5f64" text-anchor="middle" stroke="#fff" stroke-width="2.4" paint-order="stroke" stroke-linejoin="round" transform="rotate(-6 2110 876)">Garay János u.</text>
<text x="1948" y="897" font-size="10.5" fill="#5b5f64" text-anchor="middle" stroke="#fff" stroke-width="2.4" paint-order="stroke" stroke-linejoin="round" transform="rotate(-13 1948 897)">János u.</text>
<text x="2036" y="905" font-size="10.5" fill="#5b5f64" text-anchor="middle" stroke="#fff" stroke-width="2.4" paint-order="stroke" stroke-linejoin="round" transform="rotate(88 2036 905)">Jás</text>
<text x="2108" y="900" font-size="10.5" fill="#5b5f64" text-anchor="middle" stroke="#fff" stroke-width="2.4" paint-order="stroke" stroke-linejoin="round" transform="rotate(88 2108 900)">Hőgy</text>
<text x="2136" y="579" font-size="10.5" fill="#5b5f64" text-anchor="middle" stroke="#fff" stroke-width="2.4" paint-order="stroke" stroke-linejoin="round" transform="rotate(15 2136 579)">Alkotmány u.</text>
<text x="2138" y="729" font-size="13" fill="#3c4043" text-anchor="middle" textLength="64" lengthAdjust="spacingAndGlyphs" stroke="#fff" stroke-width="2.4" paint-order="stroke" stroke-linejoin="round" transform="rotate(8 2138 729)">Hungária u.</text>
<text x="2276" y="736" font-size="13" fill="#3c4043" text-anchor="middle" textLength="64" lengthAdjust="spacingAndGlyphs" stroke="#fff" stroke-width="2.4" paint-order="stroke" stroke-linejoin="round" transform="rotate(-6 2276 736)">Hungária u.</text>
<text x="2326" y="768" font-size="13" fill="#3c4043" text-anchor="middle" font-weight="bold" textLength="58" lengthAdjust="spacingAndGlyphs" stroke="#fff" stroke-width="2.4" paint-order="stroke" stroke-linejoin="round" transform="rotate(76 2326 768)">Rákóczi út</text>
<text x="2408" y="711" font-size="10.5" fill="#5b5f64" text-anchor="middle" stroke="#fff" stroke-width="2.4" paint-order="stroke" stroke-linejoin="round" transform="rotate(-5 2408 711)">Ferencesek utcája</text>
<text x="2334" y="657" font-size="10.5" fill="#5b5f64" text-anchor="middle" stroke="#fff" stroke-width="2.4" paint-order="stroke" stroke-linejoin="round" transform="rotate(73 2334 657)">Alkotmány u.</text>
<text x="2193" y="526" font-size="10.5" fill="#5b5f64" text-anchor="middle" stroke="#fff" stroke-width="2.4" paint-order="stroke" stroke-linejoin="round" transform="rotate(-87 2193 526)">Forbát Alfréd</text>
<text x="2262" y="510" font-size="10.5" fill="#5b5f64" text-anchor="middle" stroke="#fff" stroke-width="2.4" paint-order="stroke" stroke-linejoin="round" transform="rotate(-58 2262 510)">Sánc u.</text>
<text x="2296" y="528" font-size="10.5" fill="#5b5f64" text-anchor="middle" stroke="#fff" stroke-width="2.4" paint-order="stroke" stroke-linejoin="round" transform="rotate(80 2296 528)">imó György u.</text>
<text x="2432" y="548" font-size="10.5" fill="#6b7f8c" text-anchor="middle" stroke="#fff" stroke-width="2.4" paint-order="stroke" stroke-linejoin="round" transform="rotate(-88 2432 548)">Szent István</text>
<text x="2131" y="497" font-size="10.5" fill="#5b5f64" text-anchor="middle" stroke="#fff" stroke-width="2.4" paint-order="stroke" stroke-linejoin="round" transform="rotate(-60 2131 497)">Táb</text>
<text x="2147" y="899" font-size="10.5" fill="#5b5f64" text-anchor="start" stroke="#fff" stroke-width="2.4" paint-order="stroke" stroke-linejoin="round" transform="rotate(-12 2147 899)">ános u.</text>
<text x="1589" y="624" font-size="13.3" fill="#5d7787" text-anchor="middle" textLength="148" lengthAdjust="spacingAndGlyphs" stroke="#fff" stroke-width="2.4" paint-order="stroke" stroke-linejoin="round">Pécsi Tudományegyetem…</text>
<text x="1654" y="669" font-size="13.3" fill="#5d7787" text-anchor="middle" textLength="130" lengthAdjust="spacingAndGlyphs" stroke="#fff" stroke-width="2.4" paint-order="stroke" stroke-linejoin="round">PTE Gyakorló Általános</text>
<text x="1656" y="682" font-size="13.3" fill="#5d7787" text-anchor="middle" textLength="127" lengthAdjust="spacingAndGlyphs" stroke="#fff" stroke-width="2.4" paint-order="stroke" stroke-linejoin="round">Iskola, Gimnázium és…</text>
<text x="1689" y="753" font-size="13.3" fill="#5d7787" text-anchor="middle" textLength="131" lengthAdjust="spacingAndGlyphs" stroke="#fff" stroke-width="2.4" paint-order="stroke" stroke-linejoin="round">Csorba Győző Könyvtár</text>
<text x="1754" y="766" font-size="13.3" fill="#5d7787" text-anchor="end" textLength="102" lengthAdjust="spacingAndGlyphs" stroke="#fff" stroke-width="2.4" paint-order="stroke" stroke-linejoin="round">Várkonyi Nándor…</text>
<text x="1815" y="522" font-size="13.3" fill="#5d7787" text-anchor="middle" textLength="110" lengthAdjust="spacingAndGlyphs" stroke="#fff" stroke-width="2.4" paint-order="stroke" stroke-linejoin="round">Xavéri Szent Ferenc</text>
<text x="1804" y="535" font-size="13.3" fill="#5d7787" text-anchor="middle" textLength="131" lengthAdjust="spacingAndGlyphs" stroke="#fff" stroke-width="2.4" paint-order="stroke" stroke-linejoin="round">görögkatolikus templom</text>
<text x="1975" y="502" font-size="13.3" fill="#5d7787" text-anchor="middle" textLength="105" lengthAdjust="spacingAndGlyphs" stroke="#fff" stroke-width="2.4" paint-order="stroke" stroke-linejoin="round">PTE 1.sz. Gyakorló</text>
<text x="1983" y="515" font-size="13.3" fill="#5d7787" text-anchor="middle" textLength="89" lengthAdjust="spacingAndGlyphs" stroke="#fff" stroke-width="2.4" paint-order="stroke" stroke-linejoin="round">Általános Iskola</text>
<text x="2500" y="533" font-size="12.5" fill="#5d7787" text-anchor="middle" stroke="#fff" stroke-width="2.4" paint-order="stroke" stroke-linejoin="round">ent István</text>
<text x="2495" y="546" font-size="12.5" fill="#5d7787" text-anchor="middle" stroke="#fff" stroke-width="2.4" paint-order="stroke" stroke-linejoin="round">tér (Pécs)</text>
<text x="1999" y="768" font-size="12.5" fill="#2f9a57" text-anchor="middle" stroke="#fff" stroke-width="2.4" paint-order="stroke" stroke-linejoin="round">FitnexX</text>
<text x="2269" y="818.4" font-size="13.3" fill="#dc4a41" text-anchor="middle" textLength="81" lengthAdjust="spacingAndGlyphs" stroke="#fff" stroke-width="2.4" paint-order="stroke" stroke-linejoin="round">Megyei Kórház</text>
<text x="2345" y="849" font-size="13.3" fill="#1f99a6" text-anchor="end" textLength="141" lengthAdjust="spacingAndGlyphs" stroke="#fff" stroke-width="2.4" paint-order="stroke" stroke-linejoin="round">Jakováli Hasszán-dzsámi</text>
<text x="2345" y="861.5" font-size="13.3" fill="#1f99a6" text-anchor="end" textLength="59" lengthAdjust="spacingAndGlyphs" stroke="#fff" stroke-width="2.4" paint-order="stroke" stroke-linejoin="round">és minaret</text>
<path d="M1528.8 636.0 A8.2 8.2 0 1 1 1545.2 636.0 Q1544.4 643.8 1537.0 652.8 Q1529.6 643.8 1528.8 636.0Z" fill="#78909c" stroke="#fff" stroke-width="0.8"/>
<path d="M1532 635 L1537 632.4 L1542 635 L1537 637.6Z M1534 637 v2.2 q3 2 6 0 v-2.2 l-3 1.6z" fill="#fff"/>
<path d="M1688.8 696.0 A8.2 8.2 0 1 1 1705.2 696.0 Q1704.4 703.8 1697.0 712.8 Q1689.6 703.8 1688.8 696.0Z" fill="#78909c" stroke="#fff" stroke-width="0.8"/>
<path d="M1692 695 L1697 692.4 L1702 695 L1697 697.6Z M1694 697 v2.2 q3 2 6 0 v-2.2 l-3 1.6z" fill="#fff"/>
<path d="M1554.8 744.0 A8.2 8.2 0 1 1 1571.2 744.0 Q1570.4 751.8 1563.0 760.8 Q1555.6 751.8 1554.8 744.0Z" fill="#78909c" stroke="#fff" stroke-width="0.8"/>
<path d="M1558 743 L1563 740.4 L1568 743 L1563 745.6Z M1560 745 v2.2 q3 2 6 0 v-2.2 l-3 1.6z" fill="#fff"/>
<path d="M1998.2 529.0 A8.2 8.2 0 1 1 2014.6 529.0 Q2013.8 536.8 2006.4 545.8 Q1999.0 536.8 1998.2 529.0Z" fill="#78909c" stroke="#fff" stroke-width="0.8"/>
<path d="M2001.4 528 L2006.4 525.4 L2011.4 528 L2006.4 530.6Z M2003.4 530 v2.2 q3 2 6 0 v-2.2 l-3 1.6z" fill="#fff"/>
<path d="M1726.8 779.0 A8.2 8.2 0 1 1 1743.2 779.0 Q1742.4 786.8 1735.0 795.8 Q1727.6 786.8 1726.8 779.0Z" fill="#78909c" stroke="#fff" stroke-width="0.8"/>
<path d="M1730.5 775.5 h4 v6.5 h-4z M1735.5 775.5 h4 v6.5 h-4z" fill="#fff"/>
<path d="M1841.8 497.0 A8.2 8.2 0 1 1 1858.2 497.0 Q1857.4 504.8 1850.0 513.8 Q1842.6 504.8 1841.8 497.0Z" fill="#78909c" stroke="#fff" stroke-width="0.8"/>
<path d="M1849.2 492 h1.6 v2 h2 v1.6 h-2 v5 h-1.6 v-5 h-2 v-1.6 h2z" fill="#fff"/>
<path d="M1991.4 738.0 A7.6 7.6 0 1 1 2006.6 738.0 Q2005.8 745.2 1999.0 753.6 Q1992.2 745.2 1991.4 738.0Z" fill="#34a853" stroke="#fff" stroke-width="0.8"/>
<circle cx="1999" cy="738" r="2.7" fill="#fff"/>
<path d="M2281.7 787.5 A8.6 8.6 0 1 1 2298.9 787.5 Q2298.0 795.7 2290.3 805.1 Q2282.6 795.7 2281.7 787.5Z" fill="#ea4335" stroke="#fff" stroke-width="0.8"/>
<text x="2290.3" y="792" font-size="12" font-weight="bold" fill="#fff" text-anchor="middle">H</text>
<path d="M2317.0 818.0 A8 8 0 1 1 2333.0 818.0 Q2332.2 825.6 2325.0 834.4 Q2317.8 825.6 2317.0 818.0Z" fill="#12b5cb" stroke="#fff" stroke-width="0.8"/>
<path d="M2320.5 816.2 L2325 813.4 L2329.5 816.2 v1 h-9z M2321.4 818 h1.5 v3.4 h-1.5z M2324.2 818 h1.5 v3.4 h-1.5z M2327 818 h1.5 v3.4 h-1.5z M2320.5 822 h9 v1.2 h-9z" fill="#fff"/>
<rect x="1449.0" y="575.5" width="11" height="11" rx="2" fill="#1a73e8"/><rect x="1451.5" y="577.8" width="6" height="5.6" rx="1" fill="#fff"/><rect x="1452.3" y="578.6" width="4.4" height="2" fill="#1a73e8"/><rect x="1452.2" y="581.6" width="1.2" height="1.1" fill="#1a73e8"/><rect x="1455.6" y="581.6" width="1.2" height="1.1" fill="#1a73e8"/>
<rect x="1683.5" y="501.5" width="11" height="11" rx="2" fill="#1a73e8"/><rect x="1686" y="503.8" width="6" height="5.6" rx="1" fill="#fff"/><rect x="1686.8" y="504.6" width="4.4" height="2" fill="#1a73e8"/><rect x="1686.7" y="507.6" width="1.2" height="1.1" fill="#1a73e8"/><rect x="1690.1" y="507.6" width="1.2" height="1.1" fill="#1a73e8"/>
<rect x="1734.5" y="494.5" width="11" height="11" rx="2" fill="#1a73e8"/><rect x="1737" y="496.8" width="6" height="5.6" rx="1" fill="#fff"/><rect x="1737.8" y="497.6" width="4.4" height="2" fill="#1a73e8"/><rect x="1737.7" y="500.6" width="1.2" height="1.1" fill="#1a73e8"/><rect x="1741.1" y="500.6" width="1.2" height="1.1" fill="#1a73e8"/>
<rect x="1842.5" y="787.0" width="11" height="11" rx="2" fill="#1a73e8"/><rect x="1845" y="789.3" width="6" height="5.6" rx="1" fill="#fff"/><rect x="1845.8" y="790.1" width="4.4" height="2" fill="#1a73e8"/><rect x="1845.7" y="793.1" width="1.2" height="1.1" fill="#1a73e8"/><rect x="1849.1" y="793.1" width="1.2" height="1.1" fill="#1a73e8"/>
<rect x="1803.3" y="826.3" width="11" height="11" rx="2" fill="#1a73e8"/><rect x="1805.8" y="828.5999999999999" width="6" height="5.6" rx="1" fill="#fff"/><rect x="1806.6" y="829.4" width="4.4" height="2" fill="#1a73e8"/><rect x="1806.5" y="832.4" width="1.2" height="1.1" fill="#1a73e8"/><rect x="1809.8999999999999" y="832.4" width="1.2" height="1.1" fill="#1a73e8"/>
<rect x="1751.0" y="854.1" width="11" height="11" rx="2" fill="#1a73e8"/><rect x="1753.5" y="856.4" width="6" height="5.6" rx="1" fill="#fff"/><rect x="1754.3" y="857.2" width="4.4" height="2" fill="#1a73e8"/><rect x="1754.2" y="860.2" width="1.2" height="1.1" fill="#1a73e8"/><rect x="1757.6" y="860.2" width="1.2" height="1.1" fill="#1a73e8"/>
<rect x="1545.5" y="890.5" width="11" height="11" rx="2" fill="#1a73e8"/><rect x="1548" y="892.8" width="6" height="5.6" rx="1" fill="#fff"/><rect x="1548.8" y="893.6" width="4.4" height="2" fill="#1a73e8"/><rect x="1548.7" y="896.6" width="1.2" height="1.1" fill="#1a73e8"/><rect x="1552.1" y="896.6" width="1.2" height="1.1" fill="#1a73e8"/>
<rect x="2324.1" y="794.5" width="11" height="11" rx="2" fill="#1a73e8"/><rect x="2326.6" y="796.8" width="6" height="5.6" rx="1" fill="#fff"/><rect x="2327.4" y="797.6" width="4.4" height="2" fill="#1a73e8"/><rect x="2327.2999999999997" y="800.6" width="1.2" height="1.1" fill="#1a73e8"/><rect x="2330.7" y="800.6" width="1.2" height="1.1" fill="#1a73e8"/>
<rect x="2348.8" y="791.0" width="11" height="11" rx="2" fill="#1a73e8"/><rect x="2351.3" y="793.3" width="6" height="5.6" rx="1" fill="#fff"/><rect x="2352.1000000000004" y="794.1" width="4.4" height="2" fill="#1a73e8"/><rect x="2352.0" y="797.1" width="1.2" height="1.1" fill="#1a73e8"/><rect x="2355.4" y="797.1" width="1.2" height="1.1" fill="#1a73e8"/>
<circle cx="1894.1" cy="693.6" r="14.5" fill="#b5dc86" opacity=".5"/>
<line x1="1886" y1="694.6" x2="1896" y2="693.4" stroke="#5a5a4a" stroke-width="1"/>
<path d="M1869.4 679.5 A11.3 11.3 0 1 1 1892.0 679.5 Q1890.6 689.1 1880.7 701.1 Q1870.8 689.1 1869.4 679.5Z" fill="#03a9f4"/>
<g transform="translate(0 -1.2) rotate(-38 1880.7 681.2)"><circle cx="1875.2" cy="681.2" r="4.1" fill="#fff"/><circle cx="1874" cy="681.2" r="1.4" fill="#03a9f4"/><rect x="1878" y="679.8" width="10.6" height="2.8" fill="#fff"/><rect x="1883.6" y="681.6" width="1.9" height="3.2" fill="#fff"/><rect x="1886.5" y="681.6" width="1.9" height="2.8" fill="#fff"/></g>
<path d="M1894.8 694.7 A11.3 11.3 0 1 1 1917.4 694.7 Q1916.0 704.3 1906.1 715.6 Q1896.2 704.3 1894.8 694.7Z" fill="#03a9f4"/>
<text x="1906.3" y="701.6" font-size="19" font-weight="bold" fill="#fff" text-anchor="middle">P</text>
<text x="1356.5" y="899" font-size="16.5" letter-spacing="-0.5" stroke="#fff" stroke-width="2" paint-order="stroke"><tspan fill="#4285f4">G</tspan><tspan fill="#ea4335">o</tspan><tspan fill="#fbbc05">o</tspan><tspan fill="#4285f4">g</tspan><tspan fill="#34a853">l</tspan><tspan fill="#ea4335">e</tspan></text>
<rect x="2179" y="894" width="363" height="13" fill="#f5f5f5" opacity=".7"/>
<text x="2183" y="902.6" font-size="10" fill="#2a2a2a" textLength="113.6" lengthAdjust="spacingAndGlyphs">Térképadatok ©2023 Google</text>
<text x="2308" y="902.6" font-size="10" fill="#2a2a2a" textLength="124" lengthAdjust="spacingAndGlyphs">Általános Szerződési Feltételek</text>
<text x="2443.8" y="902.6" font-size="10" fill="#2a2a2a" textLength="91.4" lengthAdjust="spacingAndGlyphs">Térképhiba bejelentése</text>
<circle cx="2350.4" cy="518.3" r="15.5" fill="#6e6e6e"/>
<path d="M15.5 14h-.79l-.28-.27C15.41 12.59 16 11.11 16 9.5 16 5.91 13.09 3 9.5 3S3 5.91 3 9.5 5.91 16 9.5 16c1.61 0 3.09-.59 4.23-1.57l.27.28v.79l5 4.99L20.49 19l-4.99-5zm-6 0C7.01 14 5 11.99 5 9.5S7.01 5 9.5 5 14 7.01 14 9.5 11.99 14 9.5 14z" fill="#fff" transform="translate(2342.40 510.30) scale(0.6667)"/>
<circle cx="2391.9" cy="518.3" r="15.5" fill="#6e6e6e"/>
<path d="M15 3l2.3 2.3-2.89 2.87 1.42 1.42L18.7 6.7 21 9V3zM3 9l2.3-2.3 2.87 2.89 1.42-1.42L6.7 5.3 9 3H3zm6 12l-2.3-2.3 2.89-2.87-1.42-1.42L5.3 17.3 3 15v6zm12-6l-2.3 2.3-2.87-2.89-1.42 1.42 2.89 2.87L15 21h6z" fill="#fff" transform="translate(2383.90 510.30) scale(0.6667)"/>
<circle cx="2433.6" cy="518.3" r="15.5" fill="#6e6e6e"/>
<path d="M17 15h2V7c0-1.1-.9-2-2-2H9v2h8v8zM7 17V1H5v4H1v2h4v10c0 1.1.9 2 2 2h10v4h2v-4h4v-2H7z" fill="#fff" transform="translate(2425.60 510.30) scale(0.6667)"/>
<circle cx="2475" cy="518.3" r="15.5" fill="#6e6e6e"/>
<path d="M15.5 14h-.79l-.28-.27C15.41 12.59 16 11.11 16 9.5 16 5.91 13.09 3 9.5 3S3 5.91 3 9.5 5.91 16 9.5 16c1.61 0 3.09-.59 4.23-1.57l.27.28v.79l5 4.99L20.49 19l-4.99-5zm-6 0C7.01 14 5 11.99 5 9.5S7.01 5 9.5 5 14 7.01 14 9.5 11.99 14 9.5 14zm2.5-4h-2v2H9v-2H7V9h2V7h1v2h2v1z" fill="#fff" transform="translate(2467.00 510.30) scale(0.6667)"/>
<circle cx="2516.5" cy="518.3" r="15.5" fill="#6e6e6e"/>
<path d="M19 13h-6v6h-2v-6H5v-2h6V5h2v6h6v2z" fill="#fff" transform="translate(2508.00 509.80) scale(0.7083)"/>
<circle cx="2516.5" cy="564.4" r="15.5" fill="#6e6e6e"/>
<path d="M19 13H5v-2h14v2z" fill="#fff" transform="translate(2508.00 555.90) scale(0.7083)"/>
<circle cx="2473.7" cy="881.5" r="15.5" fill="#6e6e6e"/>
<path d="M11.99 18.54l-7.37-5.73L3 14.07l9 7 9-7-1.63-1.27-7.38 5.74zM12 16l7.36-5.73L21 9l-9-7-9 7 1.63 1.27L12 16z" fill="#fff" transform="translate(2465.20 873.00) scale(0.7083)"/>
<circle cx="2515.4" cy="881.5" r="15.5" fill="#6e6e6e"/>
<path d="M12 2C8.13 2 5 5.13 5 9c0 5.25 7 13 7 13s7-7.75 7-13c0-3.87-3.13-7-7-7zm0 9.5c-1.38 0-2.5-1.12-2.5-2.5s1.12-2.5 2.5-2.5 2.5 1.12 2.5 2.5-1.12 2.5-2.5 2.5z" fill="#fff" transform="translate(2506.90 873.00) scale(0.7083)"/>
</svg>
<div class="abs" style="left:0;top:0;width:2543px;height:66.5px;background:#03a9f4;box-shadow:0 2px 4px rgba(0,0,0,.2)"></div>
<div class="abs" style="left:209px;top:15.3px;width:32px;height:32px;border-radius:50%;background:#ffc107;box-shadow:0 3px 5px rgba(0,0,0,.3)"></div>
<svg viewBox="0 0 24 24" width="32" height="32" style="position:absolute;left:208.6px;top:14.9px;fill:#222;"><path d="M15.41 7.41L14 6l-6 6 6 6 1.41-1.41L10.83 12z"/></svg>
<span class="t" style="left:270.0px;top:33.2px;font-size:12.8px;color:#fff;transform:scaleX(0.9691);-webkit-text-stroke:.45px #fff;">Összes cég</span>
<div class="abs" style="left:268px;top:47.6px;width:219px;height:1.2px;background:#fff"></div>
<svg viewBox="0 0 24 24" width="19.2" height="19.2" style="position:absolute;left:468.2px;top:25.6px;fill:#fff;stroke:#fff;stroke-width:.6"><path d="M16.59 8.59L12 13.17 7.41 8.59 6 10l6 6 6-6z"/></svg>
<svg viewBox="0 0 24 24" width="33.6" height="33.6" style="position:absolute;left:2232.2px;top:16.2px;fill:#fff200;"><path d="M21.41 11.58l-9-9C12.05 2.22 11.55 2 11 2H4c-1.1 0-2 .9-2 2v7c0 .55.22 1.05.59 1.42l9 9c.36.36.86.58 1.41.58.55 0 1.05-.22 1.41-.59l7-7c.37-.36.59-.86.59-1.41 0-.55-.23-1.06-.59-1.42zM5.5 7C4.67 7 4 6.33 4 5.5S4.67 4 5.5 4 7 4.67 7 5.5 6.33 7 5.5 7z"/></svg>
<svg viewBox="0 0 24 24" width="32" height="32" style="position:absolute;left:2272.5px;top:17.0px;fill:#fff;"><path d="M3 13h8V3H3v10zm0 8h8v-6H3v6zm10 0h8V11h-8v10zm0-18v6h8V3h-8z"/></svg>
<svg viewBox="0 0 24 24" width="32" height="32" style="position:absolute;left:2312.3px;top:17.0px;fill:#fff;"><path d="M11 18h2v-2h-2v2zm1-16C6.48 2 2 6.48 2 12s4.48 10 10 10 10-4.48 10-10S17.52 2 12 2zm0 18c-4.41 0-8-3.59-8-8s3.59-8 8-8 8 3.59 8 8-3.59 8-8 8zm0-14c-2.21 0-4 1.79-4 4h2c0-1.1.9-2 2-2s2 .9 2 2c0 2-3 1.75-3 5h2c0-2.25 3-2.5 3-5 0-2.21-1.79-4-4-4z"/></svg>
<svg viewBox="0 0 24 24" width="32" height="32" style="position:absolute;left:2392.0px;top:17.0px;fill:#fff;"><path d="M13 3H6v18h4v-6h3c3.31 0 6-2.69 6-6s-2.69-6-6-6zm.2 8H10V7h3.2c1.1 0 2 .9 2 2s-.9 2-2 2z"/></svg>
<svg viewBox="0 0 24 24" width="32" height="32" style="position:absolute;left:2432.0px;top:17.0px;fill:#fff;"><path d="M12 22c1.1 0 2-.9 2-2h-4c0 1.1.89 2 2 2zm6-6v-5c0-3.07-1.64-5.64-4.5-6.32V4c0-.83-.67-1.5-1.5-1.5s-1.5.67-1.5 1.5v.68C7.63 5.36 6 7.92 6 11v5l-2 2v1h16v-1l-2-2z"/></svg>
<svg viewBox="0 0 24 24" width="32" height="32" style="position:absolute;left:2512.0px;top:17.0px;fill:#fff;"><path d="M12 1c-4.97 0-9 4.03-9 9v7c0 1.66 1.34 3 3 3h3v-8H5v-2c0-3.87 3.13-7 7-7s7 3.13 7 7v2h-4v8h4v1h-7v2h6c1.66 0 3-1.34 3-3V10c0-4.97-4.03-9-9-9z"/></svg>
<svg class="abs" style="left:2350px;top:10px" width="160" height="44" viewBox="2350 10 160 44"><path d="M2356.1 19 H2369 L2375.2 25.2 V42.1 Q2375.2 43.9 2373.4 43.9 H2356.1 Q2354.3 43.9 2354.3 42.1 V20.8 Q2354.3 19 2356.1 19Z" fill="#fff"/><path d="M2368.3 20.4 L2373.8 25.9 H2368.3Z" fill="#03a9f4"/><rect x="2358" y="29.4" width="10" height="1.7" fill="#03a9f4"/><rect x="2358" y="34" width="6.8" height="1.8" fill="#03a9f4"/><circle cx="2374.9" cy="39.1" r="8.3" fill="#03a9f4"/><circle cx="2374.9" cy="39.1" r="6" fill="none" stroke="#fff" stroke-width="2.4"/><path d="M2366.6 38.8 L2374.6 39.6 L2368.2 47.4Z" fill="#03a9f4"/><path d="M2367.6 39.5 L2374.3 40.1 L2368.4 46.2Z" fill="#fff"/><path d="M2473.2 20.2 Q2473.2 19.2 2474.2 19.2 H2497.3 V26.7 H2483.1 V36.9 H2480.7 L2475.9 40.9 L2475.6 36.9 H2474.2 Q2473.2 36.9 2473.2 35.9Z" fill="#fff"/><path d="M2485.2 30 Q2485.2 29.2 2486 29.2 H2499.7 Q2500.5 29.2 2500.5 30 V39.9 Q2500.5 40.7 2499.7 40.7 H2497.8 V45 L2493 40.7 H2486 Q2485.2 40.7 2485.2 39.9Z" fill="#fff"/></svg>
<div class="abs" style="left:2376.0px;top:13.5px;width:12.8px;height:12.8px;border-radius:50%;background:#ffc107"></div>
<span class="t" style="left:2379.5px;top:14.9px;font-size:10.4px;color:#3a2f08;">0</span>
<div class="abs" style="left:2415.1px;top:13.5px;width:12.8px;height:12.8px;border-radius:50%;background:#ffc107"></div>
<span class="t" style="left:2418.6px;top:14.9px;font-size:10.4px;color:#3a2f08;">0</span>
<div class="abs" style="left:2454.6px;top:13.5px;width:12.8px;height:12.8px;border-radius:50%;background:#ffc107"></div>
<span class="t" style="left:2458.1px;top:14.9px;font-size:10.4px;color:#3a2f08;">1</span>
<div class="abs" style="left:2494.6px;top:13.5px;width:12.8px;height:12.8px;border-radius:50%;background:#ffc107"></div>
<span class="t" style="left:2498.1px;top:14.9px;font-size:10.4px;color:#3a2f08;">0</span>
<div class="abs" style="left:0;top:66.5px;width:223px;height:868px;background:#fff"></div>
<div class="abs" style="left:223px;top:66.5px;width:6px;height:868px;background:linear-gradient(90deg,#bdbdbd,#cfcfcf 60%,#e2e2e2)"></div>
<svg class="abs" style="left:0;top:66.5px" width="223" height="131" viewBox="0 0 223 131">
<defs><linearGradient id="ug" x1="0" y1="0" x2="0" y2="1"><stop offset="0" stop-color="#efeded"/><stop offset=".55" stop-color="#eeeeef"/><stop offset="1" stop-color="#f1f2f5"/></linearGradient></defs>
<polygon points="0.0,79.8 12.0,73.5 25.8,69.8 38.0,61.5 50.2,54.0 60.0,53.0 68.9,51.9 80.0,59.5 95.0,64.5 120.0,61.5 134.9,52.5 145.0,49.5 155.0,44.0 165.0,47.5 175.0,46.5 186.5,56.9 197.0,57.5 208.0,62.5 216.0,58.5 223.0,59.5 223.0,131.0 0.0,131.0" fill="url(#ug)" opacity="1"/>
<polygon points="50.2,54.0 68.9,51.9 95.0,83.5 60.0,93.5 30.0,83.5" fill="#e9e9e9" opacity="0.8"/>
<polygon points="0.0,79.8 25.8,69.8 40.0,93.5 10.0,108.5 0.0,103.5" fill="#f3f1f1" opacity="0.9"/>
<polygon points="134.9,52.5 155.0,44.0 175.0,73.5 150.0,83.5" fill="#f5f1f0" opacity="0.9"/>
<polygon points="155.0,44.0 186.5,56.9 200.0,83.5 175.0,73.5" fill="#ecebeb" opacity="0.9"/>
<polygon points="186.5,56.9 223.0,59.5 223.0,93.5 200.0,83.5" fill="#f2eeee" opacity="0.9"/>
<polygon points="100.0,108.5 155.0,79.5 185.0,103.5 200.0,131.0 110.0,131.0" fill="#f5f7fa" opacity="0.95"/>
<polygon points="155.0,79.5 190.0,83.5 223.0,113.5 223.0,131.0 200.0,131.0 185.0,103.5" fill="#f1f3f6" opacity="0.95"/>
<polygon points="0.0,88.5 30.0,83.5 70.0,108.5 90.0,131.0 0.0,131.0" fill="#ebebed" opacity="0.9"/>
<polygon points="40.0,98.5 75.0,83.5 100.0,108.5 110.0,131.0 90.0,131.0 70.0,108.5" fill="#f6f6f7" opacity="0.9"/>
</svg>
<div class="abs" style="left:0;top:197.3px;width:223px;height:4px;background:linear-gradient(180deg,rgba(0,0,0,.10),rgba(0,0,0,0))"></div>
<div class="abs" style="left:79.3px;top:98.4px;width:54px;height:54px;border-radius:50%;background:#ffc107"></div>
<span class="t" style="left:89.2px;top:113.1px;font-size:25.6px;color:#fff;transform:scaleX(0.9330);">DD</span>
<span class="t" style="left:58.0px;top:174.5px;font-size:13.2px;color:#333;transform:scaleX(1.0450);">Demo Dénes</span>
<svg viewBox="0 0 24 24" width="19.2" height="19.2" style="position:absolute;left:143.2px;top:170.8px;fill:#222;stroke:#222;stroke-width:.5"><path d="M16.59 8.59L12 13.17 7.41 8.59 6 10l6 6 6-6z"/></svg>
<span class="t" style="left:39.9px;top:222.7px;font-size:12.9px;color:#2d2d2d;transform:scaleX(0.9660);">Műszerfal</span>
<span class="t" style="left:39.9px;top:259.5px;font-size:12.9px;color:#2d2d2d;transform:scaleX(0.9660);">Flotta ellenőrzés</span>
<svg viewBox="0 0 24 24" width="19.2" height="19.2" style="position:absolute;left:191.6px;top:254.4px;fill:#555;"><path d="M16.59 8.59L12 13.17 7.41 8.59 6 10l6 6 6-6z"/></svg>
<span class="t" style="left:39.9px;top:296.3px;font-size:12.9px;color:#2d2d2d;transform:scaleX(0.9660);">Szállítások</span>
<svg viewBox="0 0 24 24" width="19.2" height="19.2" style="position:absolute;left:191.6px;top:291.2px;fill:#555;"><path d="M16.59 8.59L12 13.17 7.41 8.59 6 10l6 6 6-6z"/></svg>
<span class="t" style="left:39.9px;top:333.1px;font-size:12.9px;color:#2d2d2d;transform:scaleX(0.9660);">Alapadatok</span>
<svg viewBox="0 0 24 24" width="19.2" height="19.2" style="position:absolute;left:191.6px;top:328.0px;fill:#555;"><path d="M16.59 8.59L12 13.17 7.41 8.59 6 10l6 6 6-6z"/></svg>
<div class="abs" style="left:0;top:357.0px;width:223px;height:36.8px;background:#e8e8e8"></div>
<span class="t" style="left:39.9px;top:369.9px;font-size:12.9px;color:#03a9f4;transform:scaleX(0.9660);">Adminisztráció</span>
<svg viewBox="0 0 24 24" width="19.2" height="19.2" style="position:absolute;left:191.6px;top:364.79999999999995px;fill:#555;"><path d="M12 8l-6 6 1.41 1.41L12 10.83l4.59 4.58L18 14z"/></svg>
<span class="t" style="left:54.2px;top:406.7px;font-size:12.9px;color:#2d2d2d;transform:scaleX(0.9660);">Flotta események</span>
<span class="t" style="left:54.2px;top:443.5px;font-size:12.9px;color:#2d2d2d;transform:scaleX(0.9660);">Flotta értesítések</span>
<span class="t" style="left:54.2px;top:480.3px;font-size:12.9px;color:#2d2d2d;transform:scaleX(0.9660);">Flotta költségek</span>
<span class="t" style="left:54.2px;top:517.1px;font-size:12.9px;color:#2d2d2d;transform:scaleX(0.9660);">Üzemanyagár</span>
<span class="t" style="left:54.2px;top:553.9px;font-size:12.9px;color:#2d2d2d;transform:scaleX(0.9660);">Utazási okmányok</span>
<span class="t" style="left:54.2px;top:590.7px;font-size:12.9px;color:#2d2d2d;transform:scaleX(0.9660);">Utazási okmány típusok</span>
<span class="t" style="left:54.2px;top:627.5px;font-size:12.9px;color:#2d2d2d;transform:scaleX(0.9660);">Szerviz asszisztens</span>
<div class="abs" style="left:0;top:658.7px;width:223px;height:1px;background:#d9d9d9"></div>
<span class="t" style="left:54.2px;top:679.5px;font-size:12.9px;color:#2d2d2d;transform:scaleX(0.9660);">Jogosultság kezelő</span>
<span class="t" style="left:54.2px;top:716.3px;font-size:12.9px;color:#2d2d2d;transform:scaleX(0.9660);">Szabálykezelő</span>
<div class="abs" style="left:0;top:740.2px;width:223px;height:36.8px;background:#e8e8e8"></div>
<span class="t" style="left:54.2px;top:753.1px;font-size:12.9px;color:#03a9f4;transform:scaleX(0.9660);">Események</span>
<svg viewBox="0 0 24 24" width="16" height="16" style="position:absolute;left:194.3px;top:749.8000000000001px;fill:#222;"><path d="M22 9.24l-7.19-.62L12 2 9.19 8.63 2 9.24l5.46 4.73L5.82 21 12 17.27 18.18 21l-1.63-7.03L22 9.24zM12 15.4l-3.76 2.27 1-4.28-3.32-2.88 4.38-.38L12 6.1l1.71 4.04 4.38.38-3.32 2.88 1 4.28L12 15.4z"/></svg>
<span class="t" style="left:54.2px;top:789.9px;font-size:12.9px;color:#2d2d2d;transform:scaleX(0.9660);">Parkolás</span>
<span class="t" style="left:54.2px;top:826.7px;font-size:12.9px;color:#2d2d2d;transform:scaleX(0.9660);">Tachográf</span>
<span class="t" style="left:54.2px;top:863.5px;font-size:12.9px;color:#2d2d2d;transform:scaleX(0.9660);">Munkaszám használat</span>
<span class="t" style="left:54.2px;top:900.3px;font-size:12.9px;color:#2d2d2d;transform:scaleX(0.9660);">Nyílvános megosztás</span>
<div class="abs" style="left:13.5px;top:931.5px;width:9px;height:3px;background:#757575"></div>
<svg class="abs" style="left:0;top:200px" width="60" height="734" viewBox="0 200 60 734">
<rect x="13.70" y="218.75" width="13.90" height="3.90" fill="#737373"/>
<rect x="13.70" y="224.50" width="3.40" height="8.30" fill="#737373"/>
<rect x="18.60" y="224.50" width="9.00" height="3.30" fill="#737373"/>
<rect x="18.60" y="229.50" width="9.00" height="3.30" fill="#737373"/>
<path d="M15.10 266.00 L16.80 262.30 H18.10 M23.10 262.30 H24.40 L26.10 266.00" fill="none" stroke="#737373" stroke-width="1.3" stroke-linecap="round" stroke-linejoin="round" />
<rect x="13.90" y="265.70" width="13.40" height="4.30" rx="1.5" fill="#737373"/>
<rect x="15.10" y="266.90" width="3.50" height="1.30" rx="0.6" fill="#fff"/>
<rect x="22.60" y="266.90" width="3.50" height="1.30" rx="0.6" fill="#fff"/>
<rect x="15.40" y="269.30" width="2.50" height="1.70" rx="0.7" fill="#737373"/>
<rect x="23.30" y="269.30" width="2.50" height="1.70" rx="0.7" fill="#737373"/>
<circle cx="20.45" cy="262.40" r="0.75" fill="#737373"/>
<path d="M18.1 260.5 Q20.45 258.3 22.8 260.5" fill="none" stroke="#737373" stroke-width="1.15" stroke-linecap="round" stroke-linejoin="round" />
<path d="M16.1 258.5 Q20.45 254.6 24.9 258.5" fill="none" stroke="#737373" stroke-width="1.15" stroke-linecap="round" stroke-linejoin="round" />
<rect x="12.70" y="295.00" width="15.80" height="8.40" rx="1.6" fill="#737373"/>
<rect x="14.10" y="296.60" width="2.50" height="2.60" rx="0.3" fill="#fff"/>
<rect x="17.50" y="296.60" width="2.50" height="2.60" rx="0.3" fill="#fff"/>
<rect x="20.90" y="296.60" width="2.50" height="2.60" rx="0.3" fill="#fff"/>
<rect x="24.30" y="296.60" width="2.50" height="2.60" rx="0.3" fill="#fff"/>
<circle cx="16.60" cy="303.60" r="1.9" fill="#fff"/>
<circle cx="24.60" cy="303.60" r="1.9" fill="#fff"/>
<circle cx="16.60" cy="303.60" r="1.25" fill="#737373"/>
<circle cx="24.60" cy="303.60" r="1.25" fill="#737373"/>
<rect x="12.70" y="327.80" width="2.00" height="12.60" fill="#737373"/>
<path d="M17.20 327.80 H21.90 L24.50 330.40 V339.20 Q24.50 340.40 23.30 340.40 H17.20 Q16.00 340.40 16.00 339.20 V329.00 Q16.00 327.80 17.20 327.80Z" fill="#737373" />
<circle cx="25.00" cy="340.30" r="4.6" fill="#fff"/>
<rect x="-0.90" y="-3.70" width="1.8" height="2" fill="#737373" transform="translate(25.0 340.3) rotate(0)"/>
<rect x="-0.90" y="-3.70" width="1.8" height="2" fill="#737373" transform="translate(25.0 340.3) rotate(45)"/>
<rect x="-0.90" y="-3.70" width="1.8" height="2" fill="#737373" transform="translate(25.0 340.3) rotate(90)"/>
<rect x="-0.90" y="-3.70" width="1.8" height="2" fill="#737373" transform="translate(25.0 340.3) rotate(135)"/>
<rect x="-0.90" y="-3.70" width="1.8" height="2" fill="#737373" transform="translate(25.0 340.3) rotate(180)"/>
<rect x="-0.90" y="-3.70" width="1.8" height="2" fill="#737373" transform="translate(25.0 340.3) rotate(225)"/>
<rect x="-0.90" y="-3.70" width="1.8" height="2" fill="#737373" transform="translate(25.0 340.3) rotate(270)"/>
<rect x="-0.90" y="-3.70" width="1.8" height="2" fill="#737373" transform="translate(25.0 340.3) rotate(315)"/>
<circle cx="25.00" cy="340.30" r="2.7" fill="#737373"/>
<circle cx="25.00" cy="340.30" r="1.2" fill="#fff"/>
<rect x="14.00" y="366.30" width="13.30" height="10.20" rx="1.2" fill="#737373"/>
<rect x="17.20" y="378.00" width="7.00" height="1.90" rx="0.4" fill="#737373"/>
<rect x="27.60" y="404.60" width="14.50" height="11.70" rx="1.3" fill="#737373"/>
<rect x="30.00" y="403.20" width="1.70" height="2.60" fill="#737373"/>
<rect x="37.90" y="403.20" width="1.70" height="2.60" fill="#737373"/>
<rect x="29.70" y="408.00" width="2.50" height="2.30" fill="#fff"/>
<rect x="29.70" y="411.60" width="2.50" height="2.30" fill="#fff"/>
<rect x="33.45" y="408.00" width="2.50" height="2.30" fill="#fff"/>
<rect x="33.45" y="411.60" width="2.50" height="2.30" fill="#fff"/>
<rect x="37.20" y="408.00" width="2.50" height="2.30" fill="#fff"/>
<rect x="27.00" y="443.40" width="13.30" height="8.80" rx="1.4" fill="#737373"/>
<rect x="27.40" y="441.50" width="12.50" height="1.10" fill="#737373"/>
<rect x="29.30" y="440.00" width="1.40" height="2.20" fill="#737373"/>
<rect x="36.60" y="440.00" width="1.40" height="2.20" fill="#737373"/>
<rect x="41.00" y="449.00" width="1.00" height="3.10" fill="#737373"/>
<rect x="41.00" y="452.80" width="1.00" height="1.10" fill="#737373"/>
<rect x="27.60" y="478.60" width="14.50" height="11.90" rx="1.3" fill="#737373"/>
<rect x="30.00" y="477.00" width="1.70" height="2.80" fill="#737373"/>
<rect x="37.90" y="477.00" width="1.70" height="2.80" fill="#737373"/>
<text x="34.85" y="488.3" font-size="8.4" font-weight="bold" fill="#fff" text-anchor="middle">$</text>
<rect x="28.60" y="512.70" width="9.70" height="14.50" rx="1.6" fill="#737373"/>
<rect x="30.40" y="514.50" width="6.10" height="3.30" rx="0.4" fill="#fff"/>
<text x="33.4" y="525.7" font-size="6.4" font-weight="bold" fill="#fff" text-anchor="middle">F</text>
<path d="M39.6 517.5 Q41.6 516.4 41.9 513.6 M40.9 515.2 V521.8" fill="none" stroke="#737373" stroke-width="1.0" stroke-linecap="round" stroke-linejoin="round" />
<path d="M28.2 550.6 l1.3 .9 1.3-.9 1.3 .9 1.3-.9 1.3 .9 1.3-.9 1.3 .9 1.3-.9 V558 l-2 2 1.2 3.8 -1.3-.8 -1.3 .8 -1.3-.8 -1.3 .8 -1.3-.8 -1.3 .8 -1.2-.8Z" fill="#737373" />
<rect x="30.00" y="553.40" width="2.20" height="5.60" fill="#fff"/>
<rect x="30.00" y="553.40" width="3.60" height="1.10" fill="#fff"/>
<path d="M35.2 556.6 l1.9 1.9 4.4-4.6" fill="none" stroke="#737373" stroke-width="1.25" stroke-linecap="round" stroke-linejoin="round" />
<path d="M33.9 556.8 l2.1 2.3" fill="none" stroke="#fff" stroke-width="1.0" stroke-linecap="round" stroke-linejoin="round" />
<path d="M28.20 586.00 H37.30 L37.40 586.10 V598.00 Q37.40 599.20 36.20 599.20 H28.20 Q27.00 599.20 27.00 598.00 V587.20 Q27.00 586.00 28.20 586.00Z" fill="#737373" />
<path d="M29.3 588.6 l1.4 1 -1.4 1 M29.3 591.6 l1.4 1 -1.4 1" fill="none" stroke="#fff" stroke-width="0.8" stroke-linecap="round" stroke-linejoin="round" />
<circle cx="38.70" cy="597.20" r="4.6" fill="#fff"/>
<rect x="-0.90" y="-3.70" width="1.8" height="2" fill="#737373" transform="translate(38.7 597.2) rotate(0)"/>
<rect x="-0.90" y="-3.70" width="1.8" height="2" fill="#737373" transform="translate(38.7 597.2) rotate(45)"/>
<rect x="-0.90" y="-3.70" width="1.8" height="2" fill="#737373" transform="translate(38.7 597.2) rotate(90)"/>
<rect x="-0.90" y="-3.70" width="1.8" height="2" fill="#737373" transform="translate(38.7 597.2) rotate(135)"/>
<rect x="-0.90" y="-3.70" width="1.8" height="2" fill="#737373" transform="translate(38.7 597.2) rotate(180)"/>
<rect x="-0.90" y="-3.70" width="1.8" height="2" fill="#737373" transform="translate(38.7 597.2) rotate(225)"/>
<rect x="-0.90" y="-3.70" width="1.8" height="2" fill="#737373" transform="translate(38.7 597.2) rotate(270)"/>
<rect x="-0.90" y="-3.70" width="1.8" height="2" fill="#737373" transform="translate(38.7 597.2) rotate(315)"/>
<circle cx="38.70" cy="597.20" r="2.7" fill="#737373"/>
<circle cx="38.70" cy="597.20" r="1.2" fill="#fff"/>
<path d="M29.30 633.80 L31.00 630.10 H34.90 M39.40 632.10 L40.60 633.80" fill="none" stroke="#737373" stroke-width="1.3" stroke-linecap="round" stroke-linejoin="round" />
<rect x="28.10" y="633.50" width="13.70" height="4.30" rx="1.5" fill="#737373"/>
<rect x="29.30" y="634.70" width="3.50" height="1.30" rx="0.6" fill="#fff"/>
<rect x="37.10" y="634.70" width="3.50" height="1.30" rx="0.6" fill="#fff"/>
<rect x="29.60" y="637.10" width="2.50" height="1.70" rx="0.7" fill="#737373"/>
<rect x="37.80" y="637.10" width="2.50" height="1.70" rx="0.7" fill="#737373"/>
<path d="M36.1 628.4 l2.1 2.0 3.2-3.2" fill="none" stroke="#737373" stroke-width="1.2" stroke-linecap="round" stroke-linejoin="round" />
<path d="M29.80 676.00 H37.60 L41.20 679.60 V689.00 Q41.20 690.20 40.00 690.20 H29.80 Q28.60 690.20 28.60 689.00 V677.20 Q28.60 676.00 29.80 676.00Z" fill="#737373" />
<rect x="32.80" y="682.90" width="4.20" height="3.40" rx="0.4" fill="#fff"/>
<path d="M33.7 682.9 v-1 a1.2 1.2 0 0 1 2.4 0 v1" fill="none" stroke="#fff" stroke-width="0.8" stroke-linecap="round" stroke-linejoin="round" />
<path d="M40.8 714 H34 A3.3 3.3 0 0 0 34 720.6 H35.6 M35.6 714 V726.5 M38.7 714 V726.5" fill="none" stroke="#737373" stroke-width="1.15" stroke-linecap="round" stroke-linejoin="round" />
<path d="M12 22c1.1 0 2-.9 2-2h-4c0 1.1.89 2 2 2zm6-6v-5c0-3.07-1.64-5.64-4.5-6.32V4c0-.83-.67-1.5-1.5-1.5s-1.5.67-1.5 1.5v.68C7.63 5.36 6 7.92 6 11v5l-2 2v1h16v-1l-2-2z" fill="#737373" transform="translate(26.05 749.6) scale(.7375 .62)"/>
<path d="M29.30 796.90 L31.00 793.20 H34.90 M39.40 795.20 L40.60 796.90" fill="none" stroke="#737373" stroke-width="1.3" stroke-linecap="round" stroke-linejoin="round" />
<rect x="28.10" y="796.60" width="13.70" height="4.30" rx="1.5" fill="#737373"/>
<rect x="29.30" y="797.80" width="3.50" height="1.30" rx="0.6" fill="#fff"/>
<rect x="37.10" y="797.80" width="3.50" height="1.30" rx="0.6" fill="#fff"/>
<rect x="29.60" y="800.20" width="2.50" height="1.70" rx="0.7" fill="#737373"/>
<rect x="37.80" y="800.20" width="2.50" height="1.70" rx="0.7" fill="#737373"/>
<text x="39.8" y="794.4" font-size="6.6" font-weight="bold" fill="#737373" text-anchor="middle">P</text>
<path d="M28.20 823.30 H35.00 L37.80 826.10 V835.30 Q37.80 836.50 36.60 836.50 H28.20 Q27.00 836.50 27.00 835.30 V824.50 Q27.00 823.30 28.20 823.30Z" fill="#737373" />
<rect x="29.20" y="828.20" width="5.40" height="1.10" fill="#fff"/>
<rect x="29.20" y="830.70" width="6.40" height="1.10" fill="#fff"/>
<rect x="29.20" y="833.20" width="3.60" height="1.10" fill="#fff"/>
<circle cx="40.30" cy="834.40" r="3.2" fill="#fff"/>
<path d="M40.3 831.2 V837.6 M38.2 835.6 L40.3 837.8 L42.4 835.6" fill="none" stroke="#737373" stroke-width="1.1" stroke-linecap="round" stroke-linejoin="round" />
<path d="M29.80 860.00 H37.60 L41.20 863.60 V873.30 Q41.20 874.50 40.00 874.50 H29.80 Q28.60 874.50 28.60 873.30 V861.20 Q28.60 860.00 29.80 860.00Z" fill="#737373" />
<rect x="31.20" y="867.20" width="1.60" height="4.60" fill="#fff"/>
<rect x="33.90" y="865.20" width="1.60" height="6.60" fill="#fff"/>
<rect x="36.60" y="868.80" width="1.60" height="3.00" fill="#fff"/>
<rect x="30.60" y="871.60" width="8.40" height="0.90" fill="#fff"/>
<path d="M18 16.08c-.76 0-1.44.3-1.96.77L8.91 12.7c.05-.23.09-.46.09-.7s-.04-.47-.09-.7l7.05-4.11c.54.5 1.25.81 2.04.81 1.66 0 3-1.34 3-3s-1.34-3-3-3-3 1.34-3 3c0 .24.04.47.09.7L8.04 9.81C7.5 9.31 6.79 9 6 9c-1.66 0-3 1.34-3 3s1.34 3 3 3c.79 0 1.5-.31 2.04-.81l7.12 4.16c-.05.21-.08.43-.08.65 0 1.61 1.31 2.92 2.920 2.920 1.61 0 2.92-1.31 2.92-2.92s-1.31-2.92-2.92-2.92z" fill="#737373" transform="translate(25.67 896.4) scale(.778 .678)"/>
</svg>
<div class="abs" style="left:0;top:66.5px;width:7px;height:868px;background:linear-gradient(90deg,rgba(0,0,0,.42),rgba(0,0,0,.16) 40%,rgba(0,0,0,0))"></div>
<svg class="abs" style="left:0;top:0;pointer-events:none" width="2543" height="934" viewBox="0 0 2543 934"><path fill-rule="evenodd" fill="#ed1c24" d="M225 100H2544.9V136.7H225Z M230 105V131.89999999999998H2539.9V105Z"/></svg>
<svg class="abs" style="left:0;top:0;pointer-events:none" width="2543" height="934" viewBox="0 0 2543 934"><path fill-rule="evenodd" fill="#ed1c24" d="M226 469.4H2546.9V936H226Z M231 474.4V931H2541.9V474.4Z"/></svg>
<svg class="abs" style="left:0;top:0;pointer-events:none" width="2543" height="934" viewBox="0 0 2543 934"><path fill-rule="evenodd" fill="#ed1c24" d="M1859.1 652.9H1925.9V729.8H1859.1Z M1863.8999999999999 657.6999999999999V725.0H1921.1000000000001V657.6999999999999Z"/></svg>
</div></body></html>
